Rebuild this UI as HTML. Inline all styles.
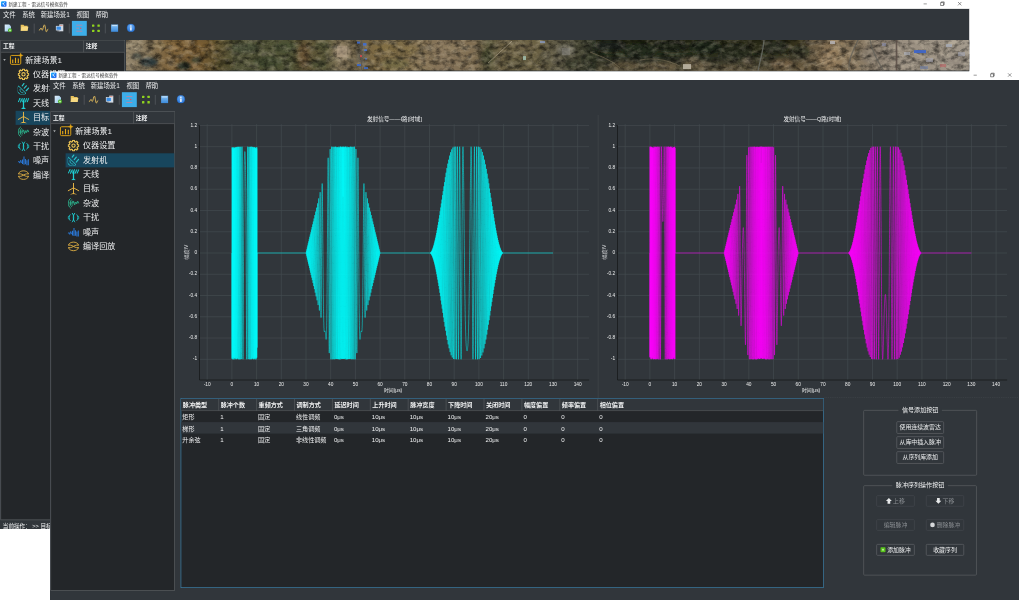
<!DOCTYPE html><html lang="zh-CN"><head><meta charset="utf-8"><title>新建工程 - 雷达信号模拟软件</title><style>
html,body{margin:0;padding:0;background:#fff;}body{width:1019px;height:600px;position:relative;overflow:hidden;font-family:"Liberation Sans","Noto Sans CJK SC",sans-serif;}.r{position:absolute;display:block}.t{position:absolute;white-space:nowrap;overflow:visible;}.win{position:absolute;overflow:hidden}
</style></head><body><div id="root" style="position:absolute;left:0;top:0;width:1019px;height:600px;will-change:transform;opacity:.999">
<div class="win" style="left:0;top:0;width:970px;height:529px">
<svg class="r" style="left:0;top:0" width="970" height="529" viewBox="0 0 970 529" fill="none"><rect x="0.00" y="8.60" width="969.20" height="521.00" fill="#31363b"/>
<rect x="0.00" y="0.00" width="969.20" height="8.70" fill="#ffffff"/>
<svg x="1.00" y="1.00" width="5.7" height="6.0" viewBox="0 0 12 12"><defs><linearGradient id="agu1" x1="0" y1="0" x2="1" y2="1"><stop offset="0" stop-color="#1ab4ff"/><stop offset="1" stop-color="#2453ee"/></linearGradient></defs><rect x="0" y="0" width="12" height="12" rx="2.400" fill="url(#agu1)"/><path d="M4.600 5.200 8 9.600" stroke="#fff" stroke-width="1.300" stroke-linecap="round" fill="none"/><circle cx="4.700" cy="5.300" r="1.300" fill="#fff"/><circle cx="7.400" cy="2.700" r=".9" fill="#e8f4ff"/><path d="M5.400 4.600 7.200 3" stroke="#dcecff" stroke-width=".7"/></svg>
<g transform="translate(918 0)"><path d="M5.600 3.900h3.200" stroke="#555" stroke-width=".6" fill="none"/><path d="M22.600 2.600h2.900v2.900h-2.900zM23.300 2.600v-.7h2.900v2.900h-.7" stroke="#333" stroke-width=".55" fill="none"/><path d="M40 2l3.400 3.400M43.400 2l-3.400 3.400" stroke="#444" stroke-width=".55" fill="none"/></g>
<defs><linearGradient id="ndu2" x1="0" y1="0" x2="1" y2="1"><stop offset="0" stop-color="#e3f1fb"/><stop offset="1" stop-color="#8fc4ec"/></linearGradient></defs><path d="M4.700 24.400h4.300l2 2v5.200h-6.300z" fill="url(#ndu2)"/><path d="M9 24.400v2h2z" fill="#b5d6f0"/><circle cx="10" cy="30.300" r="2" fill="#4db528"/><path d="M9 30.300h2M10 29.300v2" stroke="#e8ffe0" stroke-width=".6"/>
<path d="M20.700 24.800h2.800l.8 1h3.300v4.900h-6.900z" fill="#e8c25c"/><path d="M20.700 30.700l.9-4h6.800l-.9 4z" fill="#f7da82"/>
<rect x="33.70" y="23.60" width="1.00" height="9.80" fill="#4d5156"/>
<path d="M39.300 30.300c.8 0 1.100-2.300 1.700-2.300s.7 2.200 1.300 2.200 1.300-5.400 2.100-5.400 1.300 7 2 7 .7-2.600 1.400-2.600" stroke="#dcb75c" stroke-width="1" fill="none" stroke-linecap="round" stroke-linejoin="round"/>
<rect x="59.300" y="24.300" width="4" height="7" fill="#d3dae2"/><rect x="60" y="25" width="2.600" height=".6" fill="#e0705a"/><rect x="56.200" y="26.200" width="5" height="3.900" fill="#3a8ee6" stroke="#e4ebf2" stroke-width=".6"/><rect x="57.400" y="30.500" width="2.800" height=".8" fill="#b4bcc6"/>
<rect x="68.80" y="23.60" width="1.00" height="9.80" fill="#4d5156"/>
<rect x="71.90" y="20.90" width="14.90" height="14.90" fill="#3daee9"/>
<path d="M76.300 25.200h6M76.300 31.200h6M76.300 28.200h2.800" stroke="#d97d92" stroke-width=".7" fill="none"/><circle cx="80.700" cy="28.200" r=".7" fill="#e8505e"/>
<rect x="92" y="24.400" width="2.400" height="2.400" rx=".5" fill="#8fd31f"/><rect x="97.400" y="24.400" width="2.400" height="2.400" rx=".5" fill="#8fd31f"/><rect x="92" y="29.700" width="2.400" height="2.400" rx=".5" fill="#8fd31f"/><rect x="97.400" y="29.700" width="2.400" height="2.400" rx=".5" fill="#8fd31f"/>
<rect x="104.80" y="23.60" width="1.00" height="9.80" fill="#4d5156"/>
<defs><linearGradient id="bsu3" x1="0" y1="0" x2="0" y2="1"><stop offset="0" stop-color="#86c0f3"/><stop offset="1" stop-color="#3b8adb"/></linearGradient></defs><rect x="111.100" y="24.500" width="7" height="7.300" fill="url(#bsu3)"/><rect x="112.100" y="25.200" width="5" height=".9" fill="#d8ebfb"/>
<defs><radialGradient id="igu4" cx=".5" cy=".3" r=".8"><stop offset="0" stop-color="#6fb0f5"/><stop offset="1" stop-color="#1f6fd6"/></radialGradient></defs><circle cx="130.900" cy="27.900" r="3.900" fill="url(#igu4)" stroke="#1d64c4" stroke-width=".3"/><circle cx="130.900" cy="25.900" r=".75" fill="#fff"/><rect x="130.200" y="27.200" width="1.400" height="3.400" rx=".3" fill="#fff"/>
<rect x="0.75" y="40.35" width="123.90" height="479.50" fill="#232629" stroke="#5a5e62" stroke-width="0.7"/>
<rect x="1.10" y="40.70" width="123.20" height="11.40" fill="#31363b"/>
<path d="M1.10 52.30L124.30 52.30" stroke="#5a5e62" stroke-width="0.7"/>
<path d="M83.60 40.70L83.60 52.30" stroke="#5a5e62" stroke-width="0.7"/>
<path d="M3.200 59.00h2.600l-1.300 2z" fill="#a4a7aa"/>
<g transform="translate(0 60.30)"><rect x="10.450" y="-4.850" width="10.300" height="8.900" rx="1.100" fill="none" stroke="#e8a917" stroke-width=".9"/><path d="M12.700 2.700v-3.400M15.500 2.700v-5.200M18.300 2.700v-4.600" stroke="#e8a917" stroke-width="1.100"/><circle cx="20.700" cy="-4.900" r="1.900" fill="#232629"/><path d="M20.700 -7.400l.7 1.800 1.800.7-1.800.7-.7 1.800-.7-1.800-1.800-.7 1.800-.7z" fill="#e8a917" stroke="#e8a917" stroke-width=".3" stroke-linejoin="round"/></g>
<svg x="17.70" y="68.50" width="11.6" height="11.6" viewBox="0 0 24 24"><path d="M10.200 1.200h3.600l.5 2.700 1.900.8 2.300-1.600 2.500 2.500-1.600 2.300.8 1.900 2.700.5v3.600l-2.700.5-.8 1.900 1.600 2.300-2.500 2.500-2.300-1.600-1.900.8-.5 2.700h-3.600l-.5-2.700-1.900-.8-2.300 1.600-2.500-2.500 1.600-2.300-.8-1.900-2.700-.5v-3.600l2.700-.5.8-1.900-1.600-2.300 2.500-2.500 2.300 1.600 1.900-.8z" fill="none" stroke="#e7c053" stroke-width="2.500" stroke-linejoin="round"/><circle cx="12" cy="12" r="3.400" fill="none" stroke="#e7c053" stroke-width="2.300"/></svg>
<svg x="17.70" y="82.90" width="11.6" height="11.6" viewBox="0 0 24 24"><path d="M1.700 6.400a10.900 10.900 0 0 0 15.500 15.300z" fill="none" stroke="#2cc3c9" stroke-width="2" stroke-linejoin="round"/><path d="M4.800 12.500a7.500 7.500 0 0 0 7 8.200" stroke="#2cc3c9" stroke-width="1.600" fill="none"/><path d="M9.400 6 12.800 1.400M13.600 11 17.800 6M17.600 16.200l4.900-5.500" stroke="#2cc3c9" stroke-width="2.500" fill="none" stroke-linecap="round"/></svg>
<svg x="17.70" y="97.30" width="11.6" height="11.6" viewBox="0 0 24 24"><path d="M12 6.500v15" stroke="#1fd0d6" stroke-width="2.600" fill="none"/><path d="M6.800 24h10.400l-5.200-4.200z" fill="#1fd0d6"/><path d="M1.200 10 4.800 1.500M5.800 10.500 9.400 2M10.400 10 14 1.500M15 10.500 18.600 2M19.600 10l3.600-8.500" stroke="#1fd0d6" stroke-width="2" fill="none"/><path d="M4.800 1.500 5.800 10.500M9.400 2l1 8M14 1.500l1 9M18.600 2l1 8" stroke="#1fd0d6" stroke-width="1" fill="none"/></svg>
<rect x="15.60" y="110.80" width="108.70" height="14.10" fill="#18465d"/>
<svg x="17.70" y="111.70" width="11.6" height="11.6" viewBox="0 0 24 24"><path d="M12 .5v22M12 10 .8 16.200M12 10l11.200 6.200M12 21.500 6.200 24M12 21.500l5.800 2.500" stroke="#e6b445" stroke-width="2" fill="none" stroke-linecap="round"/></svg>
<svg x="17.70" y="126.10" width="11.6" height="11.6" viewBox="0 0 24 24"><path d="M6.500 1.500c-7 5-7 16 0 21M8.500 4.500c-4.500 4-4.500 11 0 15M10.300 7c-2.500 3-2.500 7 0 10" stroke="#2fc49a" stroke-width="1.700" fill="none"/><path d="M4 12h3" stroke="#2fc49a" stroke-width="6" opacity=".55"/><path d="M10 12.500c.8 0 1.200-4.500 2-4.500s1.300 7.500 2.200 7.500 1.400-6 2.300-6 1.200 3.800 2 3.800 1.200-5.500 2-5.500 1.200 4.700 2.700 4.700" stroke="#2fc49a" stroke-width="1.900" fill="none" stroke-linecap="round"/></svg>
<svg x="17.70" y="140.50" width="11.6" height="11.6" viewBox="0 0 24 24"><path d="M9 2.500c4.500 5 4.500 14 0 19M15 2.500c-4.500 5-4.500 14 0 19" stroke="#1fd0d6" stroke-width="2" fill="none"/><path d="M5.500 5.500c-3.500 3.500-3.500 9.500 0 13M18.500 5.500c3.500 3.500 3.500 9.500 0 13M2 8.500c-1.800 2-1.800 5 0 7M22 8.500c1.800 2 1.800 5 0 7" stroke="#1fd0d6" stroke-width="1.800" fill="none"/></svg>
<svg x="17.70" y="154.90" width="11.6" height="11.6" viewBox="0 0 24 24"><path d="M.8 15.500l1.700-2.500 1.800 4 2-6 1.700 5.500" stroke="#2a78d8" stroke-width="1.800" fill="none" stroke-linejoin="round"/><path d="M10 9.500v9.500M13 3.500v17M16 8.500v11M19 11v10.500M22 9v12.500" stroke="#2a78d8" stroke-width="2.100" fill="none"/></svg>
<svg x="17.70" y="169.30" width="11.6" height="11.6" viewBox="0 0 24 24"><path d="M1.500 9.500c2.500-8.500 18.500-8.500 21 0M22.500 14.500c-2.500 8.500-18.500 8.500-21 0" stroke="#e6b445" stroke-width="1.800" fill="none"/><path d="M1 9.500h5c3 0 9 5 12 5h5M1 14.500h5c3 0 9-5 12-5h5" stroke="#e6b445" stroke-width="1.800" fill="none"/></svg></svg>
<svg class="r" style="left:126.0px;top:39.9px" width="843.5" height="30.7" viewBox="0 0 843.5 30.7" preserveAspectRatio="none"><defs><linearGradient id="mg" x1="0" y1="0" x2="1" y2="0"><stop offset="0.0" stop-color="#8f8168"/><stop offset="0.0225" stop-color="#86775c"/><stop offset="0.0462" stop-color="#7d6540"/><stop offset="0.0818" stop-color="#785c34"/><stop offset="0.1055" stop-color="#62532f"/><stop offset="0.1292" stop-color="#525338"/><stop offset="0.1944" stop-color="#4f5235"/><stop offset="0.2122" stop-color="#5e5234"/><stop offset="0.2359" stop-color="#585638"/><stop offset="0.2537" stop-color="#84765a"/><stop offset="0.2727" stop-color="#6e6248"/><stop offset="0.2916" stop-color="#7a6844"/><stop offset="0.3248" stop-color="#7d6c48"/><stop offset="0.3723" stop-color="#86745a"/><stop offset="0.4138" stop-color="#7f6e52"/><stop offset="0.4292" stop-color="#58553a"/><stop offset="0.4434" stop-color="#6b6044"/><stop offset="0.4908" stop-color="#696043"/><stop offset="0.5098" stop-color="#5f5a46"/><stop offset="0.5382" stop-color="#454533"/><stop offset="0.556" stop-color="#2b3024"/><stop offset="0.6094" stop-color="#282d22"/><stop offset="0.6805" stop-color="#2b2f23"/><stop offset="0.7516" stop-color="#333426"/><stop offset="0.7872" stop-color="#403c2b"/><stop offset="0.8168" stop-color="#6c5d45"/><stop offset="0.8405" stop-color="#937c5c"/><stop offset="0.8666" stop-color="#8a7a62"/><stop offset="0.8939" stop-color="#8d8172"/><stop offset="0.9176" stop-color="#9a8f80"/><stop offset="0.9994" stop-color="#a0978a"/></linearGradient><filter id="mb" x="-20%" y="-50%" width="140%" height="200%"><feGaussianBlur stdDeviation="1.8"/></filter><filter id="mb2" x="-20%" y="-50%" width="140%" height="200%"><feGaussianBlur stdDeviation=".5"/></filter><filter id="mn" x="0" y="0" width="100%" height="100%"><feTurbulence type="fractalNoise" baseFrequency="0.14 0.2" numOctaves="4" seed="4"/><feColorMatrix type="matrix" values="0 0 0 0 0  0 0 0 0 0  0 0 0 0 0  2.4 0 0 0 -0.95"/></filter><filter id="mn2" x="0" y="0" width="100%" height="100%"><feTurbulence type="fractalNoise" baseFrequency="0.12 0.18" numOctaves="4" seed="23"/><feColorMatrix type="matrix" values="0 0 0 0 .95  0 0 0 0 .85  0 0 0 0 .65  0 2.6 0 0 -1.15"/></filter><linearGradient id="mv" x1="0" y1="0" x2="0" y2="1"><stop offset="0" stop-color="#0c120a" stop-opacity=".55"/><stop offset=".5" stop-color="#1a1e12" stop-opacity=".15"/><stop offset=".75" stop-color="#8a7452" stop-opacity=".3"/><stop offset="1" stop-color="#927a56" stop-opacity=".55"/></linearGradient><clipPath id="mc"><rect x="0" y="0" width="843.5" height="30.7"/></clipPath></defs><g clip-path="url(#mc)"><rect width="843.5" height="30.7" fill="url(#mg)"/><g filter="url(#mb)"><rect x="470" y="-4" width="210" height="40" fill="url(#mv)"/><ellipse cx="23.0" cy="22.1" rx="9" ry="4.5" fill="#27363a" opacity="0.95"/><ellipse cx="11.0" cy="16.1" rx="5" ry="3" fill="#3a4644" opacity="0.7"/><ellipse cx="7.0" cy="6.1" rx="8" ry="4" fill="#a39479" opacity="0.7"/><ellipse cx="32.0" cy="5.1" rx="8" ry="3" fill="#93805c" opacity="0.6"/><ellipse cx="58.0" cy="26.1" rx="7" ry="4" fill="#222b22" opacity="0.95"/><ellipse cx="70.0" cy="20.1" rx="5" ry="3" fill="#2d3327" opacity="0.8"/><ellipse cx="50.0" cy="7.1" rx="10" ry="4" fill="#8a6a3a" opacity="0.6"/><ellipse cx="79.0" cy="6.1" rx="10" ry="4" fill="#7e6034" opacity="0.6"/><ellipse cx="99.0" cy="24.1" rx="10" ry="5" fill="#48432a" opacity="0.6"/><ellipse cx="119.0" cy="8.1" rx="14" ry="5" fill="#49523a" opacity="0.6"/><ellipse cx="142.0" cy="22.1" rx="14" ry="5" fill="#3f482f" opacity="0.7"/><ellipse cx="159.0" cy="7.1" rx="12" ry="4" fill="#454e33" opacity="0.6"/><ellipse cx="177.0" cy="15.1" rx="6" ry="12" fill="#6e5636" opacity="0.6"/><ellipse cx="192.0" cy="24.1" rx="8" ry="4" fill="#434b31" opacity="0.6"/><ellipse cx="196.0" cy="6.1" rx="8" ry="4" fill="#50553a" opacity="0.5"/><ellipse cx="216.0" cy="12.1" rx="9" ry="7" fill="#a08e74" opacity="0.85"/><ellipse cx="236.0" cy="15.1" rx="5" ry="14" fill="#6a6458" opacity="0.7"/><ellipse cx="259.0" cy="8.1" rx="12" ry="5" fill="#86703f" opacity="0.5"/><ellipse cx="269.0" cy="24.1" rx="14" ry="5" fill="#6b6a40" opacity="0.5"/><ellipse cx="284.0" cy="10.1" rx="8" ry="4" fill="#8a7648" opacity="0.5"/><ellipse cx="299.0" cy="20.1" rx="14" ry="6" fill="#8f7c5e" opacity="0.5"/><ellipse cx="329.0" cy="8.1" rx="16" ry="5" fill="#92805f" opacity="0.5"/><ellipse cx="344.0" cy="24.1" rx="10" ry="4" fill="#7a6a4e" opacity="0.6"/><ellipse cx="361.0" cy="17.1" rx="6" ry="8" fill="#3f4229" opacity="0.85"/><ellipse cx="389.0" cy="24.1" rx="14" ry="4" fill="#5c563a" opacity="0.6"/><ellipse cx="399.0" cy="6.1" rx="12" ry="4" fill="#766a4e" opacity="0.5"/><ellipse cx="419.0" cy="18.1" rx="8" ry="6" fill="#5a563f" opacity="0.5"/><ellipse cx="440.0" cy="10.1" rx="9" ry="6" fill="#77746a" opacity="0.6"/><ellipse cx="446.0" cy="24.1" rx="8" ry="4" fill="#3a3c2b" opacity="0.8"/><ellipse cx="464.0" cy="18.1" rx="8" ry="7" fill="#383b2b" opacity="0.7"/><ellipse cx="484.0" cy="6.1" rx="16" ry="5" fill="#1f251a" opacity="0.95"/><ellipse cx="514.0" cy="10.1" rx="16" ry="6" fill="#262c1e" opacity="0.9"/><ellipse cx="544.0" cy="6.1" rx="16" ry="5" fill="#20261b" opacity="0.9"/><ellipse cx="499.0" cy="25.1" rx="16" ry="4" fill="#665a42" opacity="0.7"/><ellipse cx="534.0" cy="26.1" rx="18" ry="4" fill="#74654b" opacity="0.75"/><ellipse cx="564.0" cy="22.1" rx="10" ry="5" fill="#7a6a50" opacity="0.6"/><ellipse cx="579.0" cy="7.1" rx="16" ry="6" fill="#252a1d" opacity="0.95"/><ellipse cx="609.0" cy="12.1" rx="16" ry="8" fill="#2a2e20" opacity="0.9"/><ellipse cx="574.0" cy="25.1" rx="12" ry="4" fill="#70624a" opacity="0.7"/><ellipse cx="604.0" cy="27.1" rx="12" ry="3" fill="#6e5f45" opacity="0.6"/><ellipse cx="622.0" cy="22.1" rx="6" ry="4" fill="#80705a" opacity="0.5"/><ellipse cx="649.0" cy="7.1" rx="12" ry="6" fill="#2e3124" opacity="0.9"/><ellipse cx="674.0" cy="12.1" rx="10" ry="6" fill="#343526" opacity="0.85"/><ellipse cx="656.0" cy="24.1" rx="12" ry="5" fill="#7b6649" opacity="0.75"/><ellipse cx="679.0" cy="26.1" rx="10" ry="4" fill="#6a5a40" opacity="0.6"/><ellipse cx="702.0" cy="18.1" rx="10" ry="8" fill="#9a8262" opacity="0.7"/><ellipse cx="722.0" cy="8.1" rx="8" ry="5" fill="#7f7058" opacity="0.6"/><ellipse cx="724.0" cy="24.1" rx="8" ry="4" fill="#8a7a64" opacity="0.6"/><ellipse cx="744.0" cy="15.1" rx="10" ry="8" fill="#7d7468" opacity="0.5"/><ellipse cx="762.0" cy="10.1" rx="6" ry="8" fill="#8f8678" opacity="0.6"/><ellipse cx="784.0" cy="20.1" rx="12" ry="6" fill="#9b9184" opacity="0.6"/><ellipse cx="809.0" cy="10.1" rx="12" ry="6" fill="#9a8f80" opacity="0.6"/><ellipse cx="829.0" cy="22.1" rx="10" ry="5" fill="#8e8478" opacity="0.6"/></g><rect width="843.5" height="30.7" filter="url(#mn)" fill="#0a0f08" opacity=".55"/><rect width="843.5" height="30.7" filter="url(#mn2)" opacity=".22"/><g filter="url(#mb2)" transform="translate(-126 -39.9)" fill="none"><path d="M361.500 40v31" stroke="#5a564e" stroke-width="1.600" opacity=".8"/><path d="M512 41 488 63" stroke="#c4b8a0" stroke-width=".7" opacity=".7"/><path d="M420 58 470 50" stroke="#a89a80" stroke-width=".5" opacity=".5"/><path d="M764 40c-1 12-4 20-6 31" stroke="#6c6e68" stroke-width="1.300" opacity=".8"/><path d="M858 40c-4 10-10 18-9 31M870 40c2 12 8 22 14 31" stroke="#5e5c56" stroke-width="1.300" opacity=".7"/><path d="M896.500 40v31" stroke="#5b4e46" stroke-width="1.700" opacity=".85"/><path d="M815 66c12-6 24-8 36-14" stroke="#b8a888" stroke-width=".6" opacity=".6"/><path d="M590 52c10 4 22 8 30 16M640 60c14-3 28 0 40 6" stroke="#8a7c60" stroke-width=".8" opacity=".6"/><rect x="357" y="41.5" width="3" height="2" fill="#3a6ad0" opacity="0.9"/><rect x="363" y="43" width="3.5" height="2.5" fill="#3f6fd6" opacity="0.9"/><rect x="364" y="49" width="3" height="2" fill="#4a78d8" opacity="0.8"/><rect x="357" y="64" width="4" height="2" fill="#3a6ad0" opacity="0.9"/><rect x="364" y="67" width="4" height="2" fill="#3f6fd6" opacity="0.8"/><rect x="360" y="55" width="2" height="2" fill="#d04a4a" opacity="0.9"/><rect x="365" y="58" width="2" height="1.5" fill="#5a86dc" opacity="0.7"/><rect x="914" y="50" width="12" height="3" fill="#3f66c8" opacity="0.95"/><rect x="904" y="52" width="6" height="3" fill="#b8bcc8" opacity="0.6"/><rect x="926" y="58" width="7" height="4" fill="#a8a8b4" opacity="0.6"/><rect x="830" y="41" width="5" height="3" fill="#c8c8d0" opacity="0.7"/><rect x="337" y="46" width="10" height="11" fill="#b4a088" opacity="0.5"/><rect x="523" y="56" width="3" height="4" fill="#a8c8b8" opacity="0.8"/><rect x="940" y="64" width="6" height="3" fill="#b86a6a" opacity="0.7"/><rect x="946" y="44" width="6" height="3" fill="#aab0c0" opacity="0.7"/><rect x="958" y="52" width="7" height="4" fill="#a0a4b0" opacity="0.6"/><rect x="683" y="64" width="8" height="5" fill="#c8c0b0" opacity="0.8"/><rect x="540" y="41" width="5" height="2" fill="#8aa0d0" opacity="0.7"/><rect x="920" y="66" width="8" height="3" fill="#7080a8" opacity="0.6"/><rect x="882" y="43" width="4" height="3" fill="#8890b0" opacity="0.6"/><rect x="562" y="48" width="8" height="7" fill="#8c8a84" opacity="0.5"/></g></g></svg>
<div class="t" style="left:8.40px;top:1.07px;height:7.28px;line-height:7.28px;font-size:4.55px;color:#3a3a3a;font-weight:400;word-spacing:.5px;">新建工程 - 雷达信号模拟软件</div>
<div class="t" style="left:2.90px;top:9.56px;height:10.24px;line-height:10.24px;font-size:6.4px;color:#eff0f1;font-weight:400;">文件</div>
<div class="t" style="left:22.20px;top:9.56px;height:10.24px;line-height:10.24px;font-size:6.4px;color:#eff0f1;font-weight:400;">系统</div>
<div class="t" style="left:40.70px;top:9.56px;height:10.24px;line-height:10.24px;font-size:6.4px;color:#eff0f1;font-weight:400;">新建场景1</div>
<div class="t" style="left:76.40px;top:9.56px;height:10.24px;line-height:10.24px;font-size:6.4px;color:#eff0f1;font-weight:400;">视图</div>
<div class="t" style="left:95.40px;top:9.56px;height:10.24px;line-height:10.24px;font-size:6.4px;color:#eff0f1;font-weight:400;">帮助</div>
<div class="t" style="left:2.90px;top:42.38px;height:9.28px;line-height:9.28px;font-size:5.8px;color:#eff0f1;font-weight:700;">工程</div>
<div class="t" style="left:85.80px;top:42.38px;height:9.28px;line-height:9.28px;font-size:5.8px;color:#eff0f1;font-weight:700;">注释</div>
<div class="t" style="left:25.20px;top:54.55px;height:12.96px;line-height:12.96px;font-size:8.1px;color:#eff0f1;font-weight:400;">新建场景1</div>
<div class="t" style="left:33.00px;top:68.95px;height:12.96px;line-height:12.96px;font-size:8.1px;color:#eff0f1;font-weight:400;">仪器设置</div>
<div class="t" style="left:33.00px;top:83.35px;height:12.96px;line-height:12.96px;font-size:8.1px;color:#eff0f1;font-weight:400;">发射机</div>
<div class="t" style="left:33.00px;top:97.75px;height:12.96px;line-height:12.96px;font-size:8.1px;color:#eff0f1;font-weight:400;">天线</div>
<div class="t" style="left:33.00px;top:112.15px;height:12.96px;line-height:12.96px;font-size:8.1px;color:#eff0f1;font-weight:400;">目标</div>
<div class="t" style="left:33.00px;top:126.55px;height:12.96px;line-height:12.96px;font-size:8.1px;color:#eff0f1;font-weight:400;">杂波</div>
<div class="t" style="left:33.00px;top:140.95px;height:12.96px;line-height:12.96px;font-size:8.1px;color:#eff0f1;font-weight:400;">干扰</div>
<div class="t" style="left:33.00px;top:155.35px;height:12.96px;line-height:12.96px;font-size:8.1px;color:#eff0f1;font-weight:400;">噪声</div>
<div class="t" style="left:33.00px;top:169.75px;height:12.96px;line-height:12.96px;font-size:8.1px;color:#eff0f1;font-weight:400;">编译回放</div>
<div class="t" style="left:2.80px;top:521.52px;height:8.96px;line-height:8.96px;font-size:5.6px;color:#eff0f1;font-weight:400;">当前操作： &gt;&gt; 目标</div>
</div>
<div class="win" style="left:50px;top:71px;width:969px;height:529px"><div style="position:absolute;left:0;top:0;width:969px;height:529px">
<svg class="r" style="left:0;top:0" width="970" height="529" viewBox="0 0 970 529" fill="none"><g transform="translate(0 0.3)">
<rect x="0.00" y="8.60" width="969.20" height="521.00" fill="#31363b"/>
<rect x="0.00" y="0.00" width="969.20" height="8.70" fill="#ffffff"/>
<svg x="1.00" y="1.00" width="5.7" height="6.0" viewBox="0 0 12 12"><defs><linearGradient id="agu5" x1="0" y1="0" x2="1" y2="1"><stop offset="0" stop-color="#1ab4ff"/><stop offset="1" stop-color="#2453ee"/></linearGradient></defs><rect x="0" y="0" width="12" height="12" rx="2.400" fill="url(#agu5)"/><path d="M4.600 5.200 8 9.600" stroke="#fff" stroke-width="1.300" stroke-linecap="round" fill="none"/><circle cx="4.700" cy="5.300" r="1.300" fill="#fff"/><circle cx="7.400" cy="2.700" r=".9" fill="#e8f4ff"/><path d="M5.400 4.600 7.200 3" stroke="#dcecff" stroke-width=".7"/></svg>
<g transform="translate(918 0)"><path d="M5.600 3.900h3.200" stroke="#555" stroke-width=".6" fill="none"/><path d="M22.600 2.600h2.900v2.900h-2.900zM23.300 2.600v-.7h2.900v2.900h-.7" stroke="#333" stroke-width=".55" fill="none"/><path d="M40 2l3.400 3.400M43.400 2l-3.400 3.400" stroke="#444" stroke-width=".55" fill="none"/></g>
<defs><linearGradient id="ndu6" x1="0" y1="0" x2="1" y2="1"><stop offset="0" stop-color="#e3f1fb"/><stop offset="1" stop-color="#8fc4ec"/></linearGradient></defs><path d="M4.700 24.400h4.300l2 2v5.200h-6.300z" fill="url(#ndu6)"/><path d="M9 24.400v2h2z" fill="#b5d6f0"/><circle cx="10" cy="30.300" r="2" fill="#4db528"/><path d="M9 30.300h2M10 29.300v2" stroke="#e8ffe0" stroke-width=".6"/>
<path d="M20.700 24.800h2.800l.8 1h3.300v4.900h-6.900z" fill="#e8c25c"/><path d="M20.700 30.700l.9-4h6.800l-.9 4z" fill="#f7da82"/>
<rect x="33.70" y="23.60" width="1.00" height="9.80" fill="#4d5156"/>
<path d="M39.300 30.300c.8 0 1.100-2.300 1.700-2.300s.7 2.200 1.300 2.200 1.300-5.400 2.100-5.400 1.300 7 2 7 .7-2.600 1.400-2.600" stroke="#dcb75c" stroke-width="1" fill="none" stroke-linecap="round" stroke-linejoin="round"/>
<rect x="59.300" y="24.300" width="4" height="7" fill="#d3dae2"/><rect x="60" y="25" width="2.600" height=".6" fill="#e0705a"/><rect x="56.200" y="26.200" width="5" height="3.900" fill="#3a8ee6" stroke="#e4ebf2" stroke-width=".6"/><rect x="57.400" y="30.500" width="2.800" height=".8" fill="#b4bcc6"/>
<rect x="68.80" y="23.60" width="1.00" height="9.80" fill="#4d5156"/>
<rect x="71.90" y="20.90" width="14.90" height="14.90" fill="#3daee9"/>
<path d="M76.300 25.200h6M76.300 31.200h6M76.300 28.200h2.800" stroke="#d97d92" stroke-width=".7" fill="none"/><circle cx="80.700" cy="28.200" r=".7" fill="#e8505e"/>
<rect x="92" y="24.400" width="2.400" height="2.400" rx=".5" fill="#8fd31f"/><rect x="97.400" y="24.400" width="2.400" height="2.400" rx=".5" fill="#8fd31f"/><rect x="92" y="29.700" width="2.400" height="2.400" rx=".5" fill="#8fd31f"/><rect x="97.400" y="29.700" width="2.400" height="2.400" rx=".5" fill="#8fd31f"/>
<rect x="104.80" y="23.60" width="1.00" height="9.80" fill="#4d5156"/>
<defs><linearGradient id="bsu7" x1="0" y1="0" x2="0" y2="1"><stop offset="0" stop-color="#86c0f3"/><stop offset="1" stop-color="#3b8adb"/></linearGradient></defs><rect x="111.100" y="24.500" width="7" height="7.300" fill="url(#bsu7)"/><rect x="112.100" y="25.200" width="5" height=".9" fill="#d8ebfb"/>
<defs><radialGradient id="igu8" cx=".5" cy=".3" r=".8"><stop offset="0" stop-color="#6fb0f5"/><stop offset="1" stop-color="#1f6fd6"/></radialGradient></defs><circle cx="130.900" cy="27.900" r="3.900" fill="url(#igu8)" stroke="#1d64c4" stroke-width=".3"/><circle cx="130.900" cy="25.900" r=".75" fill="#fff"/><rect x="130.200" y="27.200" width="1.400" height="3.400" rx=".3" fill="#fff"/>
<rect x="0.75" y="40.35" width="123.90" height="478.90" fill="#232629" stroke="#5a5e62" stroke-width="0.7"/>
<rect x="1.10" y="40.70" width="123.20" height="11.40" fill="#31363b"/>
<path d="M1.10 52.30L124.30 52.30" stroke="#5a5e62" stroke-width="0.7"/>
<path d="M83.60 40.70L83.60 52.30" stroke="#5a5e62" stroke-width="0.7"/>
<path d="M3.200 59.00h2.600l-1.300 2z" fill="#a4a7aa"/>
<g transform="translate(0 60.30)"><rect x="10.450" y="-4.850" width="10.300" height="8.900" rx="1.100" fill="none" stroke="#e8a917" stroke-width=".9"/><path d="M12.700 2.700v-3.400M15.500 2.700v-5.200M18.300 2.700v-4.600" stroke="#e8a917" stroke-width="1.100"/><circle cx="20.700" cy="-4.900" r="1.900" fill="#232629"/><path d="M20.700 -7.400l.7 1.800 1.800.7-1.800.7-.7 1.800-.7-1.800-1.800-.7 1.800-.7z" fill="#e8a917" stroke="#e8a917" stroke-width=".3" stroke-linejoin="round"/></g>
<svg x="17.70" y="68.50" width="11.6" height="11.6" viewBox="0 0 24 24"><path d="M10.200 1.200h3.600l.5 2.700 1.900.8 2.300-1.600 2.500 2.500-1.600 2.300.8 1.900 2.700.5v3.600l-2.700.5-.8 1.900 1.600 2.300-2.500 2.500-2.300-1.600-1.900.8-.5 2.700h-3.600l-.5-2.700-1.900-.8-2.300 1.600-2.500-2.500 1.600-2.300-.8-1.900-2.700-.5v-3.600l2.700-.5.8-1.900-1.600-2.300 2.500-2.500 2.300 1.600 1.900-.8z" fill="none" stroke="#e7c053" stroke-width="2.500" stroke-linejoin="round"/><circle cx="12" cy="12" r="3.400" fill="none" stroke="#e7c053" stroke-width="2.300"/></svg>
<rect x="15.60" y="82.00" width="108.70" height="14.10" fill="#18465d"/>
<svg x="17.70" y="82.90" width="11.6" height="11.6" viewBox="0 0 24 24"><path d="M1.700 6.400a10.900 10.900 0 0 0 15.500 15.300z" fill="none" stroke="#2cc3c9" stroke-width="2" stroke-linejoin="round"/><path d="M4.800 12.500a7.500 7.500 0 0 0 7 8.200" stroke="#2cc3c9" stroke-width="1.600" fill="none"/><path d="M9.400 6 12.800 1.400M13.600 11 17.800 6M17.600 16.200l4.900-5.500" stroke="#2cc3c9" stroke-width="2.500" fill="none" stroke-linecap="round"/></svg>
<svg x="17.70" y="97.30" width="11.6" height="11.6" viewBox="0 0 24 24"><path d="M12 6.500v15" stroke="#1fd0d6" stroke-width="2.600" fill="none"/><path d="M6.800 24h10.400l-5.200-4.200z" fill="#1fd0d6"/><path d="M1.200 10 4.800 1.500M5.800 10.500 9.400 2M10.400 10 14 1.500M15 10.500 18.600 2M19.600 10l3.600-8.500" stroke="#1fd0d6" stroke-width="2" fill="none"/><path d="M4.800 1.500 5.800 10.500M9.400 2l1 8M14 1.500l1 9M18.600 2l1 8" stroke="#1fd0d6" stroke-width="1" fill="none"/></svg>
<svg x="17.70" y="111.70" width="11.6" height="11.6" viewBox="0 0 24 24"><path d="M12 .5v22M12 10 .8 16.200M12 10l11.200 6.200M12 21.500 6.200 24M12 21.500l5.800 2.500" stroke="#e6b445" stroke-width="2" fill="none" stroke-linecap="round"/></svg>
<svg x="17.70" y="126.10" width="11.6" height="11.6" viewBox="0 0 24 24"><path d="M6.500 1.500c-7 5-7 16 0 21M8.500 4.500c-4.500 4-4.500 11 0 15M10.300 7c-2.500 3-2.500 7 0 10" stroke="#2fc49a" stroke-width="1.700" fill="none"/><path d="M4 12h3" stroke="#2fc49a" stroke-width="6" opacity=".55"/><path d="M10 12.500c.8 0 1.200-4.500 2-4.500s1.300 7.500 2.200 7.500 1.400-6 2.300-6 1.200 3.800 2 3.800 1.200-5.500 2-5.500 1.200 4.700 2.700 4.700" stroke="#2fc49a" stroke-width="1.900" fill="none" stroke-linecap="round"/></svg>
<svg x="17.70" y="140.50" width="11.6" height="11.6" viewBox="0 0 24 24"><path d="M9 2.500c4.500 5 4.500 14 0 19M15 2.500c-4.500 5-4.500 14 0 19" stroke="#1fd0d6" stroke-width="2" fill="none"/><path d="M5.500 5.500c-3.500 3.500-3.500 9.500 0 13M18.500 5.500c3.500 3.500 3.500 9.500 0 13M2 8.500c-1.800 2-1.800 5 0 7M22 8.500c1.800 2 1.800 5 0 7" stroke="#1fd0d6" stroke-width="1.800" fill="none"/></svg>
<svg x="17.70" y="154.90" width="11.6" height="11.6" viewBox="0 0 24 24"><path d="M.8 15.500l1.700-2.500 1.800 4 2-6 1.700 5.500" stroke="#2a78d8" stroke-width="1.800" fill="none" stroke-linejoin="round"/><path d="M10 9.500v9.500M13 3.500v17M16 8.500v11M19 11v10.500M22 9v12.500" stroke="#2a78d8" stroke-width="2.100" fill="none"/></svg>
<svg x="17.70" y="169.30" width="11.6" height="11.6" viewBox="0 0 24 24"><path d="M1.500 9.500c2.500-8.500 18.500-8.500 21 0M22.500 14.500c-2.500 8.500-18.500 8.500-21 0" stroke="#e6b445" stroke-width="1.800" fill="none"/><path d="M1 9.500h5c3 0 9 5 12 5h5M1 14.500h5c3 0 9-5 12-5h5" stroke="#e6b445" stroke-width="1.800" fill="none"/></svg>
</g></svg>
<div class="t" style="left:8.40px;top:1.37px;height:7.28px;line-height:7.28px;font-size:4.55px;color:#3a3a3a;font-weight:400;word-spacing:.5px;">新建工程 - 雷达信号模拟软件</div>
<div class="t" style="left:2.90px;top:9.86px;height:10.24px;line-height:10.24px;font-size:6.4px;color:#eff0f1;font-weight:400;">文件</div>
<div class="t" style="left:22.20px;top:9.86px;height:10.24px;line-height:10.24px;font-size:6.4px;color:#eff0f1;font-weight:400;">系统</div>
<div class="t" style="left:40.70px;top:9.86px;height:10.24px;line-height:10.24px;font-size:6.4px;color:#eff0f1;font-weight:400;">新建场景1</div>
<div class="t" style="left:76.40px;top:9.86px;height:10.24px;line-height:10.24px;font-size:6.4px;color:#eff0f1;font-weight:400;">视图</div>
<div class="t" style="left:95.40px;top:9.86px;height:10.24px;line-height:10.24px;font-size:6.4px;color:#eff0f1;font-weight:400;">帮助</div>
<div class="t" style="left:2.90px;top:42.68px;height:9.28px;line-height:9.28px;font-size:5.8px;color:#eff0f1;font-weight:700;">工程</div>
<div class="t" style="left:85.80px;top:42.68px;height:9.28px;line-height:9.28px;font-size:5.8px;color:#eff0f1;font-weight:700;">注释</div>
<div class="t" style="left:25.20px;top:54.85px;height:12.96px;line-height:12.96px;font-size:8.1px;color:#eff0f1;font-weight:400;">新建场景1</div>
<div class="t" style="left:33.00px;top:69.25px;height:12.96px;line-height:12.96px;font-size:8.1px;color:#eff0f1;font-weight:400;">仪器设置</div>
<div class="t" style="left:33.00px;top:83.65px;height:12.96px;line-height:12.96px;font-size:8.1px;color:#eff0f1;font-weight:400;">发射机</div>
<div class="t" style="left:33.00px;top:98.05px;height:12.96px;line-height:12.96px;font-size:8.1px;color:#eff0f1;font-weight:400;">天线</div>
<div class="t" style="left:33.00px;top:112.45px;height:12.96px;line-height:12.96px;font-size:8.1px;color:#eff0f1;font-weight:400;">目标</div>
<div class="t" style="left:33.00px;top:126.85px;height:12.96px;line-height:12.96px;font-size:8.1px;color:#eff0f1;font-weight:400;">杂波</div>
<div class="t" style="left:33.00px;top:141.25px;height:12.96px;line-height:12.96px;font-size:8.1px;color:#eff0f1;font-weight:400;">干扰</div>
<div class="t" style="left:33.00px;top:155.65px;height:12.96px;line-height:12.96px;font-size:8.1px;color:#eff0f1;font-weight:400;">噪声</div>
<div class="t" style="left:33.00px;top:170.05px;height:12.96px;line-height:12.96px;font-size:8.1px;color:#eff0f1;font-weight:400;">编译回放</div>
</div></div>
<svg class="r" style="left:0;top:0" width="1019" height="600" viewBox="0 0 1019 600" fill="none"><path d="M207.20 124.2V380.0M231.90 124.2V380.0M256.60 124.2V380.0M281.30 124.2V380.0M306.00 124.2V380.0M330.70 124.2V380.0M355.40 124.2V380.0M380.10 124.2V380.0M404.80 124.2V380.0M429.50 124.2V380.0M454.20 124.2V380.0M478.90 124.2V380.0M503.60 124.2V380.0M528.30 124.2V380.0M553.00 124.2V380.0M577.70 124.2V380.0M199.50 359.30H589.10M199.50 338.04H589.10M199.50 316.78H589.10M199.50 295.52H589.10M199.50 274.26H589.10M199.50 253.00H589.10M199.50 231.74H589.10M199.50 210.48H589.10M199.50 189.22H589.10M199.50 167.96H589.10M199.50 146.70H589.10M199.50 125.44H589.10" stroke="#444a4f" stroke-width=".7" fill="none"/>
<path d="M257.1 253.0H306.0M380.1 253.0H429.5M503.6 253.0H553.0" stroke="#00ffff" stroke-width="1.3" opacity=".36" fill="none"/>
<path d="M231.9 253.0L231.9 273.2L231.9 320.3L231.9 351.3L232.0 358.8L232.0 341.1L232.0 302.7L232.0 252.6L232.1 202.7L232.1 164.6L232.1 147.3L232.1 154.4L232.2 184.4L232.2 230.1L232.2 281.0L232.2 325.4L232.3 353.2L232.3 358.3L232.3 339.5L232.3 301.3L232.4 252.4L232.4 203.6L232.4 166.0L232.4 147.7L232.5 152.7L232.5 179.7L232.5 222.8L232.5 272.3L232.6 317.6L232.6 348.8L232.6 359.3L232.6 346.9L232.7 314.5L232.7 269.0L232.7 220.3L232.7 178.5L232.8 152.5L232.8 147.6L232.8 164.7L232.8 200.2L232.9 246.6L232.9 294.1L232.9 333.2L232.9 355.7L233.0 357.3L233.0 337.7L233.0 301.0L233.0 254.7L233.1 208.2L233.1 170.7L233.1 149.6L233.1 149.1L233.2 169.1L233.2 205.5L233.2 251.1L233.2 297.0L233.3 334.3L233.3 355.8L233.3 357.5L233.3 339.2L233.4 304.4L233.4 260.0L233.4 214.4L233.4 176.1L233.5 152.3L233.5 147.3L233.5 162.1L233.5 193.6L233.6 236.0L233.6 281.5L233.6 321.6L233.6 349.2L233.7 359.3L233.7 350.2L233.7 323.6L233.7 284.5L233.8 239.9L233.8 197.6L233.8 165.3L233.8 148.4L233.9 149.8L233.9 169.3L233.9 203.2L233.9 245.6L234.0 289.2L234.0 326.6L234.0 351.3L234.0 359.3L234.1 349.3L234.1 323.2L234.1 285.4L234.1 242.2L234.1 201.0L234.2 168.4L234.2 149.8L234.2 148.1L234.2 163.5L234.3 193.4L234.3 232.8L234.3 275.4L234.3 314.3L234.4 343.3L234.4 358.0L234.4 356.1L234.4 338.1L234.5 306.8L234.5 267.2L234.5 225.5L234.5 188.1L234.6 160.8L234.6 147.6L234.6 150.4L234.6 168.7L234.7 199.7L234.7 238.6L234.7 279.5L234.7 316.4L234.8 343.9L234.8 357.9L234.8 356.6L234.8 340.3L234.9 311.3L234.9 274.1L234.9 233.9L234.9 196.5L235.0 167.2L235.0 150.1L235.0 147.5L235.0 159.7L235.1 184.8L235.1 219.2L235.1 258.3L235.1 296.5L235.2 328.7L235.2 350.6L235.2 359.2L235.2 353.6L235.3 334.5L235.3 304.6L235.3 268.0L235.3 229.5L235.4 194.2L235.4 166.6L235.4 150.3L235.4 147.2L235.5 157.8L235.5 180.4L235.5 212.2L235.5 249.1L235.6 286.4L235.6 319.4L235.6 344.0L235.6 357.4L235.7 357.9L235.7 345.6L235.7 322.0L235.7 290.1L235.8 253.9L235.8 217.6L235.8 185.7L235.8 161.8L235.9 148.7L235.9 147.9L235.9 159.3L235.9 181.5L236.0 211.9L236.0 247.0L236.0 282.6L236.0 314.8L236.1 339.9L236.1 355.2L236.1 359.1L236.1 351.2L236.2 332.5L236.2 305.1L236.2 272.2L236.2 237.2L236.3 204.0L236.3 176.2L236.3 156.6L236.3 147.3L236.4 149.2L236.4 161.9L236.4 184.1L236.4 213.3L236.4 246.6L236.5 280.4L236.5 311.3L236.5 336.3L236.5 352.8L236.6 359.2L236.6 355.1L236.6 340.9L236.6 318.2L236.7 289.1L236.7 256.6L236.7 223.8L236.7 194.0L236.8 169.8L236.8 153.7L236.8 146.9L236.8 150.0L236.9 162.8L236.9 183.8L236.9 211.1L236.9 242.2L237.0 274.2L237.0 304.1L237.0 329.4L237.0 347.8L237.1 357.7L237.1 358.5L237.1 349.9L237.1 333.0L237.2 309.3L237.2 280.7L237.2 250.0L237.2 219.5L237.3 192.0L237.3 169.7L237.3 154.3L237.3 147.2L237.4 148.7L237.4 158.7L237.4 176.4L237.4 200.1L237.5 228.0L237.5 257.8L237.5 287.1L237.5 313.6L237.6 335.3L237.6 350.7L237.6 358.4L237.6 358.1L237.7 349.9L237.7 334.4L237.7 312.9L237.7 287.0L237.8 258.7L237.8 230.1L237.8 203.2L237.8 180.0L237.9 162.1L237.9 150.8L237.9 146.7L237.9 150.1L238.0 160.6L238.0 177.5L238.0 199.5L238.0 225.1L238.1 252.4L238.1 279.8L238.1 305.2L238.1 327.1L238.2 344.0L238.2 354.9L238.2 359.2L238.2 356.7L238.3 347.5L238.3 332.4L238.3 312.4L238.3 288.7L238.4 262.9L238.4 236.6L238.4 211.3L238.4 188.7L238.5 170.1L238.5 156.4L238.5 148.6L238.5 146.9L238.6 151.3L238.6 161.7L238.6 177.2L238.6 197.0L238.6 219.9L238.7 244.5L238.7 269.5L238.7 293.5L238.7 315.2L238.8 333.5L238.8 347.3L238.8 356.0L238.8 359.3L238.9 356.9L238.9 349.2L238.9 336.5L238.9 319.6L239.0 299.3L239.0 276.8L239.0 253.3L239.0 229.8L239.1 207.5L239.1 187.5L239.1 170.8L239.1 158.1L239.2 150.0L239.2 146.8L239.2 148.5L239.2 155.0L239.3 166.0L239.3 181.0L239.3 199.1L239.3 219.5L239.4 241.3L239.4 263.6L239.4 285.3L239.4 305.4L239.5 323.3L239.5 338.1L239.5 349.3L239.5 356.4L239.6 359.3L239.6 357.7L239.6 352.0L239.6 342.3L239.7 329.1L239.7 313.0L239.7 294.7L239.7 274.8L239.8 254.2L239.8 233.6L239.8 213.9L239.8 195.7L239.9 179.7L239.9 166.4L239.9 156.3L239.9 149.7L240.0 146.8L240.0 147.7L240.0 152.1L240.0 160.0L240.1 171.0L240.1 184.7L240.1 200.6L240.1 218.2L240.2 236.7L240.2 255.7L240.2 274.6L240.2 292.6L240.3 309.3L240.3 324.2L240.3 336.8L240.3 346.9L240.4 354.1L240.4 358.2L240.4 359.3L240.4 357.2L240.5 352.3L240.5 344.5L240.5 334.2L240.5 321.7L240.6 307.5L240.6 291.8L240.6 275.2L240.6 258.1L240.7 241.0L240.7 224.2L240.7 208.3L240.7 193.7L240.8 180.5L240.8 169.3L240.8 160.1L240.8 153.3L240.9 148.8L240.9 146.8L240.9 147.3L240.9 150.2L240.9 155.4L241.0 162.7L241.0 172.0L241.0 183.0L241.0 195.4L241.1 208.9L241.1 223.3L241.1 238.2L241.1 253.3L241.2 268.3L241.2 282.9L241.2 296.8L241.2 309.8L241.3 321.6L241.3 332.1L241.3 341.0L241.3 348.2L241.4 353.7L241.4 357.3L241.4 359.1L241.4 359.0L241.5 357.2L241.5 353.6L241.5 348.4L241.5 341.6L241.6 333.5L241.6 324.2L241.6 313.8L241.6 302.6L241.7 290.7L241.7 278.3L241.7 265.7L241.7 253.0L241.8 240.4L241.8 228.0L241.8 216.1L241.8 204.8L241.9 194.3L241.9 184.5L241.9 175.8L241.9 168.1L242.0 161.5L242.0 156.1L242.0 151.9L242.0 148.9L242.1 147.2L242.1 146.7L242.1 147.4L242.1 149.2L242.2 152.2L242.2 156.2L242.2 161.2L242.2 167.1L242.3 173.7L242.3 181.1L242.3 189.2L242.3 197.7L242.4 206.7L242.4 216.0L242.4 225.6L242.4 235.3L242.5 245.1L242.5 254.8L242.5 264.4L242.5 273.8L242.6 283.0L242.6 291.8L242.6 300.2L242.6 308.2L242.7 315.8L242.7 322.7L242.7 329.2L242.7 335.0L242.8 340.2L242.8 344.8L242.8 348.8L242.8 352.1L242.9 354.8L242.9 356.8L242.9 358.2L242.9 359.1L243.0 359.3L243.0 359.0L243.0 358.1L243.0 356.7L243.1 354.8L243.1 352.5L243.1 349.7L243.1 346.5L243.1 343.0L243.2 339.1L243.2 334.9L243.2 330.5L243.2 325.8L243.3 320.9L243.3 315.8L243.3 310.6L243.3 305.3L243.4 299.9L243.4 294.4L243.4 288.9L243.4 283.3L243.5 277.8L243.5 272.3L243.5 266.9L243.5 261.5L243.6 256.2L243.6 251.0L243.6 245.8L243.6 240.8L243.7 236.0L243.7 231.2L243.7 226.6L243.7 222.2L243.8 217.9L243.8 213.8L243.8 209.8L243.8 206.0L243.9 202.3L243.9 198.8L243.9 195.5L243.9 192.3L244.0 189.3L244.0 186.5L244.0 183.8L244.0 181.2L244.1 178.8L244.1 176.5L244.1 174.4L244.1 172.4L244.2 170.6L244.2 168.8L244.2 167.2L244.2 165.7L244.3 164.3L244.3 163.0L244.3 161.8L244.3 160.6L244.4 159.6L244.4 158.7L244.4 157.8L244.4 157.0L244.5 156.3L244.5 155.6L244.5 155.1L244.5 154.5L244.6 154.0L244.6 153.6L244.6 153.2L244.6 152.9L244.7 152.6L244.7 152.3L244.7 152.1L244.7 151.9L244.8 151.8L244.8 151.6L244.8 151.5L244.8 151.5L244.9 151.5L244.9 151.5L244.9 151.5L244.9 151.5L245.0 151.6L245.0 151.8L245.0 151.9L245.0 152.1L245.1 152.3L245.1 152.6L245.1 152.9L245.1 153.2L245.2 153.6L245.2 154.0L245.2 154.5L245.2 155.1L245.3 155.7L245.3 156.3L245.3 157.0L245.3 157.8L245.3 158.7L245.4 159.6L245.4 160.7L245.4 161.8L245.4 163.0L245.5 164.3L245.5 165.7L245.5 167.2L245.5 168.9L245.6 170.6L245.6 172.5L245.6 174.5L245.6 176.6L245.7 178.9L245.7 181.3L245.7 183.8L245.7 186.6L245.8 189.4L245.8 192.4L245.8 195.6L245.8 198.9L245.9 202.4L245.9 206.1L245.9 209.9L245.9 213.9L246.0 218.0L246.0 222.3L246.0 226.8L246.0 231.4L246.1 236.1L246.1 241.0L246.1 246.0L246.1 251.1L246.2 256.3L246.2 261.6L246.2 267.0L246.2 272.5L246.3 278.0L246.3 283.5L246.3 289.0L246.3 294.6L246.4 300.0L246.4 305.4L246.4 310.8L246.4 316.0L246.5 321.0L246.5 325.9L246.5 330.6L246.5 335.0L246.6 339.2L246.6 343.1L246.6 346.6L246.6 349.8L246.7 352.5L246.7 354.9L246.7 356.7L246.7 358.1L246.8 359.0L246.8 359.3L246.8 359.0L246.8 358.2L246.9 356.8L246.9 354.7L246.9 352.0L246.9 348.6L247.0 344.7L247.0 340.1L247.0 334.8L247.0 329.0L247.1 322.5L247.1 315.5L247.1 308.0L247.1 300.0L247.2 291.6L247.2 282.7L247.2 273.5L247.2 264.1L247.3 254.5L247.3 244.8L247.3 235.0L247.3 225.3L247.4 215.8L247.4 206.4L247.4 197.5L247.4 188.9L247.5 180.9L247.5 173.5L247.5 166.9L247.5 161.0L247.6 156.1L247.6 152.1L247.6 149.2L247.6 147.4L247.6 146.7L247.7 147.2L247.7 149.0L247.7 152.0L247.7 156.2L247.8 161.7L247.8 168.3L247.8 176.0L247.8 184.8L247.9 194.6L247.9 205.2L247.9 216.5L247.9 228.4L248.0 240.7L248.0 253.4L248.0 266.1L248.0 278.7L248.1 291.1L248.1 302.9L248.1 314.1L248.1 324.5L248.2 333.8L248.2 341.8L248.2 348.5L248.2 353.7L248.3 357.3L248.3 359.1L248.3 359.1L248.3 357.2L248.4 353.5L248.4 348.0L248.4 340.7L248.4 331.8L248.5 321.3L248.5 309.4L248.5 296.4L248.5 282.5L248.6 267.9L248.6 252.9L248.6 237.8L248.6 222.9L248.7 208.5L248.7 195.0L248.7 182.6L248.7 171.7L248.8 162.5L248.8 155.2L248.8 150.1L248.8 147.2L248.9 146.8L248.9 148.9L248.9 153.4L248.9 160.4L249.0 169.6L249.0 180.9L249.0 194.1L249.0 208.8L249.1 224.7L249.1 241.5L249.1 258.6L249.1 275.7L249.2 292.3L249.2 307.9L249.2 322.1L249.2 334.5L249.3 344.8L249.3 352.4L249.3 357.3L249.3 359.3L249.4 358.1L249.4 353.9L249.4 346.6L249.4 336.5L249.5 323.8L249.5 308.9L249.5 292.1L249.5 274.0L249.6 255.2L249.6 236.2L249.6 217.6L249.6 200.1L249.7 184.3L249.7 170.7L249.7 159.7L249.7 151.9L249.8 147.6L249.8 146.9L249.8 149.9L249.8 156.6L249.8 166.7L249.9 180.1L249.9 196.2L249.9 214.4L249.9 234.2L250.0 254.8L250.0 275.4L250.0 295.2L250.0 313.5L250.1 329.6L250.1 342.7L250.1 352.2L250.1 357.8L250.2 359.2L250.2 356.3L250.2 349.0L250.2 337.7L250.3 322.8L250.3 304.9L250.3 284.6L250.3 262.9L250.4 240.7L250.4 218.9L250.4 198.5L250.4 180.5L250.5 165.7L250.5 154.8L250.5 148.4L250.5 146.8L250.6 150.2L250.6 158.5L250.6 171.3L250.6 188.1L250.7 208.1L250.7 230.4L250.7 254.0L250.7 277.5L250.8 300.0L250.8 320.1L250.8 336.9L250.8 349.5L250.9 357.1L250.9 359.3L250.9 355.9L250.9 347.0L251.0 333.0L251.0 314.6L251.0 292.9L251.0 268.8L251.1 243.8L251.1 219.2L251.1 196.4L251.1 176.7L251.2 161.3L251.2 151.1L251.2 146.8L251.2 148.7L251.3 156.8L251.3 170.6L251.3 189.4L251.3 212.1L251.4 237.3L251.4 263.7L251.4 289.4L251.4 313.0L251.5 332.9L251.5 347.9L251.5 356.9L251.5 359.2L251.6 354.7L251.6 343.6L251.6 326.5L251.6 304.5L251.7 279.0L251.7 251.6L251.7 224.3L251.7 198.8L251.8 176.9L251.8 160.2L251.8 149.9L251.8 146.7L251.9 151.0L251.9 162.6L251.9 180.6L251.9 203.9L252.0 230.9L252.0 259.5L252.0 287.8L252.0 313.6L252.1 334.9L252.1 350.2L252.1 358.3L252.1 358.3L252.1 350.3L252.2 334.8L252.2 312.9L252.2 286.2L252.2 256.9L252.3 227.1L252.3 199.3L252.3 175.8L252.3 158.3L252.4 148.5L252.4 147.2L252.4 154.6L252.4 170.2L252.5 192.7L252.5 220.4L252.5 250.9L252.5 281.6L252.6 310.0L252.6 333.6L252.6 350.3L252.6 358.6L252.7 357.6L252.7 347.4L252.7 328.7L252.7 303.3L252.8 273.2L252.8 241.3L252.8 210.3L252.8 183.1L252.9 162.3L252.9 149.8L252.9 146.9L252.9 154.0L253.0 170.5L253.0 194.8L253.0 224.8L253.0 257.6L253.1 290.0L253.1 318.9L253.1 341.5L253.1 355.4L253.2 359.2L253.2 352.4L253.2 335.7L253.2 310.5L253.3 279.4L253.3 245.6L253.3 212.4L253.3 183.3L253.4 161.4L253.4 149.0L253.4 147.4L253.4 157.1L253.5 176.9L253.5 204.9L253.5 238.2L253.5 273.2L253.6 306.0L253.6 333.2L253.6 351.6L253.6 359.2L253.7 355.0L253.7 339.3L253.7 313.9L253.7 281.6L253.8 245.9L253.8 211.0L253.8 180.7L253.8 158.8L253.9 147.7L253.9 148.9L253.9 162.4L253.9 186.5L254.0 218.7L254.0 255.0L254.0 291.2L254.0 322.8L254.1 346.1L254.1 358.1L254.1 357.2L254.1 343.5L254.2 318.5L254.2 285.3L254.2 248.0L254.2 211.2L254.3 179.6L254.3 157.3L254.3 147.1L254.3 150.6L254.3 167.3L254.4 195.1L254.4 230.6L254.4 269.1L254.4 305.6L254.5 335.2L254.5 353.9L254.5 359.2L254.5 350.1L254.6 327.9L254.6 295.5L254.6 257.1L254.6 218.1L254.7 183.9L254.7 159.1L254.7 147.4L254.7 150.4L254.8 167.9L254.8 197.5L254.8 235.0L254.8 275.2L254.9 312.3L254.9 341.0L254.9 356.9L254.9 357.7L255.0 343.2L255.0 315.4L255.0 278.3L255.0 237.4L255.1 198.6L255.1 168.0L255.1 150.1L255.1 147.7L255.2 161.4L255.2 189.1L255.2 226.7L255.2 268.4L255.3 307.8L255.3 338.8L255.3 356.4L255.3 357.8L255.4 342.7L255.4 313.2L255.4 274.1L255.4 231.6L255.5 192.3L255.5 162.8L255.5 147.9L255.5 150.1L255.6 169.2L255.6 202.1L255.6 243.5L255.6 286.6L255.7 324.1L255.7 349.8L255.7 359.3L255.7 350.8L255.8 325.6L255.8 288.0L255.8 244.3L255.8 202.0L255.9 168.5L255.9 149.5L255.9 148.6L255.9 166.0L256.0 198.8L256.0 241.2L256.0 285.8L256.0 324.6L256.1 350.7L256.1 359.3L256.1 348.6L256.1 320.6L256.2 280.2L256.2 234.7L256.2 192.5L256.2 161.4L256.3 147.2L256.3 152.7L256.3 177.0L256.3 215.6L256.4 261.4L256.4 305.6L256.4 340.0L256.4 357.7L256.5 355.4L256.5 333.4L256.5 295.7L256.5 249.7L256.6 204.2L256.6 168.2L256.6 148.8L256.6 150.0L256.6 171.6L256.7 209.5L256.7 256.1L256.7 302.3L256.7 338.5L256.8 357.6L256.8 355.3L256.8 332.2L256.8 292.8L256.9 245.1L256.9 199.0L256.9 164.0L256.9 147.4L257.0 153.0L257.0 179.5L257.0 221.6L257.0 270.5L257.1 315.7L257.1 347.6L257.1 253.0M306.0 253.0L306.0 253.0L306.0 252.9L306.0 252.9L306.1 252.9L306.1 253.0L306.1 253.2L306.1 253.4L306.2 253.7L306.2 253.8L306.2 253.9L306.2 253.8L306.3 253.6L306.3 253.2L306.3 252.8L306.3 252.3L306.4 251.8L306.4 251.4L306.4 251.2L306.4 251.2L306.5 251.5L306.5 252.0L306.5 252.7L306.5 253.5L306.6 254.4L306.6 255.1L306.6 255.6L306.6 255.8L306.7 255.6L306.7 255.1L306.7 254.3L306.7 253.3L306.8 252.1L306.8 251.0L306.8 250.1L306.8 249.5L306.9 249.3L306.9 249.5L306.9 250.2L306.9 251.3L307.0 252.6L307.0 254.1L307.0 255.5L307.0 256.6L307.1 257.4L307.1 257.7L307.1 257.4L307.1 256.5L307.2 255.3L307.2 253.6L307.2 251.9L307.2 250.2L307.3 248.7L307.3 247.8L307.3 247.4L307.3 247.6L307.4 248.5L307.4 249.9L307.4 251.8L307.4 253.8L307.5 255.9L307.5 257.6L307.5 258.9L307.5 259.6L307.6 259.5L307.6 258.7L307.6 257.2L307.6 255.2L307.7 252.9L307.7 250.5L307.7 248.4L307.7 246.7L307.8 245.6L307.8 245.4L307.8 246.0L307.8 247.3L307.9 249.4L307.9 251.9L307.9 254.5L307.9 257.1L308.0 259.3L308.0 260.8L308.0 261.6L308.0 261.4L308.1 260.4L308.1 258.5L308.1 256.0L308.1 253.1L308.1 250.2L308.2 247.4L308.2 245.3L308.2 243.8L308.2 243.3L308.3 243.8L308.3 245.3L308.3 247.6L308.3 250.5L308.4 253.7L308.4 256.9L308.4 259.8L308.4 262.0L308.5 263.4L308.5 263.7L308.5 262.9L308.5 261.2L308.6 258.6L308.6 255.3L308.6 251.8L308.6 248.4L308.7 245.3L308.7 243.0L308.7 241.6L308.7 241.3L308.8 242.1L308.8 244.0L308.8 246.9L308.8 250.3L308.9 254.1L308.9 257.9L308.9 261.2L308.9 263.8L309.0 265.4L309.0 265.8L309.0 265.1L309.0 263.1L309.1 260.2L309.1 256.6L309.1 252.6L309.1 248.5L309.2 244.9L309.2 241.9L309.2 239.9L309.2 239.1L309.3 239.5L309.3 241.2L309.3 244.1L309.3 247.7L309.4 251.9L309.4 256.3L309.4 260.4L309.4 263.9L309.5 266.4L309.5 267.8L309.5 267.9L309.5 266.7L309.6 264.2L309.6 260.7L309.6 256.5L309.6 252.0L309.7 247.4L309.7 243.3L309.7 240.0L309.7 237.8L309.8 236.8L309.8 237.3L309.8 239.1L309.8 242.1L309.9 246.1L309.9 250.7L309.9 255.5L309.9 260.2L310.0 264.4L310.0 267.6L310.0 269.6L310.0 270.3L310.1 269.6L310.1 267.4L310.1 264.1L310.1 259.8L310.1 254.9L310.2 249.8L310.2 244.9L310.2 240.6L310.2 237.3L310.3 235.2L310.3 234.5L310.3 235.3L310.3 237.5L310.4 241.0L310.4 245.4L310.4 250.5L310.4 255.9L310.5 261.0L310.5 265.6L310.5 269.3L310.5 271.7L310.6 272.7L310.6 272.1L310.6 270.1L310.6 266.8L310.7 262.4L310.7 257.2L310.7 251.7L310.7 246.2L310.8 241.2L310.8 237.0L310.8 234.0L310.8 232.4L310.9 232.3L310.9 233.7L310.9 236.6L310.9 240.7L311.0 245.7L311.0 251.3L311.0 257.1L311.0 262.7L311.1 267.5L311.1 271.4L311.1 274.0L311.1 275.1L311.2 274.6L311.2 272.6L311.2 269.2L311.2 264.6L311.3 259.2L311.3 253.3L311.3 247.3L311.3 241.7L311.4 236.8L311.4 233.0L311.4 230.5L311.4 229.6L311.5 230.3L311.5 232.5L311.5 236.1L311.5 240.9L311.6 246.5L311.6 252.6L311.6 258.8L311.6 264.6L311.7 269.7L311.7 273.8L311.7 276.5L311.7 277.6L311.8 277.2L311.8 275.2L311.8 271.7L311.8 267.0L311.9 261.4L311.9 255.2L311.9 248.8L311.9 242.6L312.0 237.1L312.0 232.5L312.0 229.2L312.0 227.3L312.1 227.1L312.1 228.5L312.1 231.3L312.1 235.6L312.2 240.9L312.2 247.1L312.2 253.6L312.2 260.1L312.2 266.2L312.3 271.6L312.3 275.9L312.3 278.8L312.3 280.2L312.4 280.0L312.4 278.2L312.4 274.9L312.4 270.3L312.5 264.7L312.5 258.3L312.5 251.6L312.5 244.9L312.6 238.7L312.6 233.2L312.6 228.9L312.6 225.9L312.7 224.4L312.7 224.5L312.7 226.3L312.7 229.5L312.8 234.1L312.8 239.7L312.8 246.1L312.8 253.0L312.9 259.8L312.9 266.4L312.9 272.2L312.9 277.0L313.0 280.6L313.0 282.6L313.0 283.1L313.0 282.0L313.1 279.4L313.1 275.3L313.1 270.0L313.1 263.8L313.2 257.0L313.2 250.0L313.2 243.1L313.2 236.7L313.3 231.0L313.3 226.5L313.3 223.3L313.3 221.6L313.4 221.5L313.4 223.0L313.4 226.0L313.4 230.3L313.5 235.8L313.5 242.2L313.5 249.1L313.5 256.3L313.6 263.3L313.6 269.9L313.6 275.7L313.6 280.4L313.7 283.8L313.7 285.7L313.7 286.1L313.7 284.9L313.8 282.2L313.8 278.1L313.8 272.8L313.8 266.6L313.9 259.7L313.9 252.5L313.9 245.3L313.9 238.3L314.0 232.1L314.0 226.7L314.0 222.6L314.0 219.7L314.1 218.4L314.1 218.6L314.1 220.4L314.1 223.5L314.2 228.0L314.2 233.7L314.2 240.1L314.2 247.2L314.2 254.6L314.3 261.9L314.3 268.8L314.3 275.1L314.3 280.5L314.4 284.7L314.4 287.6L314.4 289.1L314.4 289.1L314.5 287.6L314.5 284.6L314.5 280.3L314.5 274.9L314.6 268.6L314.6 261.6L314.6 254.2L314.6 246.8L314.7 239.6L314.7 232.9L314.7 227.0L314.7 222.1L314.8 218.4L314.8 216.0L314.8 215.1L314.8 215.6L314.9 217.6L314.9 220.9L314.9 225.5L314.9 231.1L315.0 237.6L315.0 244.7L315.0 252.1L315.0 259.6L315.1 266.8L315.1 273.6L315.1 279.6L315.1 284.7L315.2 288.6L315.2 291.3L315.2 292.6L315.2 292.4L315.3 290.9L315.3 288.0L315.3 283.9L315.3 278.7L315.4 272.5L315.4 265.7L315.4 258.4L315.4 250.9L315.5 243.5L315.5 236.3L315.5 229.7L315.5 223.9L315.6 219.0L315.6 215.3L315.6 212.8L315.6 211.6L315.7 211.8L315.7 213.3L315.7 216.1L315.7 220.1L315.8 225.2L315.8 231.2L315.8 237.9L315.8 245.1L315.9 252.6L315.9 260.1L315.9 267.4L315.9 274.2L316.0 280.4L316.0 285.8L316.0 290.2L316.0 293.5L316.1 295.6L316.1 296.4L316.1 295.9L316.1 294.1L316.2 291.1L316.2 287.0L316.2 281.9L316.2 275.9L316.3 269.2L316.3 262.1L316.3 254.7L316.3 247.2L316.3 239.9L316.4 233.0L316.4 226.5L316.4 220.9L316.4 216.0L316.5 212.2L316.5 209.5L316.5 208.0L316.5 207.7L316.6 208.6L316.6 210.7L316.6 213.9L316.6 218.1L316.7 223.3L316.7 229.3L316.7 235.9L316.7 242.9L316.8 250.2L316.8 257.6L316.8 264.9L316.8 271.9L316.9 278.4L316.9 284.4L316.9 289.5L316.9 293.8L317.0 297.0L317.0 299.2L317.0 300.3L317.0 300.3L317.1 299.1L317.1 296.8L317.1 293.5L317.1 289.3L317.2 284.2L317.2 278.3L317.2 271.9L317.2 265.0L317.3 257.9L317.3 250.6L317.3 243.4L317.3 236.4L317.4 229.7L317.4 223.5L317.4 218.0L317.4 213.3L317.5 209.3L317.5 206.4L317.5 204.4L317.5 203.4L317.6 203.5L317.6 204.6L317.6 206.7L317.6 209.8L317.7 213.8L317.7 218.5L317.7 224.0L317.7 230.1L317.8 236.6L317.8 243.5L317.8 250.5L317.8 257.6L317.9 264.6L317.9 271.4L317.9 277.9L317.9 283.9L318.0 289.3L318.0 294.0L318.0 297.9L318.0 301.1L318.1 303.3L318.1 304.7L318.1 305.1L318.1 304.5L318.2 303.1L318.2 300.7L318.2 297.5L318.2 293.5L318.3 288.9L318.3 283.6L318.3 277.7L318.3 271.5L318.4 264.9L318.4 258.1L318.4 251.3L318.4 244.4L318.4 237.7L318.5 231.3L318.5 225.2L318.5 219.5L318.5 214.4L318.6 209.9L318.6 206.1L318.6 203.0L318.6 200.6L318.7 199.1L318.7 198.4L318.7 198.5L318.7 199.4L318.8 201.2L318.8 203.7L318.8 206.9L318.8 210.8L318.9 215.3L318.9 220.3L318.9 225.8L318.9 231.7L319.0 237.9L319.0 244.2L319.0 250.7L319.0 257.3L319.1 263.8L319.1 270.1L319.1 276.2L319.1 282.0L319.2 287.4L319.2 292.4L319.2 296.8L319.2 300.7L319.3 304.0L319.3 306.6L319.3 308.6L319.3 309.9L319.4 310.5L319.4 310.4L319.4 309.6L319.4 308.1L319.5 306.0L319.5 303.2L319.5 299.9L319.5 296.0L319.6 291.7L319.6 286.9L319.6 281.7L319.6 276.2L319.7 270.5L319.7 264.6L319.7 258.6L319.7 252.5L319.8 246.4L319.8 240.4L319.8 234.5L319.8 228.8L319.9 223.4L319.9 218.3L319.9 213.5L319.9 209.2L320.0 205.3L320.0 201.8L320.0 198.9L320.0 196.4L320.1 194.5L320.1 193.2L320.1 192.4L320.1 192.2L320.2 192.6L320.2 193.5L320.2 194.9L320.2 196.8L320.3 199.2L320.3 202.1L320.3 205.4L320.3 209.1L320.4 213.2L320.4 217.6L320.4 222.3L320.4 227.3L320.4 232.4L320.5 237.7L320.5 243.1L320.5 248.6L320.5 254.0L320.6 259.5L320.6 264.9L320.6 270.2L320.6 275.4L320.7 280.4L320.7 285.2L320.7 289.7L320.7 294.0L320.8 298.0L320.8 301.7L320.8 305.0L320.8 307.9L320.9 310.5L320.9 312.7L320.9 314.5L320.9 315.9L321.0 316.9L321.0 317.4L321.0 317.6L321.0 317.4L321.1 316.8L321.1 315.8L321.1 314.4L321.1 312.7L321.2 310.6L321.2 308.2L321.2 305.5L321.2 302.5L321.3 299.3L321.3 295.8L321.3 292.1L321.3 288.1L321.4 284.1L321.4 279.8L321.4 275.5L321.4 271.0L321.5 266.5L321.5 261.9L321.5 257.3L321.5 252.7L321.6 248.1L321.6 243.6L321.6 239.1L321.6 234.7L321.7 230.4L321.7 226.2L321.7 222.1L321.7 218.2L321.8 214.5L321.8 210.9L321.8 207.5L321.8 204.3L321.9 201.3L321.9 198.6L321.9 196.0L321.9 193.7L322.0 191.6L322.0 189.8L322.0 188.2L322.0 186.8L322.1 185.7L322.1 184.8L322.1 184.1L322.1 183.7L322.2 183.5L322.2 183.5L322.2 183.8L322.2 184.2L322.3 184.9L322.3 185.8L322.3 186.9L322.3 188.1L322.4 189.5L322.4 191.2L322.4 192.9L322.4 194.8L322.5 196.9L322.5 199.1L322.5 201.4L322.5 203.9L322.5 206.4L322.6 209.1L322.6 211.8L322.6 214.6L322.6 217.5L322.7 220.4L322.7 223.4L322.7 226.4L322.7 229.5L322.8 232.6L322.8 235.7L322.8 238.8L322.8 242.0L322.9 245.1L322.9 248.2L322.9 251.3L322.9 254.4L323.0 257.4L323.0 260.4L323.0 263.4L323.0 266.3L323.1 269.2L323.1 272.0L323.1 274.8L323.1 277.5L323.2 280.2L323.2 282.8L323.2 285.3L323.2 287.8L323.3 290.2L323.3 292.5L323.3 294.7L323.3 296.9L323.4 299.0L323.4 301.0L323.4 303.0L323.4 304.9L323.5 306.7L323.5 308.4L323.5 310.0L323.5 311.6L323.6 313.1L323.6 314.6L323.6 315.9L323.6 317.2L323.7 318.4L323.7 319.6L323.7 320.7L323.7 321.7L323.8 322.6L323.8 323.5L323.8 324.4L323.8 325.2L323.9 325.9L323.9 326.6L323.9 327.2L323.9 327.7L324.0 328.3L324.0 328.7L324.0 329.2L324.0 329.6L324.1 329.9L324.1 330.2L324.1 330.5L324.1 330.8L324.2 331.0L324.2 331.2L324.2 331.3L324.2 331.4L324.3 331.6L324.3 331.6L324.3 331.7L324.3 331.7L324.4 331.8L324.4 331.8L324.4 331.8L324.4 331.8L324.5 331.7L324.5 331.7L324.5 331.7L324.5 331.6L324.5 331.6L324.6 331.5L324.6 331.4L324.6 331.4L324.6 331.3L324.7 331.3L324.7 331.2L324.7 331.1L324.7 331.1L324.8 331.0L324.8 331.0L324.8 331.0L324.8 330.9L324.9 330.9L324.9 330.9L324.9 330.9L324.9 330.9L325.0 330.9L325.0 331.0L325.0 331.0L325.0 331.0L325.1 331.1L325.1 331.2L325.1 331.3L325.1 331.4L325.2 331.5L325.2 331.6L325.2 331.7L325.2 331.9L325.3 332.0L325.3 332.2L325.3 332.3L325.3 332.5L325.4 332.7L325.4 332.9L325.4 333.2L325.4 333.4L325.5 333.6L325.5 333.9L325.5 334.1L325.5 334.4L325.6 334.7L325.6 334.9L325.6 335.2L325.6 335.5L325.7 335.8L325.7 336.0L325.7 336.3L325.7 336.6L325.8 336.9L325.8 337.1L325.8 337.4L325.8 337.6L325.9 337.9L325.9 338.1L325.9 338.3L325.9 338.6L326.0 338.7L326.0 338.9L326.0 339.1L326.0 339.2L326.1 339.3L326.1 339.4L326.1 339.4L326.1 339.5L326.2 339.4L326.2 339.4L326.2 339.3L326.2 339.2L326.3 339.0L326.3 338.8L326.3 338.5L326.3 338.2L326.4 337.8L326.4 337.4L326.4 336.9L326.4 336.4L326.5 335.7L326.5 335.1L326.5 334.3L326.5 333.5L326.6 332.6L326.6 331.6L326.6 330.5L326.6 329.4L326.6 328.2L326.7 326.9L326.7 325.4L326.7 323.9L326.7 322.4L326.8 320.7L326.8 318.9L326.8 317.0L326.8 315.0L326.9 312.9L326.9 310.7L326.9 308.5L326.9 306.1L327.0 303.6L327.0 301.0L327.0 298.3L327.0 295.5L327.1 292.6L327.1 289.6L327.1 286.5L327.1 283.3L327.2 280.0L327.2 276.6L327.2 273.1L327.2 269.6L327.3 266.0L327.3 262.3L327.3 258.5L327.3 254.7L327.4 250.8L327.4 246.9L327.4 242.9L327.4 238.9L327.5 234.9L327.5 230.9L327.5 226.8L327.5 222.8L327.6 218.8L327.6 214.7L327.6 210.8L327.6 206.8L327.7 203.0L327.7 199.2L327.7 195.5L327.7 191.8L327.8 188.3L327.8 184.9L327.8 181.7L327.8 178.6L327.9 175.6L327.9 172.8L327.9 170.3L327.9 167.9L328.0 165.7L328.0 163.8L328.0 162.1L328.0 160.7L328.1 159.5L328.1 158.6L328.1 158.0L328.1 157.8L328.2 157.8L328.2 158.1L328.2 158.8L328.2 159.8L328.3 161.1L328.3 162.8L328.3 164.8L328.3 167.1L328.4 169.8L328.4 172.9L328.4 176.2L328.4 179.9L328.5 184.0L328.5 188.3L328.5 193.0L328.5 197.9L328.6 203.2L328.6 208.6L328.6 214.4L328.6 220.3L328.6 226.5L328.7 232.8L328.7 239.3L328.7 245.9L328.7 252.6L328.8 259.4L328.8 266.2L328.8 272.9L328.8 279.7L328.9 286.4L328.9 292.9L328.9 299.3L328.9 305.6L329.0 311.6L329.0 317.3L329.0 322.8L329.0 327.9L329.1 332.6L329.1 336.9L329.1 340.8L329.1 344.2L329.2 347.1L329.2 349.5L329.2 351.3L329.2 352.5L329.3 353.1L329.3 353.1L329.3 352.5L329.3 351.2L329.4 349.3L329.4 346.7L329.4 343.5L329.4 339.7L329.5 335.3L329.5 330.2L329.5 324.6L329.5 318.5L329.6 311.8L329.6 304.7L329.6 297.1L329.6 289.2L329.7 280.9L329.7 272.4L329.7 263.6L329.7 254.7L329.8 245.7L329.8 236.7L329.8 227.8L329.8 219.0L329.9 210.4L329.9 202.1L329.9 194.2L329.9 186.7L330.0 179.7L330.0 173.2L330.0 167.4L330.0 162.3L330.1 158.0L330.1 154.4L330.1 151.7L330.1 150.0L330.2 149.1L330.2 149.2L330.2 150.2L330.2 152.2L330.3 155.2L330.3 159.1L330.3 164.0L330.3 169.8L330.4 176.4L330.4 183.8L330.4 192.0L330.4 200.8L330.5 210.3L330.5 220.2L330.5 230.5L330.5 241.2L330.6 252.0L330.6 263.0L330.6 273.8L330.6 284.6L330.7 295.0L330.7 305.1L330.7 314.6L330.7 323.5L330.7 331.5L330.8 338.8L330.8 345.0L330.8 350.2L330.8 354.3L330.9 357.2L330.9 358.9L330.9 359.3L330.9 358.4L331.0 356.2L331.0 352.7L331.0 348.0L331.0 342.0L331.1 334.9L331.1 326.7L331.1 317.5L331.1 307.5L331.2 296.7L331.2 285.3L331.2 273.3L331.2 261.1L331.3 248.7L331.3 236.3L331.3 224.1L331.3 212.3L331.4 201.0L331.4 190.3L331.4 180.5L331.4 171.8L331.5 164.1L331.5 157.7L331.5 152.7L331.5 149.2L331.6 147.2L331.6 146.7L331.6 147.9L331.6 150.7L331.7 155.1L331.7 161.0L331.7 168.3L331.7 177.1L331.8 187.0L331.8 198.1L331.8 210.0L331.8 222.7L331.9 236.0L331.9 249.6L331.9 263.2L331.9 276.8L332.0 290.0L332.0 302.6L332.0 314.5L332.0 325.3L332.1 334.9L332.1 343.1L332.1 349.8L332.1 354.8L332.2 357.9L332.2 359.3L332.2 358.7L332.2 356.2L332.3 351.7L332.3 345.5L332.3 337.5L332.3 327.9L332.4 316.9L332.4 304.6L332.4 291.3L332.4 277.2L332.5 262.6L332.5 247.8L332.5 233.0L332.5 218.5L332.6 204.7L332.6 191.9L332.6 180.2L332.6 169.9L332.7 161.3L332.7 154.6L332.7 149.8L332.7 147.2L332.8 146.8L332.8 148.7L332.8 152.7L332.8 158.9L332.8 167.2L332.9 177.3L332.9 189.1L332.9 202.3L332.9 216.7L333.0 232.0L333.0 247.8L333.0 263.7L333.0 279.4L333.1 294.6L333.1 308.9L333.1 322.0L333.1 333.4L333.2 343.1L333.2 350.6L333.2 355.9L333.2 358.8L333.3 359.1L333.3 356.9L333.3 352.2L333.3 345.0L333.4 335.6L333.4 324.1L333.4 310.8L333.4 296.1L333.5 280.2L333.5 263.6L333.5 246.6L333.5 229.8L333.6 213.5L333.6 198.2L333.6 184.3L333.6 172.1L333.7 162.0L333.7 154.3L333.7 149.2L333.7 146.9L333.8 147.3L333.8 150.7L333.8 156.8L333.8 165.6L333.9 176.8L333.9 190.2L333.9 205.3L333.9 221.8L334.0 239.2L334.0 257.1L334.0 274.9L334.0 292.1L334.1 308.3L334.1 322.9L334.1 335.5L334.1 345.7L334.2 353.2L334.2 357.8L334.2 359.3L334.2 357.6L334.3 352.8L334.3 344.9L334.3 334.2L334.3 321.1L334.4 305.8L334.4 288.8L334.4 270.7L334.4 251.9L334.5 233.2L334.5 215.0L334.5 198.0L334.5 182.7L334.6 169.6L334.6 159.2L334.6 151.7L334.6 147.6L334.7 146.8L334.7 149.6L334.7 155.8L334.7 165.2L334.8 177.6L334.8 192.6L334.8 209.6L334.8 228.1L334.8 247.6L334.9 267.2L334.9 286.4L334.9 304.6L334.9 320.9L335.0 335.0L335.0 346.2L335.0 354.1L335.0 358.5L335.1 359.1L335.1 355.9L335.1 349.0L335.1 338.6L335.2 325.1L335.2 308.9L335.2 290.6L335.2 270.9L335.3 250.5L335.3 230.1L335.3 210.5L335.3 192.5L335.4 176.7L335.4 163.8L335.4 154.3L335.4 148.5L335.5 146.7L335.5 149.1L335.5 155.4L335.5 165.7L335.6 179.3L335.6 196.0L335.6 214.9L335.6 235.3L335.7 256.6L335.7 277.7L335.7 297.9L335.7 316.3L335.8 332.2L335.8 344.8L335.8 353.8L335.8 358.5L335.9 358.9L335.9 354.9L335.9 346.6L335.9 334.3L336.0 318.6L336.0 300.0L336.0 279.4L336.0 257.6L336.1 235.6L336.1 214.3L336.1 194.6L336.1 177.4L336.2 163.5L336.2 153.5L336.2 147.9L336.2 146.9L336.3 150.7L336.3 159.1L336.3 171.7L336.3 188.0L336.4 207.3L336.4 228.8L336.4 251.4L336.4 274.1L336.5 295.9L336.5 315.8L336.5 332.7L336.5 346.0L336.6 354.9L336.6 359.0L336.6 358.1L336.6 352.2L336.7 341.5L336.7 326.6L336.7 308.0L336.7 286.8L336.8 263.8L336.8 240.3L336.8 217.4L336.8 196.1L336.9 177.7L336.9 162.9L336.9 152.6L336.9 147.4L336.9 147.4L337.0 152.8L337.0 163.2L337.0 178.3L337.0 197.3L337.1 219.1L337.1 242.7L337.1 266.9L337.1 290.5L337.2 312.1L337.2 330.7L337.2 345.2L337.2 354.8L337.3 359.1L337.3 357.7L337.3 350.7L337.3 338.5L337.4 321.6L337.4 300.9L337.4 277.6L337.4 252.9L337.5 228.2L337.5 204.7L337.5 183.9L337.5 166.9L337.6 154.7L337.6 147.9L337.6 147.1L337.6 152.2L337.7 163.0L337.7 179.0L337.7 199.2L337.7 222.5L337.8 247.7L337.8 273.2L337.8 297.6L337.8 319.4L337.9 337.4L337.9 350.5L337.9 357.8L337.9 359.0L338.0 353.9L338.0 342.8L338.0 326.2L338.0 305.3L338.1 281.2L338.1 255.3L338.1 229.2L338.1 204.5L338.2 182.8L338.2 165.3L338.2 153.2L338.2 147.3L338.3 147.9L338.3 155.0L338.3 168.3L338.3 187.0L338.4 209.8L338.4 235.4L338.4 262.2L338.4 288.5L338.5 312.5L338.5 332.7L338.5 347.9L338.5 356.9L338.6 359.2L338.6 354.6L338.6 343.3L338.6 326.1L338.7 304.0L338.7 278.5L338.7 251.3L338.7 224.1L338.8 198.9L338.8 177.2L338.8 160.6L338.8 150.1L338.9 146.7L338.9 150.5L338.9 161.3L338.9 178.4L338.9 200.6L339.0 226.6L339.0 254.4L339.0 282.1L339.0 307.9L339.1 329.8L339.1 346.5L339.1 356.5L339.1 359.2L339.2 354.4L339.2 342.4L339.2 323.9L339.2 300.3L339.3 273.3L339.3 244.8L339.3 216.8L339.3 191.4L339.4 170.4L339.4 155.5L339.4 147.7L339.4 147.7L339.5 155.4L339.5 170.5L339.5 191.7L339.5 217.5L339.6 246.1L339.6 275.2L339.6 302.7L339.6 326.4L339.7 344.6L339.7 355.9L339.7 359.3L339.7 354.5L339.8 341.9L339.8 322.4L339.8 297.4L339.8 269.0L339.9 239.3L339.9 210.6L339.9 185.2L339.9 165.1L340.0 151.9L340.0 146.8L340.0 150.1L340.0 161.6L340.1 180.5L340.1 205.3L340.1 234.0L340.1 264.2L340.2 293.6L340.2 319.7L340.2 340.4L340.2 354.0L340.3 359.3L340.3 355.7L340.3 343.7L340.3 324.1L340.4 298.5L340.4 269.1L340.4 238.3L340.4 208.6L340.5 182.7L340.5 162.7L340.5 150.4L340.5 146.7L340.6 152.2L340.6 166.4L340.6 188.0L340.6 215.3L340.7 245.9L340.7 277.2L340.7 306.4L340.7 331.0L340.8 348.7L340.8 358.1L340.8 358.2L340.8 348.9L340.9 331.1L340.9 306.3L340.9 276.7L340.9 245.0L341.0 213.9L341.0 186.3L341.0 164.7L341.0 151.0L341.0 146.7L341.1 152.1L341.1 166.7L341.1 189.4L341.1 217.9L341.2 249.7L341.2 281.9L341.2 311.4L341.2 335.5L341.3 351.9L341.3 359.1L341.3 356.2L341.3 343.6L341.4 322.4L341.4 294.5L341.4 262.6L341.4 229.8L341.5 199.2L341.5 173.6L341.5 155.8L341.5 147.3L341.6 149.0L341.6 160.9L341.6 181.9L341.6 209.8L341.7 242.0L341.7 275.4L341.7 306.6L341.7 332.5L341.8 350.5L341.8 358.8L341.8 356.6L341.8 343.9L341.9 322.1L341.9 293.3L341.9 260.3L341.9 226.6L342.0 195.5L342.0 170.2L342.0 153.4L342.0 146.8L342.1 151.1L342.1 166.0L342.1 189.9L342.1 220.4L342.2 254.4L342.2 288.2L342.2 318.4L342.2 341.8L342.3 355.8L342.3 359.0L342.3 351.0L342.3 332.5L342.4 305.5L342.4 272.8L342.4 238.0L342.4 204.7L342.5 176.6L342.5 156.8L342.5 147.3L342.5 149.3L342.6 162.7L342.6 185.9L342.6 216.6L342.6 251.3L342.7 286.2L342.7 317.5L342.7 341.7L342.7 356.0L342.8 358.9L342.8 349.9L342.8 330.1L342.8 301.5L342.9 267.4L342.9 231.7L342.9 198.3L342.9 171.1L343.0 153.2L343.0 146.7L343.0 152.4L343.0 169.7L343.1 196.6L343.1 169.7L343.1 152.4L343.1 146.7L343.1 153.2L343.2 171.1L343.2 198.3L343.2 231.7L343.2 267.4L343.3 301.5L343.3 330.1L343.3 349.9L343.3 358.9L343.4 356.0L343.4 341.7L343.4 317.5L343.4 286.2L343.5 251.3L343.5 216.6L343.5 185.9L343.5 162.7L343.6 149.3L343.6 147.3L343.6 156.8L343.6 176.6L343.7 204.7L343.7 238.0L343.7 272.8L343.7 305.5L343.8 332.5L343.8 351.0L343.8 359.0L343.8 355.8L343.9 341.8L343.9 318.4L343.9 288.2L343.9 254.4L344.0 220.4L344.0 189.9L344.0 166.0L344.0 151.1L344.1 146.8L344.1 153.4L344.1 170.2L344.1 195.5L344.2 226.6L344.2 260.3L344.2 293.3L344.2 322.1L344.3 343.9L344.3 356.6L344.3 358.8L344.3 350.5L344.4 332.5L344.4 306.6L344.4 275.4L344.4 242.0L344.5 209.8L344.5 181.9L344.5 160.9L344.5 149.0L344.6 147.3L344.6 155.8L344.6 173.6L344.6 199.2L344.7 229.8L344.7 262.6L344.7 294.5L344.7 322.4L344.8 343.6L344.8 356.2L344.8 359.1L344.8 351.9L344.9 335.5L344.9 311.4L344.9 281.9L344.9 249.7L345.0 217.9L345.0 189.4L345.0 166.7L345.0 152.1L345.1 146.7L345.1 151.0L345.1 164.7L345.1 186.3L345.1 213.9L345.2 245.0L345.2 276.7L345.2 306.3L345.2 331.1L345.3 348.9L345.3 358.2L345.3 358.1L345.3 348.7L345.4 331.0L345.4 306.4L345.4 277.2L345.4 245.9L345.5 215.3L345.5 188.0L345.5 166.4L345.5 152.2L345.6 146.7L345.6 150.4L345.6 162.7L345.6 182.7L345.7 208.6L345.7 238.3L345.7 269.1L345.7 298.5L345.8 324.1L345.8 343.7L345.8 355.7L345.8 359.3L345.9 354.0L345.9 340.4L345.9 319.7L345.9 293.6L346.0 264.2L346.0 234.0L346.0 205.3L346.0 180.5L346.1 161.6L346.1 150.1L346.1 146.8L346.1 151.9L346.2 165.1L346.2 185.2L346.2 210.6L346.2 239.3L346.3 269.0L346.3 297.4L346.3 322.4L346.3 341.9L346.4 354.5L346.4 359.3L346.4 355.9L346.4 344.6L346.5 326.4L346.5 302.7L346.5 275.2L346.5 246.1L346.6 217.5L346.6 191.7L346.6 170.5L346.6 155.4L346.7 147.7L346.7 147.7L346.7 155.5L346.7 170.4L346.8 191.4L346.8 216.8L346.8 244.8L346.8 273.3L346.9 300.3L346.9 323.9L346.9 342.4L346.9 354.4L347.0 359.2L347.0 356.5L347.0 346.5L347.0 329.8L347.1 307.9L347.1 282.1L347.1 254.4L347.1 226.6L347.2 200.6L347.2 178.4L347.2 161.3L347.2 150.5L347.2 146.7L347.3 150.1L347.3 160.6L347.3 177.2L347.3 198.9L347.4 224.1L347.4 251.3L347.4 278.5L347.4 304.0L347.5 326.1L347.5 343.3L347.5 354.6L347.5 359.2L347.6 356.9L347.6 347.9L347.6 332.7L347.6 312.5L347.7 288.5L347.7 262.2L347.7 235.4L347.7 209.8L347.8 187.0L347.8 168.3L347.8 155.0L347.8 147.9L347.9 147.3L347.9 153.2L347.9 165.3L347.9 182.8L348.0 204.5L348.0 229.2L348.0 255.3L348.0 281.2L348.1 305.3L348.1 326.2L348.1 342.8L348.1 353.9L348.2 359.0L348.2 357.8L348.2 350.5L348.2 337.4L348.3 319.4L348.3 297.6L348.3 273.2L348.3 247.7L348.4 222.5L348.4 199.2L348.4 179.0L348.4 163.0L348.5 152.2L348.5 147.1L348.5 147.9L348.5 154.7L348.6 166.9L348.6 183.9L348.6 204.7L348.6 228.2L348.7 252.9L348.7 277.6L348.7 300.9L348.7 321.6L348.8 338.5L348.8 350.7L348.8 357.7L348.8 359.1L348.9 354.8L348.9 345.2L348.9 330.7L348.9 312.1L349.0 290.5L349.0 266.9L349.0 242.7L349.0 219.1L349.1 197.3L349.1 178.3L349.1 163.2L349.1 152.8L349.2 147.4L349.2 147.4L349.2 152.6L349.2 162.9L349.2 177.7L349.3 196.1L349.3 217.4L349.3 240.3L349.3 263.8L349.4 286.8L349.4 308.0L349.4 326.6L349.4 341.5L349.5 352.2L349.5 358.1L349.5 359.0L349.5 354.9L349.6 346.0L349.6 332.7L349.6 315.8L349.6 295.9L349.7 274.1L349.7 251.4L349.7 228.8L349.7 207.3L349.8 188.0L349.8 171.7L349.8 159.1L349.8 150.7L349.9 146.9L349.9 147.9L349.9 153.5L349.9 163.5L350.0 177.4L350.0 194.6L350.0 214.3L350.0 235.6L350.1 257.6L350.1 279.4L350.1 300.0L350.1 318.6L350.2 334.3L350.2 346.6L350.2 354.9L350.2 358.9L350.3 358.5L350.3 353.8L350.3 344.8L350.3 332.2L350.4 316.3L350.4 297.9L350.4 277.7L350.4 256.6L350.5 235.3L350.5 214.9L350.5 196.0L350.5 179.3L350.6 165.7L350.6 155.4L350.6 149.1L350.6 146.7L350.7 148.5L350.7 154.3L350.7 163.8L350.7 176.7L350.8 192.5L350.8 210.5L350.8 230.1L350.8 250.5L350.9 270.9L350.9 290.6L350.9 308.9L350.9 325.1L351.0 338.6L351.0 349.0L351.0 355.9L351.0 359.1L351.1 358.5L351.1 354.1L351.1 346.2L351.1 335.0L351.2 320.9L351.2 304.6L351.2 286.4L351.2 267.2L351.3 247.6L351.3 228.1L351.3 209.6L351.3 192.6L351.3 177.6L351.4 165.2L351.4 155.8L351.4 149.6L351.4 146.8L351.5 147.6L351.5 151.7L351.5 159.2L351.5 169.6L351.6 182.7L351.6 198.0L351.6 215.0L351.6 233.2L351.7 251.9L351.7 270.7L351.7 288.8L351.7 305.8L351.8 321.1L351.8 334.2L351.8 344.9L351.8 352.8L351.9 357.6L351.9 359.3L351.9 357.8L351.9 353.2L352.0 345.7L352.0 335.5L352.0 322.9L352.0 308.3L352.1 292.1L352.1 274.9L352.1 257.1L352.1 239.2L352.2 221.8L352.2 205.3L352.2 190.2L352.2 176.8L352.3 165.6L352.3 156.8L352.3 150.7L352.3 147.3L352.4 146.9L352.4 149.2L352.4 154.3L352.4 162.0L352.5 172.1L352.5 184.3L352.5 198.2L352.5 213.5L352.6 229.8L352.6 246.6L352.6 263.6L352.6 280.2L352.7 296.1L352.7 310.8L352.7 324.1L352.7 335.6L352.8 345.0L352.8 352.2L352.8 356.9L352.8 359.1L352.9 358.8L352.9 355.9L352.9 350.6L352.9 343.1L353.0 333.4L353.0 322.0L353.0 308.9L353.0 294.6L353.1 279.4L353.1 263.7L353.1 247.8L353.1 232.0L353.2 216.7L353.2 202.3L353.2 189.1L353.2 177.3L353.3 167.2L353.3 158.9L353.3 152.7L353.3 148.7L353.3 146.8L353.4 147.2L353.4 149.8L353.4 154.6L353.4 161.3L353.5 169.9L353.5 180.2L353.5 191.9L353.5 204.7L353.6 218.5L353.6 233.0L353.6 247.8L353.6 262.6L353.7 277.2L353.7 291.3L353.7 304.6L353.7 316.9L353.8 327.9L353.8 337.5L353.8 345.5L353.8 351.7L353.9 356.2L353.9 358.7L353.9 359.3L353.9 357.9L354.0 354.8L354.0 349.8L354.0 343.1L354.0 334.9L354.1 325.3L354.1 314.5L354.1 302.6L354.1 290.0L354.2 276.8L354.2 263.2L354.2 249.6L354.2 236.0L354.3 222.7L354.3 210.0L354.3 198.1L354.3 187.0L354.4 177.1L354.4 168.3L354.4 161.0L354.4 155.1L354.5 150.7L354.5 147.9L354.5 146.7L354.5 147.2L354.6 149.2L354.6 152.7L354.6 157.7L354.6 164.1L354.7 171.8L354.7 180.5L354.7 190.3L354.7 201.0L354.8 212.3L354.8 224.1L354.8 236.3L354.8 248.7L354.9 261.1L354.9 273.3L354.9 285.3L354.9 296.7L355.0 307.5L355.0 317.5L355.0 326.7L355.0 334.9L355.1 342.0L355.1 348.0L355.1 352.7L355.1 356.2L355.2 358.4L355.2 359.3L355.2 358.9L355.2 357.2L355.3 354.3L355.3 350.2L355.3 345.0L355.3 338.8L355.4 331.5L355.4 323.5L355.4 314.6L355.4 305.1L355.4 295.0L355.5 284.6L355.5 273.8L355.5 263.0L355.5 252.0L355.6 241.2L355.6 230.5L355.6 220.2L355.6 210.3L355.7 200.8L355.7 192.0L355.7 183.8L355.7 176.4L355.8 169.8L355.8 164.0L355.8 159.1L355.8 155.2L355.9 152.2L355.9 150.2L355.9 149.2L355.9 149.1L356.0 150.0L356.0 151.7L356.0 154.4L356.0 158.0L356.1 162.3L356.1 167.4L356.1 173.2L356.1 179.7L356.2 186.7L356.2 194.2L356.2 202.1L356.2 210.4L356.3 219.0L356.3 227.8L356.3 236.7L356.3 245.7L356.4 254.7L356.4 263.6L356.4 272.4L356.4 280.9L356.5 289.2L356.5 297.1L356.5 304.7L356.5 311.8L356.6 318.5L356.6 324.6L356.6 330.2L356.6 335.3L356.7 339.7L356.7 343.5L356.7 346.7L356.7 349.3L356.8 351.2L356.8 352.5L356.8 353.1L356.8 353.1L356.9 352.5L356.9 351.3L356.9 349.5L356.9 347.1L357.0 344.2L357.0 340.8L357.0 336.9L357.0 332.6L357.1 327.9L357.1 322.8L357.1 317.3L357.1 311.6L357.2 305.6L357.2 299.3L357.2 292.9L357.2 286.4L357.3 279.7L357.3 272.9L357.3 266.2L357.3 259.4L357.4 252.6L357.4 245.9L357.4 239.3L357.4 232.8L357.5 226.5L357.5 220.3L357.5 214.4L357.5 208.6L357.5 203.2L357.6 197.9L357.6 193.0L357.6 188.3L357.6 184.0L357.7 179.9L357.7 176.2L357.7 172.9L357.7 169.8L357.8 167.1L357.8 164.8L357.8 162.8L357.8 161.1L357.9 159.8L357.9 158.8L357.9 158.1L357.9 157.8L358.0 157.8L358.0 158.0L358.0 158.6L358.0 159.5L358.1 160.7L358.1 162.1L358.1 163.8L358.1 165.7L358.2 167.9L358.2 170.3L358.2 172.8L358.2 175.6L358.3 178.6L358.3 181.7L358.3 184.9L358.3 188.3L358.4 191.8L358.4 195.5L358.4 199.2L358.4 203.0L358.5 206.8L358.5 210.8L358.5 214.7L358.5 218.8L358.6 222.8L358.6 226.8L358.6 230.9L358.6 234.9L358.7 238.9L358.7 242.9L358.7 246.9L358.7 250.8L358.8 254.7L358.8 258.5L358.8 262.3L358.8 266.0L358.9 269.6L358.9 273.1L358.9 276.6L358.9 280.0L359.0 283.3L359.0 286.5L359.0 289.6L359.0 292.6L359.1 295.5L359.1 298.3L359.1 301.0L359.1 303.6L359.2 306.1L359.2 308.5L359.2 310.7L359.2 312.9L359.3 315.0L359.3 317.0L359.3 318.9L359.3 320.7L359.4 322.4L359.4 323.9L359.4 325.4L359.4 326.9L359.5 328.2L359.5 329.4L359.5 330.5L359.5 331.6L359.5 332.6L359.6 333.5L359.6 334.3L359.6 335.1L359.6 335.7L359.7 336.4L359.7 336.9L359.7 337.4L359.7 337.8L359.8 338.2L359.8 338.5L359.8 338.8L359.8 339.0L359.9 339.2L359.9 339.3L359.9 339.4L359.9 339.4L360.0 339.5L360.0 339.4L360.0 339.4L360.0 339.3L360.1 339.2L360.1 339.1L360.1 338.9L360.1 338.7L360.2 338.6L360.2 338.3L360.2 338.1L360.2 337.9L360.3 337.6L360.3 337.4L360.3 337.1L360.3 336.9L360.4 336.6L360.4 336.3L360.4 336.0L360.4 335.8L360.5 335.5L360.5 335.2L360.5 334.9L360.5 334.7L360.6 334.4L360.6 334.1L360.6 333.9L360.6 333.6L360.7 333.4L360.7 333.2L360.7 332.9L360.7 332.7L360.8 332.5L360.8 332.3L360.8 332.2L360.8 332.0L360.9 331.9L360.9 331.7L360.9 331.6L360.9 331.5L361.0 331.4L361.0 331.3L361.0 331.2L361.0 331.1L361.1 331.0L361.1 331.0L361.1 331.0L361.1 330.9L361.2 330.9L361.2 330.9L361.2 330.9L361.2 330.9L361.3 330.9L361.3 331.0L361.3 331.0L361.3 331.0L361.4 331.1L361.4 331.1L361.4 331.2L361.4 331.3L361.5 331.3L361.5 331.4L361.5 331.4L361.5 331.5L361.6 331.6L361.6 331.6L361.6 331.7L361.6 331.7L361.6 331.7L361.7 331.8L361.7 331.8L361.7 331.8L361.7 331.8L361.8 331.7L361.8 331.7L361.8 331.6L361.8 331.6L361.9 331.4L361.9 331.3L361.9 331.2L361.9 331.0L362.0 330.8L362.0 330.5L362.0 330.2L362.0 329.9L362.1 329.6L362.1 329.2L362.1 328.7L362.1 328.3L362.2 327.7L362.2 327.2L362.2 326.6L362.2 325.9L362.3 325.2L362.3 324.4L362.3 323.5L362.3 322.6L362.4 321.7L362.4 320.7L362.4 319.6L362.4 318.4L362.5 317.2L362.5 315.9L362.5 314.6L362.5 313.1L362.6 311.6L362.6 310.0L362.6 308.4L362.6 306.7L362.7 304.9L362.7 303.0L362.7 301.0L362.7 299.0L362.8 296.9L362.8 294.7L362.8 292.5L362.8 290.2L362.9 287.8L362.9 285.3L362.9 282.8L362.9 280.2L363.0 277.5L363.0 274.8L363.0 272.0L363.0 269.2L363.1 266.3L363.1 263.4L363.1 260.4L363.1 257.4L363.2 254.4L363.2 251.3L363.2 248.2L363.2 245.1L363.3 242.0L363.3 238.8L363.3 235.7L363.3 232.6L363.4 229.5L363.4 226.4L363.4 223.4L363.4 220.4L363.5 217.5L363.5 214.6L363.5 211.8L363.5 209.1L363.6 206.4L363.6 203.9L363.6 201.4L363.6 199.1L363.6 196.9L363.7 194.8L363.7 192.9L363.7 191.2L363.7 189.5L363.8 188.1L363.8 186.9L363.8 185.8L363.8 184.9L363.9 184.2L363.9 183.8L363.9 183.5L363.9 183.5L364.0 183.7L364.0 184.1L364.0 184.8L364.0 185.7L364.1 186.8L364.1 188.2L364.1 189.8L364.1 191.6L364.2 193.7L364.2 196.0L364.2 198.6L364.2 201.3L364.3 204.3L364.3 207.5L364.3 210.9L364.3 214.5L364.4 218.2L364.4 222.1L364.4 226.2L364.4 230.4L364.5 234.7L364.5 239.1L364.5 243.6L364.5 248.1L364.6 252.7L364.6 257.3L364.6 261.9L364.6 266.5L364.7 271.0L364.7 275.5L364.7 279.8L364.7 284.1L364.8 288.1L364.8 292.1L364.8 295.8L364.8 299.3L364.9 302.5L364.9 305.5L364.9 308.2L364.9 310.6L365.0 312.7L365.0 314.4L365.0 315.8L365.0 316.8L365.1 317.4L365.1 317.6L365.1 317.4L365.1 316.9L365.2 315.9L365.2 314.5L365.2 312.7L365.2 310.5L365.3 307.9L365.3 305.0L365.3 301.7L365.3 298.0L365.4 294.0L365.4 289.7L365.4 285.2L365.4 280.4L365.5 275.4L365.5 270.2L365.5 264.9L365.5 259.5L365.6 254.0L365.6 248.6L365.6 243.1L365.6 237.7L365.7 232.4L365.7 227.3L365.7 222.3L365.7 217.6L365.7 213.2L365.8 209.1L365.8 205.4L365.8 202.1L365.8 199.2L365.9 196.8L365.9 194.9L365.9 193.5L365.9 192.6L366.0 192.2L366.0 192.4L366.0 193.2L366.0 194.5L366.1 196.4L366.1 198.9L366.1 201.8L366.1 205.3L366.2 209.2L366.2 213.5L366.2 218.3L366.2 223.4L366.3 228.8L366.3 234.5L366.3 240.4L366.3 246.4L366.4 252.5L366.4 258.6L366.4 264.6L366.4 270.5L366.5 276.2L366.5 281.7L366.5 286.9L366.5 291.7L366.6 296.0L366.6 299.9L366.6 303.2L366.6 306.0L366.7 308.1L366.7 309.6L366.7 310.4L366.7 310.5L366.8 309.9L366.8 308.6L366.8 306.6L366.8 304.0L366.9 300.7L366.9 296.8L366.9 292.4L366.9 287.4L367.0 282.0L367.0 276.2L367.0 270.1L367.0 263.8L367.1 257.3L367.1 250.7L367.1 244.2L367.1 237.9L367.2 231.7L367.2 225.8L367.2 220.3L367.2 215.3L367.3 210.8L367.3 206.9L367.3 203.7L367.3 201.2L367.4 199.4L367.4 198.5L367.4 198.4L367.4 199.1L367.5 200.6L367.5 203.0L367.5 206.1L367.5 209.9L367.6 214.4L367.6 219.5L367.6 225.2L367.6 231.3L367.7 237.7L367.7 244.4L367.7 251.3L367.7 258.1L367.8 264.9L367.8 271.5L367.8 277.7L367.8 283.6L367.8 288.9L367.9 293.5L367.9 297.5L367.9 300.7L367.9 303.1L368.0 304.5L368.0 305.1L368.0 304.7L368.0 303.3L368.1 301.1L368.1 297.9L368.1 294.0L368.1 289.3L368.2 283.9L368.2 277.9L368.2 271.4L368.2 264.6L368.3 257.6L368.3 250.5L368.3 243.5L368.3 236.6L368.4 230.1L368.4 224.0L368.4 218.5L368.4 213.8L368.5 209.8L368.5 206.7L368.5 204.6L368.5 203.5L368.6 203.4L368.6 204.4L368.6 206.4L368.6 209.3L368.7 213.3L368.7 218.0L368.7 223.5L368.7 229.7L368.8 236.4L368.8 243.4L368.8 250.6L368.8 257.9L368.9 265.0L368.9 271.9L368.9 278.3L368.9 284.2L369.0 289.3L369.0 293.5L369.0 296.8L369.0 299.1L369.1 300.3L369.1 300.3L369.1 299.2L369.1 297.0L369.2 293.8L369.2 289.5L369.2 284.4L369.2 278.4L369.3 271.9L369.3 264.9L369.3 257.6L369.3 250.2L369.4 242.9L369.4 235.9L369.4 229.3L369.4 223.3L369.5 218.1L369.5 213.9L369.5 210.7L369.5 208.6L369.6 207.7L369.6 208.0L369.6 209.5L369.6 212.2L369.7 216.0L369.7 220.9L369.7 226.5L369.7 233.0L369.8 239.9L369.8 247.2L369.8 254.7L369.8 262.1L369.8 269.2L369.9 275.9L369.9 281.9L369.9 287.0L369.9 291.1L370.0 294.1L370.0 295.9L370.0 296.4L370.0 295.6L370.1 293.5L370.1 290.2L370.1 285.8L370.1 280.4L370.2 274.2L370.2 267.4L370.2 260.1L370.2 252.6L370.3 245.1L370.3 237.9L370.3 231.2L370.3 225.2L370.4 220.1L370.4 216.1L370.4 213.3L370.4 211.8L370.5 211.6L370.5 212.8L370.5 215.3L370.5 219.0L370.6 223.9L370.6 229.7L370.6 236.3L370.6 243.5L370.7 250.9L370.7 258.4L370.7 265.7L370.7 272.5L370.8 278.7L370.8 283.9L370.8 288.0L370.8 290.9L370.9 292.4L370.9 292.6L370.9 291.3L370.9 288.6L371.0 284.7L371.0 279.6L371.0 273.6L371.0 266.8L371.1 259.6L371.1 252.1L371.1 244.7L371.1 237.6L371.2 231.1L371.2 225.5L371.2 220.9L371.2 217.6L371.3 215.6L371.3 215.1L371.3 216.0L371.3 218.4L371.4 222.1L371.4 227.0L371.4 232.9L371.4 239.6L371.5 246.8L371.5 254.2L371.5 261.6L371.5 268.6L371.6 274.9L371.6 280.3L371.6 284.6L371.6 287.6L371.7 289.1L371.7 289.1L371.7 287.6L371.7 284.7L371.8 280.5L371.8 275.1L371.8 268.8L371.8 261.9L371.9 254.6L371.9 247.2L371.9 240.1L371.9 233.7L371.9 228.0L372.0 223.5L372.0 220.4L372.0 218.6L372.0 218.4L372.1 219.7L372.1 222.6L372.1 226.7L372.1 232.1L372.2 238.3L372.2 245.3L372.2 252.5L372.2 259.7L372.3 266.6L372.3 272.8L372.3 278.1L372.3 282.2L372.4 284.9L372.4 286.1L372.4 285.7L372.4 283.8L372.5 280.4L372.5 275.7L372.5 269.9L372.5 263.3L372.6 256.3L372.6 249.1L372.6 242.2L372.6 235.8L372.7 230.3L372.7 226.0L372.7 223.0L372.7 221.5L372.8 221.6L372.8 223.3L372.8 226.5L372.8 231.0L372.9 236.7L372.9 243.1L372.9 250.0L372.9 257.0L373.0 263.8L373.0 270.0L373.0 275.3L373.0 279.4L373.1 282.0L373.1 283.1L373.1 282.6L373.1 280.6L373.2 277.0L373.2 272.2L373.2 266.4L373.2 259.8L373.3 253.0L373.3 246.1L373.3 239.7L373.3 234.1L373.4 229.5L373.4 226.3L373.4 224.5L373.4 224.4L373.5 225.9L373.5 228.9L373.5 233.2L373.5 238.7L373.6 244.9L373.6 251.6L373.6 258.3L373.6 264.7L373.7 270.3L373.7 274.9L373.7 278.2L373.7 280.0L373.8 280.2L373.8 278.8L373.8 275.9L373.8 271.6L373.9 266.2L373.9 260.1L373.9 253.6L373.9 247.1L373.9 240.9L374.0 235.6L374.0 231.3L374.0 228.5L374.0 227.1L374.1 227.3L374.1 229.2L374.1 232.5L374.1 237.1L374.2 242.6L374.2 248.8L374.2 255.2L374.2 261.4L374.3 267.0L374.3 271.7L374.3 275.2L374.3 277.2L374.4 277.6L374.4 276.5L374.4 273.8L374.4 269.7L374.5 264.6L374.5 258.8L374.5 252.6L374.5 246.5L374.6 240.9L374.6 236.1L374.6 232.5L374.6 230.3L374.7 229.6L374.7 230.5L374.7 233.0L374.7 236.8L374.8 241.7L374.8 247.3L374.8 253.3L374.8 259.2L374.9 264.6L374.9 269.2L374.9 272.6L374.9 274.6L375.0 275.1L375.0 274.0L375.0 271.4L375.0 267.5L375.1 262.7L375.1 257.1L375.1 251.3L375.1 245.7L375.2 240.7L375.2 236.6L375.2 233.7L375.2 232.3L375.3 232.4L375.3 234.0L375.3 237.0L375.3 241.2L375.4 246.2L375.4 251.7L375.4 257.2L375.4 262.4L375.5 266.8L375.5 270.1L375.5 272.1L375.5 272.7L375.6 271.7L375.6 269.3L375.6 265.6L375.6 261.0L375.7 255.9L375.7 250.5L375.7 245.4L375.7 241.0L375.8 237.5L375.8 235.3L375.8 234.5L375.8 235.2L375.9 237.3L375.9 240.6L375.9 244.9L375.9 249.8L376.0 254.9L376.0 259.8L376.0 264.1L376.0 267.4L376.0 269.6L376.1 270.3L376.1 269.6L376.1 267.6L376.1 264.4L376.2 260.2L376.2 255.5L376.2 250.7L376.2 246.1L376.3 242.1L376.3 239.1L376.3 237.3L376.3 236.8L376.4 237.8L376.4 240.0L376.4 243.3L376.4 247.4L376.5 252.0L376.5 256.5L376.5 260.7L376.5 264.2L376.6 266.7L376.6 267.9L376.6 267.8L376.6 266.4L376.7 263.9L376.7 260.4L376.7 256.3L376.7 251.9L376.8 247.7L376.8 244.1L376.8 241.2L376.8 239.5L376.9 239.1L376.9 239.9L376.9 241.9L376.9 244.9L377.0 248.5L377.0 252.6L377.0 256.6L377.0 260.2L377.1 263.1L377.1 265.1L377.1 265.8L377.1 265.4L377.2 263.8L377.2 261.2L377.2 257.9L377.2 254.1L377.3 250.3L377.3 246.9L377.3 244.0L377.3 242.1L377.4 241.3L377.4 241.6L377.4 243.0L377.4 245.3L377.5 248.4L377.5 251.8L377.5 255.3L377.5 258.6L377.6 261.2L377.6 262.9L377.6 263.7L377.6 263.4L377.7 262.0L377.7 259.8L377.7 256.9L377.7 253.7L377.8 250.5L377.8 247.6L377.8 245.3L377.8 243.8L377.9 243.3L377.9 243.8L377.9 245.3L377.9 247.4L378.0 250.2L378.0 253.1L378.0 256.0L378.0 258.5L378.0 260.4L378.1 261.4L378.1 261.6L378.1 260.8L378.1 259.3L378.2 257.1L378.2 254.5L378.2 251.9L378.2 249.4L378.3 247.3L378.3 246.0L378.3 245.4L378.3 245.6L378.4 246.7L378.4 248.4L378.4 250.5L378.4 252.9L378.5 255.2L378.5 257.2L378.5 258.7L378.5 259.5L378.6 259.6L378.6 258.9L378.6 257.6L378.6 255.9L378.7 253.8L378.7 251.8L378.7 249.9L378.7 248.5L378.8 247.6L378.8 247.4L378.8 247.8L378.8 248.7L378.9 250.2L378.9 251.9L378.9 253.6L378.9 255.3L379.0 256.5L379.0 257.4L379.0 257.7L379.0 257.4L379.1 256.6L379.1 255.5L379.1 254.1L379.1 252.6L379.2 251.3L379.2 250.2L379.2 249.5L379.2 249.3L379.3 249.5L379.3 250.1L379.3 251.0L379.3 252.1L379.4 253.3L379.4 254.3L379.4 255.1L379.4 255.6L379.5 255.8L379.5 255.6L379.5 255.1L379.5 254.4L379.6 253.5L379.6 252.7L379.6 252.0L379.6 251.5L379.7 251.2L379.7 251.2L379.7 251.4L379.7 251.8L379.8 252.3L379.8 252.8L379.8 253.2L379.8 253.6L379.9 253.8L379.9 253.9L379.9 253.8L379.9 253.7L380.0 253.4L380.0 253.2L380.0 253.0L380.0 252.9L380.1 252.9L380.1 252.9L380.1 253.0L380.1 253.0M429.5 253.0L429.5 253.0L429.5 253.0L429.5 253.0L429.6 253.0L429.6 253.0L429.6 253.0L429.6 253.0L429.7 253.0L429.7 253.0L429.7 253.0L429.7 253.0L429.8 253.0L429.8 253.0L429.8 253.0L429.8 253.0L429.9 253.0L429.9 253.0L429.9 253.0L429.9 253.1L430.0 253.1L430.0 253.1L430.0 253.1L430.0 253.0L430.1 253.0L430.1 252.9L430.1 252.9L430.1 252.8L430.2 252.8L430.2 252.9L430.2 253.0L430.2 253.1L430.3 253.2L430.3 253.2L430.3 253.3L430.3 253.3L430.4 253.2L430.4 253.1L430.4 252.9L430.4 252.8L430.5 252.6L430.5 252.6L430.5 252.6L430.5 252.7L430.6 252.9L430.6 253.1L430.6 253.3L430.6 253.5L430.7 253.6L430.7 253.6L430.7 253.5L430.7 253.2L430.8 253.0L430.8 252.7L430.8 252.4L430.8 252.3L430.9 252.2L430.9 252.4L430.9 252.6L430.9 253.0L431.0 253.3L431.0 253.7L431.0 253.9L431.0 254.0L431.1 253.9L431.1 253.6L431.1 253.2L431.1 252.7L431.2 252.3L431.2 251.9L431.2 251.8L431.2 251.8L431.3 252.1L431.3 252.5L431.3 253.1L431.3 253.7L431.4 254.2L431.4 254.5L431.4 254.5L431.4 254.3L431.5 253.8L431.5 253.2L431.5 252.5L431.5 251.8L431.6 251.4L431.6 251.2L431.6 251.3L431.6 251.7L431.6 252.4L431.7 253.2L431.7 254.0L431.7 254.7L431.7 255.1L431.8 255.2L431.8 254.8L431.8 254.2L431.8 253.3L431.9 252.3L431.9 251.4L431.9 250.8L431.9 250.5L432.0 250.6L432.0 251.1L432.0 252.0L432.0 253.1L432.1 254.2L432.1 255.2L432.1 255.8L432.1 256.0L432.2 255.7L432.2 254.9L432.2 253.8L432.2 252.5L432.3 251.3L432.3 250.3L432.3 249.7L432.3 249.6L432.4 250.1L432.4 251.1L432.4 252.4L432.4 253.9L432.5 255.3L432.5 256.3L432.5 256.8L432.5 256.8L432.6 256.1L432.6 254.9L432.6 253.4L432.6 251.7L432.7 250.2L432.7 249.1L432.7 248.6L432.7 248.8L432.8 249.6L432.8 251.0L432.8 252.8L432.8 254.6L432.9 256.2L432.9 257.4L432.9 257.9L432.9 257.7L433.0 256.7L433.0 255.1L433.0 253.2L433.0 251.2L433.1 249.4L433.1 248.1L433.1 247.5L433.1 247.8L433.2 248.8L433.2 250.5L433.2 252.7L433.2 254.9L433.3 256.9L433.3 258.4L433.3 259.1L433.3 258.9L433.4 257.8L433.4 256.0L433.4 253.7L433.4 251.2L433.5 248.9L433.5 247.2L433.5 246.3L433.5 246.4L433.6 247.4L433.6 249.3L433.6 251.7L433.6 254.4L433.6 257.0L433.7 259.0L433.7 260.2L433.7 260.4L433.7 259.5L433.8 257.7L433.8 255.2L433.8 252.3L433.8 249.4L433.9 247.0L433.9 245.4L433.9 244.8L433.9 245.4L434.0 247.1L434.0 249.6L434.0 252.6L434.0 255.8L434.1 258.7L434.1 260.8L434.1 261.8L434.1 261.7L434.2 260.4L434.2 258.0L434.2 254.9L434.2 251.5L434.3 248.2L434.3 245.5L434.3 243.8L434.3 243.3L434.4 244.1L434.4 246.1L434.4 249.1L434.4 252.7L434.5 256.4L434.5 259.7L434.5 262.1L434.5 263.4L434.6 263.4L434.6 261.9L434.6 259.3L434.6 255.8L434.7 251.8L434.7 247.9L434.7 244.7L434.7 242.4L434.8 241.5L434.8 242.1L434.8 244.1L434.8 247.3L434.9 251.3L434.9 255.5L434.9 259.6L434.9 262.8L435.0 264.8L435.0 265.4L435.0 264.4L435.0 261.9L435.1 258.3L435.1 253.9L435.1 249.4L435.1 245.2L435.2 242.0L435.2 240.0L435.2 239.7L435.2 241.0L435.3 243.9L435.3 247.9L435.3 252.6L435.3 257.4L435.4 261.8L435.4 265.1L435.4 267.0L435.4 267.2L435.5 265.7L435.5 262.6L435.5 258.3L435.5 253.3L435.6 248.2L435.6 243.6L435.6 240.0L435.6 238.0L435.7 237.7L435.7 239.2L435.7 242.4L435.7 246.9L435.7 252.2L435.8 257.6L435.8 262.6L435.8 266.5L435.8 268.9L435.9 269.4L435.9 268.1L435.9 264.9L435.9 260.4L436.0 254.9L436.0 249.1L436.0 243.7L436.0 239.3L436.1 236.4L436.1 235.4L436.1 236.4L436.1 239.2L436.2 243.7L436.2 249.3L436.2 255.4L436.2 261.3L436.3 266.3L436.3 269.9L436.3 271.7L436.3 271.4L436.4 269.0L436.4 264.8L436.4 259.3L436.4 253.0L436.5 246.6L436.5 240.8L436.5 236.4L436.5 233.7L436.6 233.0L436.6 234.6L436.6 238.2L436.6 243.4L436.7 249.7L436.7 256.5L436.7 262.9L436.7 268.4L436.8 272.3L436.8 274.2L436.8 273.8L436.8 271.2L436.9 266.6L436.9 260.6L436.9 253.7L436.9 246.6L437.0 240.1L437.0 234.9L437.0 231.6L437.0 230.4L437.1 231.6L437.1 235.0L437.1 240.3L437.1 247.0L437.2 254.4L437.2 261.7L437.2 268.2L437.2 273.2L437.3 276.2L437.3 276.9L437.3 275.1L437.3 271.1L437.4 265.2L437.4 258.0L437.4 250.3L437.4 242.7L437.5 236.1L437.5 231.1L437.5 228.2L437.5 227.8L437.6 229.9L437.6 234.2L437.6 240.5L437.6 248.1L437.7 256.2L437.7 264.1L437.7 270.9L437.7 276.1L437.7 279.1L437.8 279.6L437.8 277.6L437.8 273.1L437.8 266.7L437.9 258.8L437.9 250.4L437.9 242.1L437.9 234.8L438.0 229.1L438.0 225.7L438.0 224.8L438.0 226.5L438.1 230.8L438.1 237.2L438.1 245.1L438.1 253.8L438.2 262.6L438.2 270.5L438.2 276.9L438.2 281.1L438.3 282.8L438.3 281.7L438.3 278.0L438.3 272.0L438.4 264.2L438.4 255.3L438.4 246.1L438.4 237.5L438.5 230.2L438.5 224.9L438.5 222.0L438.5 222.0L438.6 224.7L438.6 229.9L438.6 237.3L438.6 246.1L438.7 255.6L438.7 265.0L438.7 273.3L438.7 280.0L438.8 284.3L438.8 286.0L438.8 284.7L438.8 280.7L438.9 274.3L438.9 265.9L438.9 256.4L438.9 246.5L439.0 237.1L439.0 229.0L439.0 222.8L439.0 219.2L439.1 218.5L439.1 220.6L439.1 225.5L439.1 232.8L439.2 241.8L439.2 251.9L439.2 262.1L439.2 271.6L439.3 279.7L439.3 285.6L439.3 288.8L439.3 289.1L439.4 286.4L439.4 281.0L439.4 273.2L439.4 263.7L439.5 253.2L439.5 242.7L439.5 232.9L439.5 224.7L439.6 218.7L439.6 215.4L439.6 215.2L439.6 217.9L439.7 223.5L439.7 231.5L439.7 241.3L439.7 252.0L439.8 262.9L439.8 273.1L439.8 281.8L439.8 288.3L439.8 292.0L439.9 292.8L439.9 290.4L439.9 285.1L439.9 277.3L440.0 267.5L440.0 256.6L440.0 245.3L440.0 234.5L440.1 225.1L440.1 217.7L440.1 213.0L440.1 211.3L440.2 212.7L440.2 217.2L440.2 224.5L440.2 233.9L440.3 244.8L440.3 256.4L440.3 267.8L440.3 278.2L440.4 286.8L440.4 292.9L440.4 296.2L440.4 296.2L440.5 293.1L440.5 287.0L440.5 278.4L440.5 267.9L440.6 256.3L440.6 244.3L440.6 232.9L440.6 222.9L440.7 214.9L440.7 209.7L440.7 207.5L440.7 208.6L440.8 212.8L440.8 219.9L440.8 229.4L440.8 240.7L440.9 252.8L440.9 265.1L440.9 276.5L440.9 286.4L441.0 294.0L441.0 298.8L441.0 300.5L441.0 298.9L441.1 294.1L441.1 286.4L441.1 276.4L441.1 264.8L441.2 252.2L441.2 239.7L441.2 228.0L441.2 217.9L441.3 210.2L441.3 205.3L441.3 203.5L441.3 205.1L441.4 209.9L441.4 217.6L441.4 227.7L441.4 239.5L441.5 252.3L441.5 265.2L441.5 277.3L441.5 288.0L441.6 296.4L441.6 302.0L441.6 304.4L441.6 303.5L441.7 299.4L441.7 292.2L441.7 282.5L441.7 270.8L441.8 257.9L441.8 244.7L441.8 231.9L441.8 220.4L441.9 210.9L441.9 204.0L441.9 200.1L441.9 199.6L441.9 202.4L442.0 208.4L442.0 217.2L442.0 228.3L442.0 241.0L442.1 254.4L442.1 267.9L442.1 280.4L442.1 291.4L442.2 300.1L442.2 305.9L442.2 308.6L442.2 307.8L442.3 303.8L442.3 296.7L442.3 286.9L442.3 275.0L442.4 261.8L442.4 247.9L442.4 234.3L442.4 221.8L442.5 211.0L442.5 202.7L442.5 197.3L442.5 195.2L442.6 196.4L442.6 201.0L442.6 208.6L442.6 218.8L442.7 231.0L442.7 244.6L442.7 258.7L442.7 272.5L442.8 285.3L442.8 296.3L442.8 304.9L442.8 310.5L442.9 312.9L442.9 312.0L442.9 307.7L442.9 300.3L443.0 290.2L443.0 278.0L443.0 264.4L443.0 250.0L443.1 235.8L443.1 222.5L443.1 210.8L443.1 201.4L443.2 194.7L443.2 191.3L443.2 191.2L443.2 194.4L443.3 200.9L443.3 210.2L443.3 221.8L443.3 235.2L443.4 249.5L443.4 264.1L443.4 278.2L443.4 291.0L443.5 301.8L443.5 310.1L443.5 315.4L443.5 317.4L443.6 316.1L443.6 311.4L443.6 303.7L443.6 293.3L443.7 280.8L443.7 266.8L443.7 252.0L443.7 237.3L443.8 223.3L443.8 210.7L443.8 200.3L443.8 192.5L443.9 187.8L443.9 186.3L443.9 188.2L443.9 193.4L443.9 201.6L444.0 212.4L444.0 225.2L444.0 239.5L444.0 254.5L444.1 269.4L444.1 283.6L444.1 296.4L444.1 307.0L444.2 315.1L444.2 320.1L444.2 321.9L444.2 320.4L444.3 315.6L444.3 307.8L444.3 297.3L444.3 284.6L444.4 270.4L444.4 255.3L444.4 240.1L444.4 225.4L444.5 212.0L444.5 200.5L444.5 191.4L444.5 185.2L444.6 182.1L444.6 182.3L444.6 185.8L444.6 192.4L444.7 201.9L444.7 213.7L444.7 227.4L444.7 242.3L444.8 257.7L444.8 272.9L444.8 287.3L444.8 300.2L444.9 310.9L444.9 319.1L444.9 324.4L444.9 326.5L445.0 325.3L445.0 320.9L445.0 313.4L445.0 303.3L445.1 290.9L445.1 276.8L445.1 261.7L445.1 246.1L445.2 230.8L445.2 216.4L445.2 203.5L445.2 192.8L445.3 184.6L445.3 179.3L445.3 177.2L445.3 178.4L445.4 182.7L445.4 190.0L445.4 200.0L445.4 212.2L445.5 226.2L445.5 241.4L445.5 257.0L445.5 272.6L445.6 287.4L445.6 300.8L445.6 312.2L445.6 321.2L445.7 327.5L445.7 330.7L445.7 330.7L445.7 327.6L445.8 321.4L445.8 312.5L445.8 301.1L445.8 287.7L445.9 273.0L445.9 257.4L445.9 241.6L445.9 226.2L446.0 211.8L446.0 199.1L446.0 188.4L446.0 180.3L446.0 175.0L446.1 172.7L446.1 173.6L446.1 177.5L446.1 184.4L446.2 193.9L446.2 205.8L446.2 219.4L446.2 234.4L446.3 250.1L446.3 266.0L446.3 281.4L446.3 295.8L446.4 308.5L446.4 319.3L446.4 327.5L446.4 333.0L446.5 335.5L446.5 334.9L446.5 331.4L446.5 324.9L446.6 315.7L446.6 304.3L446.6 290.9L446.6 276.2L446.7 260.5L446.7 244.6L446.7 229.0L446.7 214.1L446.8 200.7L446.8 189.1L446.8 179.8L446.8 173.0L446.9 169.1L446.9 168.1L446.9 170.2L446.9 175.1L447.0 182.8L447.0 193.0L447.0 205.2L447.0 219.2L447.1 234.3L447.1 250.1L447.1 266.0L447.1 281.5L447.2 296.1L447.2 309.2L447.2 320.4L447.2 329.3L447.3 335.7L447.3 339.3L447.3 340.0L447.3 337.8L447.4 332.8L447.4 325.1L447.4 315.0L447.4 302.9L447.5 289.1L447.5 274.1L447.5 258.3L447.5 242.4L447.6 226.8L447.6 212.1L447.6 198.6L447.6 186.9L447.7 177.3L447.7 170.1L447.7 165.5L447.7 163.7L447.8 164.8L447.8 168.6L447.8 175.1L447.8 184.1L447.9 195.2L447.9 208.1L447.9 222.5L447.9 237.8L448.0 253.6L448.0 269.4L448.0 284.7L448.0 299.1L448.0 312.0L448.1 323.2L448.1 332.3L448.1 339.0L448.1 343.0L448.2 344.4L448.2 343.1L448.2 339.0L448.2 332.4L448.3 323.5L448.3 312.4L448.3 299.6L448.3 285.4L448.4 270.2L448.4 254.6L448.4 238.8L448.4 223.5L448.5 209.0L448.5 195.8L448.5 184.2L448.5 174.5L448.6 167.1L448.6 162.1L448.6 159.7L448.6 160.0L448.7 162.8L448.7 168.2L448.7 176.0L448.7 185.9L448.8 197.7L448.8 211.0L448.8 225.5L448.8 240.8L448.9 256.4L448.9 271.9L448.9 286.9L448.9 301.0L449.0 313.8L449.0 325.0L449.0 334.3L449.0 341.3L449.1 346.1L449.1 348.3L449.1 348.0L449.1 345.2L449.2 340.0L449.2 332.4L449.2 322.8L449.2 311.4L449.3 298.4L449.3 284.3L449.3 269.3L449.3 254.0L449.4 238.5L449.4 223.5L449.4 209.2L449.4 196.0L449.5 184.3L449.5 174.2L449.5 166.2L449.5 160.3L449.6 156.8L449.6 155.6L449.6 156.9L449.6 160.5L449.7 166.4L449.7 174.5L449.7 184.5L449.7 196.1L449.8 209.1L449.8 223.2L449.8 238.1L449.8 253.2L449.9 268.4L449.9 283.2L449.9 297.3L449.9 310.3L450.0 322.0L450.0 332.1L450.0 340.3L450.0 346.4L450.1 350.4L450.1 352.1L450.1 351.5L450.1 348.6L450.1 343.6L450.2 336.4L450.2 327.4L450.2 316.6L450.2 304.4L450.3 291.1L450.3 276.9L450.3 262.1L450.3 247.2L450.4 232.4L450.4 218.0L450.4 204.4L450.4 191.9L450.5 180.8L450.5 171.2L450.5 163.4L450.5 157.6L450.6 153.9L450.6 152.2L450.6 152.8L450.6 155.5L450.7 160.3L450.7 167.1L450.7 175.7L450.7 185.9L450.8 197.5L450.8 210.3L450.8 224.0L450.8 238.3L450.9 252.9L450.9 267.5L450.9 281.7L450.9 295.4L451.0 308.2L451.0 319.9L451.0 330.2L451.0 338.9L451.1 345.9L451.1 351.0L451.1 354.2L451.1 355.3L451.2 354.4L451.2 351.5L451.2 346.6L451.2 339.9L451.3 331.5L451.3 321.5L451.3 310.3L451.3 297.9L451.4 284.7L451.4 270.8L451.4 256.7L451.4 242.4L451.5 228.4L451.5 214.9L451.5 202.1L451.5 190.2L451.6 179.6L451.6 170.3L451.6 162.6L451.6 156.5L451.7 152.3L451.7 149.9L451.7 149.4L451.7 150.8L451.8 154.1L451.8 159.2L451.8 165.9L451.8 174.2L451.9 184.0L451.9 194.9L451.9 206.9L451.9 219.7L452.0 233.0L452.0 246.7L452.0 260.5L452.0 274.2L452.1 287.5L452.1 300.1L452.1 312.0L452.1 322.8L452.1 332.3L452.2 340.6L452.2 347.3L452.2 352.4L452.2 355.8L452.3 357.5L452.3 357.5L452.3 355.7L452.3 352.2L452.4 347.0L452.4 340.3L452.4 332.2L452.4 322.7L452.5 312.2L452.5 300.7L452.5 288.4L452.5 275.6L452.6 262.5L452.6 249.2L452.6 236.0L452.6 223.0L452.7 210.6L452.7 198.8L452.7 188.0L452.7 178.1L452.8 169.4L452.8 162.1L452.8 156.1L452.8 151.7L452.9 148.8L452.9 147.5L452.9 147.8L452.9 149.7L453.0 153.2L453.0 158.2L453.0 164.5L453.0 172.2L453.1 181.1L453.1 191.0L453.1 201.9L453.1 213.4L453.2 225.6L453.2 238.1L453.2 250.8L453.2 263.5L453.3 276.0L453.3 288.2L453.3 299.9L453.3 310.9L453.4 321.0L453.4 330.2L453.4 338.2L453.4 345.1L453.5 350.7L453.5 354.9L453.5 357.6L453.5 359.0L453.6 358.9L453.6 357.3L453.6 354.3L453.6 350.0L453.7 344.4L453.7 337.5L453.7 329.5L453.7 320.5L453.8 310.7L453.8 300.1L453.8 288.9L453.8 277.2L453.9 265.3L453.9 253.2L453.9 241.2L453.9 229.3L454.0 217.7L454.0 206.6L454.0 196.2L454.0 186.4L454.1 177.6L454.1 169.7L454.1 162.8L454.1 157.1L454.2 152.6L454.2 149.4L454.2 147.4L454.2 146.7L454.2 147.3L454.3 149.2L454.3 152.4L454.3 156.7L454.3 162.2L454.4 168.8L454.4 176.3L454.4 184.8L454.4 194.0L454.5 203.9L454.5 214.3L454.5 225.2L454.5 236.4L454.6 247.7L454.6 259.1L454.6 270.4L454.6 281.5L454.7 292.2L454.7 302.4L454.7 312.1L454.7 321.1L454.8 329.3L454.8 336.7L454.8 343.1L454.8 348.5L454.9 352.8L454.9 356.1L454.9 358.2L454.9 359.2L455.0 359.1L455.0 357.8L455.0 355.4L455.0 351.9L455.1 347.4L455.1 342.0L455.1 335.6L455.1 328.3L455.2 320.3L455.2 311.6L455.2 302.4L455.2 292.6L455.3 282.5L455.3 272.1L455.3 261.5L455.3 250.9L455.4 240.3L455.4 229.9L455.4 219.7L455.4 209.8L455.5 200.5L455.5 191.6L455.5 183.4L455.5 175.8L455.6 169.0L455.6 163.1L455.6 158.0L455.6 153.8L455.7 150.6L455.7 148.3L455.7 147.0L455.7 146.7L455.8 147.4L455.8 149.1L455.8 151.7L455.8 155.2L455.9 159.6L455.9 164.9L455.9 170.9L455.9 177.6L456.0 185.0L456.0 193.0L456.0 201.5L456.0 210.4L456.1 219.7L456.1 229.3L456.1 239.0L456.1 248.8L456.2 258.6L456.2 268.4L456.2 278.0L456.2 287.4L456.3 296.4L456.3 305.1L456.3 313.3L456.3 321.0L456.3 328.2L456.4 334.7L456.4 340.5L456.4 345.5L456.4 349.9L456.5 353.4L456.5 356.1L456.5 358.0L456.5 359.1L456.6 359.3L456.6 358.7L456.6 357.2L456.6 355.0L456.7 352.0L456.7 348.2L456.7 343.7L456.7 338.5L456.8 332.7L456.8 326.3L456.8 319.4L456.8 312.0L456.9 304.2L456.9 296.0L456.9 287.6L456.9 278.9L457.0 270.0L457.0 261.1L457.0 252.1L457.0 243.1L457.1 234.2L457.1 225.5L457.1 217.0L457.1 208.8L457.2 200.9L457.2 193.4L457.2 186.3L457.2 179.7L457.3 173.6L457.3 168.1L457.3 163.1L457.3 158.8L457.4 155.1L457.4 152.0L457.4 149.7L457.4 148.0L457.5 147.0L457.5 146.7L457.5 147.1L457.5 148.1L457.6 149.9L457.6 152.3L457.6 155.3L457.6 158.9L457.7 163.1L457.7 167.8L457.7 173.0L457.7 178.7L457.8 184.9L457.8 191.5L457.8 198.4L457.8 205.6L457.9 213.1L457.9 220.7L457.9 228.6L457.9 236.6L458.0 244.6L458.0 252.7L458.0 260.8L458.0 268.8L458.1 276.6L458.1 284.4L458.1 291.9L458.1 299.2L458.2 306.2L458.2 312.8L458.2 319.2L458.2 325.1L458.3 330.7L458.3 335.8L458.3 340.5L458.3 344.6L458.3 348.3L458.4 351.5L458.4 354.1L458.4 356.2L458.4 357.8L458.5 358.8L458.5 359.3L458.5 359.2L458.5 358.6L458.6 357.5L458.6 355.8L458.6 353.6L458.6 351.0L458.7 347.9L458.7 344.3L458.7 340.3L458.7 335.9L458.8 331.1L458.8 325.9L458.8 320.5L458.8 314.7L458.9 308.6L458.9 302.3L458.9 295.8L458.9 289.2L459.0 282.4L459.0 275.4L459.0 268.4L459.0 261.4L459.1 254.3L459.1 247.3L459.1 240.3L459.1 233.4L459.2 226.5L459.2 219.9L459.2 213.3L459.2 207.0L459.3 200.9L459.3 195.0L459.3 189.4L459.3 184.1L459.4 179.1L459.4 174.3L459.4 170.0L459.4 165.9L459.5 162.3L459.5 159.0L459.5 156.0L459.5 153.5L459.6 151.4L459.6 149.6L459.6 148.3L459.6 147.4L459.7 146.8L459.7 146.7L459.7 147.0L459.7 147.6L459.8 148.7L459.8 150.1L459.8 151.9L459.8 154.0L459.9 156.5L459.9 159.3L459.9 162.5L459.9 165.9L460.0 169.6L460.0 173.7L460.0 177.9L460.0 182.4L460.1 187.2L460.1 192.1L460.1 197.2L460.1 202.5L460.2 207.9L460.2 213.5L460.2 219.1L460.2 224.9L460.3 230.7L460.3 236.5L460.3 242.4L460.3 248.3L460.4 254.2L460.4 260.1L460.4 265.9L460.4 271.7L460.4 277.4L460.5 283.0L460.5 288.4L460.5 293.8L460.5 299.0L460.6 304.1L460.6 309.0L460.6 313.7L460.6 318.2L460.7 322.6L460.7 326.7L460.7 330.6L460.7 334.3L460.8 337.7L460.8 340.9L460.8 343.9L460.8 346.6L460.9 349.0L460.9 351.2L460.9 353.2L460.9 354.8L461.0 356.2L461.0 357.4L461.0 358.2L461.0 358.9L461.1 359.2L461.1 359.3L461.1 359.1L461.1 358.7L461.2 358.1L461.2 357.1L461.2 356.0L461.2 354.6L461.3 353.0L461.3 351.2L461.3 349.2L461.3 346.9L461.4 344.5L461.4 341.9L461.4 339.1L461.4 336.1L461.5 332.9L461.5 329.6L461.5 326.2L461.5 322.6L461.6 318.9L461.6 315.1L461.6 311.2L461.6 307.1L461.7 303.0L461.7 298.8L461.7 294.6L461.7 290.3L461.8 285.9L461.8 281.5L461.8 277.0L461.8 272.6L461.9 268.1L461.9 263.6L461.9 259.1L461.9 254.6L462.0 250.2L462.0 245.8L462.0 241.4L462.0 237.0L462.1 232.7L462.1 228.5L462.1 224.3L462.1 220.2L462.2 216.1L462.2 212.2L462.2 208.3L462.2 204.5L462.3 200.8L462.3 197.2L462.3 193.7L462.3 190.3L462.4 187.1L462.4 183.9L462.4 180.9L462.4 178.0L462.4 175.2L462.5 172.5L462.5 170.0L462.5 167.6L462.5 165.3L462.6 163.1L462.6 161.1L462.6 159.2L462.6 157.5L462.7 155.9L462.7 154.4L462.7 153.1L462.7 151.8L462.8 150.8L462.8 149.8L462.8 149.0L462.8 148.3L462.9 147.7L462.9 147.3L462.9 147.0L462.9 146.8L463.0 146.7L463.0 146.7L463.0 146.9L463.0 147.2L463.1 147.6L463.1 148.1L463.1 148.7L463.1 149.4L463.2 150.2L463.2 151.1L463.2 152.1L463.2 153.2L463.3 154.4L463.3 155.6L463.3 157.0L463.3 158.4L463.4 159.9L463.4 161.5L463.4 163.2L463.4 164.9L463.5 166.7L463.5 168.5L463.5 170.4L463.5 172.4L463.6 174.4L463.6 176.5L463.6 178.6L463.6 180.7L463.7 182.9L463.7 185.1L463.7 187.4L463.7 189.7L463.8 192.0L463.8 194.4L463.8 196.7L463.8 199.1L463.9 201.6L463.9 204.0L463.9 206.4L463.9 208.9L464.0 211.3L464.0 213.8L464.0 216.3L464.0 218.8L464.1 221.2L464.1 223.7L464.1 226.2L464.1 228.6L464.2 231.1L464.2 233.6L464.2 236.0L464.2 238.4L464.3 240.8L464.3 243.2L464.3 245.6L464.3 248.0L464.4 250.3L464.4 252.6L464.4 255.0L464.4 257.2L464.5 259.5L464.5 261.7L464.5 263.9L464.5 266.1L464.5 268.3L464.6 270.4L464.6 272.5L464.6 274.6L464.6 276.6L464.7 278.6L464.7 280.6L464.7 282.5L464.7 284.5L464.8 286.3L464.8 288.2L464.8 290.0L464.8 291.8L464.9 293.6L464.9 295.3L464.9 297.0L464.9 298.7L465.0 300.3L465.0 301.9L465.0 303.4L465.0 305.0L465.1 306.5L465.1 307.9L465.1 309.4L465.1 310.8L465.2 312.1L465.2 313.5L465.2 314.8L465.2 316.0L465.3 317.3L465.3 318.5L465.3 319.7L465.3 320.8L465.4 321.9L465.4 323.0L465.4 324.1L465.4 325.1L465.5 326.1L465.5 327.1L465.5 328.1L465.5 329.0L465.6 329.9L465.6 330.8L465.6 331.6L465.6 332.4L465.7 333.2L465.7 334.0L465.7 334.8L465.7 335.5L465.8 336.2L465.8 336.9L465.8 337.5L465.8 338.2L465.9 338.8L465.9 339.4L465.9 340.0L465.9 340.5L466.0 341.1L466.0 341.6L466.0 342.1L466.0 342.6L466.1 343.0L466.1 343.5L466.1 343.9L466.1 344.3L466.2 344.7L466.2 345.1L466.2 345.4L466.2 345.8L466.3 346.1L466.3 346.5L466.3 346.8L466.3 347.1L466.4 347.3L466.4 347.6L466.4 347.9L466.4 348.1L466.5 348.3L466.5 348.6L466.5 348.8L466.5 349.0L466.6 349.2L466.6 349.3L466.6 349.5L466.6 349.7L466.6 349.8L466.7 349.9L466.7 350.1L466.7 350.2L466.7 350.3L466.8 350.4L466.8 350.5L466.8 350.6L466.8 350.6L466.9 350.7L466.9 350.8L466.9 350.8L466.9 350.8L467.0 350.9L467.0 350.9L467.0 350.9L467.0 350.9L467.1 350.9L467.1 350.9L467.1 350.9L467.1 350.8L467.2 350.8L467.2 350.8L467.2 350.7L467.2 350.6L467.3 350.6L467.3 350.5L467.3 350.4L467.3 350.3L467.4 350.2L467.4 350.1L467.4 349.9L467.4 349.8L467.5 349.7L467.5 349.5L467.5 349.3L467.5 349.2L467.6 349.0L467.6 348.8L467.6 348.6L467.6 348.3L467.7 348.1L467.7 347.9L467.7 347.6L467.7 347.3L467.8 347.1L467.8 346.8L467.8 346.5L467.8 346.1L467.9 345.8L467.9 345.4L467.9 345.1L467.9 344.7L468.0 344.3L468.0 343.9L468.0 343.5L468.0 343.0L468.1 342.6L468.1 342.1L468.1 341.6L468.1 341.1L468.2 340.5L468.2 340.0L468.2 339.4L468.2 338.8L468.3 338.2L468.3 337.5L468.3 336.9L468.3 336.2L468.4 335.5L468.4 334.8L468.4 334.0L468.4 333.2L468.5 332.4L468.5 331.6L468.5 330.8L468.5 329.9L468.6 329.0L468.6 328.1L468.6 327.1L468.6 326.1L468.6 325.1L468.7 324.1L468.7 323.0L468.7 321.9L468.7 320.8L468.8 319.7L468.8 318.5L468.8 317.3L468.8 316.0L468.9 314.8L468.9 313.5L468.9 312.1L468.9 310.8L469.0 309.4L469.0 307.9L469.0 306.5L469.0 305.0L469.1 303.4L469.1 301.9L469.1 300.3L469.1 298.7L469.2 297.0L469.2 295.3L469.2 293.6L469.2 291.8L469.3 290.0L469.3 288.2L469.3 286.3L469.3 284.5L469.4 282.5L469.4 280.6L469.4 278.6L469.4 276.6L469.5 274.6L469.5 272.5L469.5 270.4L469.5 268.3L469.6 266.1L469.6 263.9L469.6 261.7L469.6 259.5L469.7 257.2L469.7 255.0L469.7 252.6L469.7 250.3L469.8 248.0L469.8 245.6L469.8 243.2L469.8 240.8L469.9 238.4L469.9 236.0L469.9 233.6L469.9 231.1L470.0 228.6L470.0 226.2L470.0 223.7L470.0 221.2L470.1 218.8L470.1 216.3L470.1 213.8L470.1 211.3L470.2 208.9L470.2 206.4L470.2 204.0L470.2 201.6L470.3 199.1L470.3 196.7L470.3 194.4L470.3 192.0L470.4 189.7L470.4 187.4L470.4 185.1L470.4 182.9L470.5 180.7L470.5 178.6L470.5 176.5L470.5 174.4L470.6 172.4L470.6 170.4L470.6 168.5L470.6 166.7L470.7 164.9L470.7 163.2L470.7 161.5L470.7 159.9L470.7 158.4L470.8 157.0L470.8 155.6L470.8 154.4L470.8 153.2L470.9 152.1L470.9 151.1L470.9 150.2L470.9 149.4L471.0 148.7L471.0 148.1L471.0 147.6L471.0 147.2L471.1 146.9L471.1 146.7L471.1 146.7L471.1 146.8L471.2 147.0L471.2 147.3L471.2 147.7L471.2 148.3L471.3 149.0L471.3 149.8L471.3 150.8L471.3 151.8L471.4 153.1L471.4 154.4L471.4 155.9L471.4 157.5L471.5 159.2L471.5 161.1L471.5 163.1L471.5 165.3L471.6 167.6L471.6 170.0L471.6 172.5L471.6 175.2L471.7 178.0L471.7 180.9L471.7 183.9L471.7 187.1L471.8 190.3L471.8 193.7L471.8 197.2L471.8 200.8L471.9 204.5L471.9 208.3L471.9 212.2L471.9 216.1L472.0 220.2L472.0 224.3L472.0 228.5L472.0 232.7L472.1 237.0L472.1 241.4L472.1 245.8L472.1 250.2L472.2 254.6L472.2 259.1L472.2 263.6L472.2 268.1L472.3 272.6L472.3 277.0L472.3 281.5L472.3 285.9L472.4 290.3L472.4 294.6L472.4 298.8L472.4 303.0L472.5 307.1L472.5 311.2L472.5 315.1L472.5 318.9L472.6 322.6L472.6 326.2L472.6 329.6L472.6 332.9L472.7 336.1L472.7 339.1L472.7 341.9L472.7 344.5L472.7 346.9L472.8 349.2L472.8 351.2L472.8 353.0L472.8 354.6L472.9 356.0L472.9 357.1L472.9 358.1L472.9 358.7L473.0 359.1L473.0 359.3L473.0 359.2L473.0 358.9L473.1 358.2L473.1 357.4L473.1 356.2L473.1 354.8L473.2 353.2L473.2 351.2L473.2 349.0L473.2 346.6L473.3 343.9L473.3 340.9L473.3 337.7L473.3 334.3L473.4 330.6L473.4 326.7L473.4 322.6L473.4 318.2L473.5 313.7L473.5 309.0L473.5 304.1L473.5 299.0L473.6 293.8L473.6 288.4L473.6 283.0L473.6 277.4L473.7 271.7L473.7 265.9L473.7 260.1L473.7 254.2L473.8 248.3L473.8 242.4L473.8 236.5L473.8 230.7L473.9 224.9L473.9 219.1L473.9 213.5L473.9 207.9L474.0 202.5L474.0 197.2L474.0 192.1L474.0 187.2L474.1 182.4L474.1 177.9L474.1 173.7L474.1 169.6L474.2 165.9L474.2 162.5L474.2 159.3L474.2 156.5L474.3 154.0L474.3 151.9L474.3 150.1L474.3 148.7L474.4 147.6L474.4 147.0L474.4 146.7L474.4 146.8L474.5 147.4L474.5 148.3L474.5 149.6L474.5 151.4L474.6 153.5L474.6 156.0L474.6 159.0L474.6 162.3L474.7 165.9L474.7 170.0L474.7 174.3L474.7 179.1L474.8 184.1L474.8 189.4L474.8 195.0L474.8 200.9L474.8 207.0L474.9 213.3L474.9 219.9L474.9 226.5L474.9 233.4L475.0 240.3L475.0 247.3L475.0 254.3L475.0 261.4L475.1 268.4L475.1 275.4L475.1 282.4L475.1 289.2L475.2 295.8L475.2 302.3L475.2 308.6L475.2 314.7L475.3 320.5L475.3 325.9L475.3 331.1L475.3 335.9L475.4 340.3L475.4 344.3L475.4 347.9L475.4 351.0L475.5 353.6L475.5 355.8L475.5 357.5L475.5 358.6L475.6 359.2L475.6 359.3L475.6 358.8L475.6 357.8L475.7 356.2L475.7 354.1L475.7 351.5L475.7 348.3L475.8 344.6L475.8 340.5L475.8 335.8L475.8 330.7L475.9 325.1L475.9 319.2L475.9 312.8L475.9 306.2L476.0 299.2L476.0 291.9L476.0 284.4L476.0 276.6L476.1 268.8L476.1 260.8L476.1 252.7L476.1 244.6L476.2 236.6L476.2 228.6L476.2 220.7L476.2 213.1L476.3 205.6L476.3 198.4L476.3 191.5L476.3 184.9L476.4 178.7L476.4 173.0L476.4 167.8L476.4 163.1L476.5 158.9L476.5 155.3L476.5 152.3L476.5 149.9L476.6 148.1L476.6 147.1L476.6 146.7L476.6 147.0L476.7 148.0L476.7 149.7L476.7 152.0L476.7 155.1L476.8 158.8L476.8 163.1L476.8 168.1L476.8 173.6L476.8 179.7L476.9 186.3L476.9 193.4L476.9 200.9L476.9 208.8L477.0 217.0L477.0 225.5L477.0 234.2L477.0 243.1L477.1 252.1L477.1 261.1L477.1 270.0L477.1 278.9L477.2 287.6L477.2 296.0L477.2 304.2L477.2 312.0L477.3 319.4L477.3 326.3L477.3 332.7L477.3 338.5L477.4 343.7L477.4 348.2L477.4 352.0L477.4 355.0L477.5 357.2L477.5 358.7L477.5 359.3L477.5 359.1L477.6 358.0L477.6 356.1L477.6 353.4L477.6 349.9L477.7 345.5L477.7 340.5L477.7 334.7L477.7 328.2L477.8 321.0L477.8 313.3L477.8 305.1L477.8 296.4L477.9 287.4L477.9 278.0L477.9 268.4L477.9 258.6L478.0 248.8L478.0 239.0L478.0 229.3L478.0 219.7L478.1 210.4L478.1 201.5L478.1 193.0L478.1 185.0L478.2 177.6L478.2 170.9L478.2 164.9L478.2 159.6L478.3 155.2L478.3 151.7L478.3 149.1L478.3 147.4L478.4 146.7L478.4 147.0L478.4 148.3L478.4 150.6L478.5 153.8L478.5 158.0L478.5 163.1L478.5 169.0L478.6 175.8L478.6 183.4L478.6 191.6L478.6 200.5L478.7 209.8L478.7 219.7L478.7 229.9L478.7 240.3L478.8 250.9L478.8 261.5L478.8 272.1L478.8 282.5L478.9 292.6L478.9 302.4L478.9 311.6L478.9 320.3L478.9 328.3L479.0 335.6L479.0 341.9L479.0 347.4L479.0 351.9L479.1 355.4L479.1 357.8L479.1 359.1L479.1 359.2L479.2 358.2L479.2 356.1L479.2 352.8L479.2 348.4L479.3 343.0L479.3 336.6L479.3 329.2L479.3 321.0L479.4 312.0L479.4 302.4L479.4 292.1L479.4 281.4L479.5 270.4L479.5 259.1L479.5 247.7L479.5 236.4L479.6 225.3L479.6 214.4L479.6 204.0L479.6 194.1L479.7 184.9L479.7 176.5L479.7 169.0L479.7 162.5L479.8 157.0L479.8 152.7L479.8 149.6L479.8 147.7L479.9 147.1L479.9 147.8L479.9 149.8L479.9 153.1L480.0 157.6L480.0 163.3L480.0 170.1L480.0 178.0L480.1 186.8L480.1 196.5L480.1 206.9L480.1 217.9L480.2 229.4L480.2 241.2L480.2 253.2L480.2 265.2L480.3 277.1L480.3 288.6L480.3 299.7L480.3 310.3L480.4 320.0L480.4 328.9L480.4 336.8L480.4 343.6L480.5 349.2L480.5 353.5L480.5 356.4L480.5 357.9L480.6 358.0L480.6 356.7L480.6 353.9L480.6 349.7L480.7 344.2L480.7 337.4L480.7 329.4L480.7 320.3L480.8 310.2L480.8 299.4L480.8 287.8L480.8 275.7L480.9 263.4L480.9 250.8L480.9 238.2L480.9 225.9L481.0 213.9L481.0 202.5L481.0 191.8L481.0 182.1L481.0 173.3L481.1 165.7L481.1 159.5L481.1 154.6L481.1 151.2L481.2 149.3L481.2 149.0L481.2 150.3L481.2 153.2L481.3 157.6L481.3 163.4L481.3 170.7L481.3 179.3L481.4 189.0L481.4 199.7L481.4 211.3L481.4 223.5L481.5 236.2L481.5 249.2L481.5 262.3L481.5 275.2L481.6 287.8L481.6 299.9L481.6 311.2L481.6 321.5L481.7 330.7L481.7 338.7L481.7 345.3L481.7 350.3L481.8 353.7L481.8 355.5L481.8 355.5L481.8 353.8L481.9 350.5L481.9 345.4L481.9 338.8L481.9 330.7L482.0 321.3L482.0 310.7L482.0 299.1L482.0 286.7L482.1 273.7L482.1 260.4L482.1 246.9L482.1 233.5L482.2 220.4L482.2 207.9L482.2 196.2L482.2 185.5L482.3 176.0L482.3 167.9L482.3 161.3L482.3 156.4L482.4 153.2L482.4 151.9L482.4 152.4L482.4 154.7L482.5 158.9L482.5 164.8L482.5 172.4L482.5 181.4L482.6 191.8L482.6 203.4L482.6 215.8L482.6 229.0L482.7 242.7L482.7 256.6L482.7 270.4L482.7 283.8L482.8 296.7L482.8 308.7L482.8 319.7L482.8 329.3L482.9 337.5L482.9 344.0L482.9 348.7L482.9 351.5L483.0 352.4L483.0 351.3L483.0 348.2L483.0 343.2L483.0 336.4L483.1 327.9L483.1 317.9L483.1 306.6L483.1 294.2L483.2 280.9L483.2 267.0L483.2 252.9L483.2 238.8L483.3 224.9L483.3 211.7L483.3 199.3L483.3 188.0L483.4 178.1L483.4 169.8L483.4 163.3L483.4 158.7L483.5 156.1L483.5 155.6L483.5 157.1L483.5 160.8L483.6 166.4L483.6 174.0L483.6 183.2L483.6 194.0L483.7 206.1L483.7 219.2L483.7 233.1L483.7 247.4L483.8 261.8L483.8 276.0L483.8 289.7L483.8 302.6L483.9 314.3L483.9 324.7L483.9 333.4L483.9 340.2L484.0 345.1L484.0 347.9L484.0 348.4L484.0 346.7L484.1 342.9L484.1 337.0L484.1 329.1L484.1 319.4L484.2 308.1L484.2 295.6L484.2 282.0L484.2 267.8L484.3 253.2L484.3 238.6L484.3 224.4L484.3 210.9L484.4 198.4L484.4 187.2L484.4 177.7L484.4 170.0L484.5 164.3L484.5 160.8L484.5 159.7L484.5 160.8L484.6 164.2L484.6 169.8L484.6 177.6L484.6 187.2L484.7 198.4L484.7 211.1L484.7 224.8L484.7 239.2L484.8 253.9L484.8 268.6L484.8 282.9L484.8 296.4L484.9 308.8L484.9 319.7L484.9 328.9L484.9 336.0L485.0 341.0L485.0 343.7L485.0 343.9L485.0 341.8L485.1 337.3L485.1 330.5L485.1 321.7L485.1 311.0L485.1 298.8L485.2 285.3L485.2 271.0L485.2 256.2L485.2 241.4L485.3 226.8L485.3 213.0L485.3 200.4L485.3 189.2L485.4 179.7L485.4 172.4L485.4 167.3L485.4 164.6L485.5 164.4L485.5 166.7L485.5 171.4L485.5 178.5L485.6 187.6L485.6 198.7L485.6 211.2L485.6 225.0L485.7 239.6L485.7 254.5L485.7 269.3L485.7 283.7L485.8 297.1L485.8 309.3L485.8 319.7L485.8 328.2L485.9 334.5L485.9 338.3L485.9 339.5L485.9 338.2L486.0 334.3L486.0 328.0L486.0 319.4L486.0 308.8L486.1 296.5L486.1 283.0L486.1 268.5L486.1 253.6L486.2 238.6L486.2 224.2L486.2 210.7L486.2 198.5L486.3 188.0L486.3 179.6L486.3 173.5L486.3 169.9L486.4 168.9L486.4 170.6L486.4 174.9L486.4 181.7L486.5 190.8L486.5 201.8L486.5 214.5L486.5 228.4L486.6 243.1L486.6 258.0L486.6 272.8L486.6 286.9L486.7 299.9L486.7 311.3L486.7 320.7L486.7 327.9L486.8 332.6L486.8 334.6L486.8 334.0L486.8 330.6L486.9 324.5L486.9 316.1L486.9 305.6L486.9 293.3L487.0 279.7L487.0 265.2L487.0 250.3L487.0 235.5L487.1 221.3L487.1 208.3L487.1 196.9L487.1 187.4L487.1 180.2L487.2 175.6L487.2 173.7L487.2 174.6L487.2 178.3L487.3 184.6L487.3 193.4L487.3 204.2L487.3 216.8L487.4 230.6L487.4 245.2L487.4 260.0L487.4 274.6L487.5 288.3L487.5 300.8L487.5 311.4L487.5 319.9L487.6 325.9L487.6 329.2L487.6 329.7L487.6 327.4L487.7 322.3L487.7 314.6L487.7 304.6L487.7 292.7L487.8 279.4L487.8 265.1L487.8 250.3L487.8 235.8L487.9 221.9L487.9 209.2L487.9 198.2L487.9 189.4L488.0 183.0L488.0 179.4L488.0 178.6L488.0 180.8L488.1 185.7L488.1 193.2L488.1 203.1L488.1 214.9L488.2 228.2L488.2 242.4L488.2 257.1L488.2 271.5L488.3 285.1L488.3 297.4L488.3 307.9L488.3 316.1L488.4 321.8L488.4 324.7L488.4 324.6L488.4 321.6L488.5 315.9L488.5 307.5L488.5 297.0L488.5 284.7L488.6 271.0L488.6 256.7L488.6 242.3L488.6 228.4L488.7 215.5L488.7 204.2L488.7 195.1L488.7 188.4L488.8 184.5L488.8 183.4L488.8 185.4L488.8 190.2L488.9 197.8L488.9 207.6L488.9 219.4L488.9 232.6L489.0 246.7L489.0 260.9L489.0 274.8L489.0 287.7L489.1 299.0L489.1 308.3L489.1 315.1L489.1 319.1L489.2 320.2L489.2 318.2L489.2 313.4L489.2 305.9L489.2 296.1L489.3 284.3L489.3 271.2L489.3 257.3L489.3 243.2L489.4 229.6L489.4 217.2L489.4 206.4L489.4 197.8L489.5 191.8L489.5 188.7L489.5 188.5L489.5 191.3L489.6 197.0L489.6 205.3L489.6 215.8L489.6 227.9L489.7 241.3L489.7 255.1L489.7 268.8L489.7 281.7L489.8 293.2L489.8 302.7L489.8 309.7L489.8 314.1L489.9 315.5L489.9 313.8L489.9 309.2L489.9 301.9L490.0 292.2L490.0 280.7L490.0 267.9L490.0 254.3L490.1 240.8L490.1 227.9L490.1 216.3L490.1 206.6L490.2 199.2L490.2 194.6L490.2 192.9L490.2 194.2L490.3 198.5L490.3 205.5L490.3 214.9L490.3 226.2L490.4 238.9L490.4 252.1L490.4 265.4L490.4 278.0L490.5 289.2L490.5 298.6L490.5 305.5L490.5 309.6L490.6 310.8L490.6 309.0L490.6 304.2L490.6 296.8L490.7 287.1L490.7 275.6L490.7 263.0L490.7 249.9L490.8 237.0L490.8 225.1L490.8 214.7L490.8 206.4L490.9 200.6L490.9 197.7L490.9 197.9L490.9 201.0L491.0 206.9L491.0 215.3L491.0 225.8L491.0 237.7L491.1 250.4L491.1 263.1L491.1 275.3L491.1 286.1L491.2 295.1L491.2 301.6L491.2 305.4L491.2 306.3L491.2 304.1L491.3 299.1L491.3 291.5L491.3 281.7L491.3 270.3L491.4 258.1L491.4 245.5L491.4 233.5L491.4 222.7L491.5 213.7L491.5 206.9L491.5 202.9L491.5 201.9L491.6 203.8L491.6 208.6L491.6 215.9L491.6 225.4L491.7 236.5L491.7 248.5L491.7 260.7L491.7 272.4L491.8 282.9L491.8 291.5L491.8 297.7L491.8 301.3L491.9 301.9L491.9 299.6L491.9 294.4L491.9 286.8L492.0 277.1L492.0 266.0L492.0 254.2L492.0 242.4L492.1 231.3L492.1 221.6L492.1 213.9L492.1 208.7L492.2 206.2L492.2 206.7L492.2 210.1L492.2 216.1L492.3 224.5L492.3 234.6L492.3 245.7L492.3 257.3L492.4 268.6L492.4 278.7L492.4 287.2L492.4 293.4L492.5 297.0L492.5 297.8L492.5 295.6L492.5 290.7L492.6 283.4L492.6 274.1L492.6 263.6L492.6 252.4L492.7 241.3L492.7 231.0L492.7 222.3L492.7 215.6L492.8 211.5L492.8 210.1L492.8 211.7L492.8 215.9L492.9 222.7L492.9 231.4L492.9 241.5L492.9 252.3L493.0 263.2L493.0 273.2L493.0 281.8L493.0 288.4L493.1 292.5L493.1 293.9L493.1 292.5L493.1 288.3L493.2 281.7L493.2 273.2L493.2 263.4L493.2 252.9L493.3 242.4L493.3 232.8L493.3 224.7L493.3 218.6L493.3 215.0L493.4 214.1L493.4 215.9L493.4 220.4L493.4 227.2L493.5 235.8L493.5 245.6L493.5 255.8L493.5 265.7L493.6 274.7L493.6 282.0L493.6 287.2L493.6 289.8L493.7 289.7L493.7 287.0L493.7 281.7L493.7 274.4L493.8 265.6L493.8 255.9L493.8 246.0L493.8 236.8L493.9 228.8L493.9 222.7L493.9 218.9L493.9 217.7L494.0 219.2L494.0 223.2L494.0 229.4L494.0 237.4L494.1 246.5L494.1 256.0L494.1 265.2L494.1 273.5L494.2 280.0L494.2 284.5L494.2 286.5L494.2 285.8L494.3 282.6L494.3 277.2L494.3 269.9L494.3 261.3L494.4 252.2L494.4 243.2L494.4 235.0L494.4 228.3L494.5 223.7L494.5 221.4L494.5 221.6L494.5 224.4L494.6 229.4L494.6 236.3L494.6 244.4L494.6 253.2L494.7 261.9L494.7 269.8L494.7 276.2L494.7 280.8L494.8 283.0L494.8 282.7L494.8 280.0L494.8 275.1L494.9 268.4L494.9 260.5L494.9 252.1L494.9 243.8L495.0 236.3L495.0 230.3L495.0 226.3L495.0 224.5L495.1 225.2L495.1 228.2L495.1 233.2L495.1 239.9L495.2 247.7L495.2 255.8L495.2 263.6L495.2 270.4L495.3 275.7L495.3 279.0L495.3 280.0L495.3 278.6L495.4 275.0L495.4 269.6L495.4 262.8L495.4 255.1L495.4 247.4L495.5 240.2L495.5 234.2L495.5 230.0L495.5 227.8L495.6 227.9L495.6 230.2L495.6 234.5L495.6 240.4L495.7 247.4L495.7 254.8L495.7 262.0L495.7 268.3L495.8 273.2L495.8 276.1L495.8 277.0L495.8 275.6L495.9 272.2L495.9 267.1L495.9 260.7L495.9 253.7L496.0 246.7L496.0 240.3L496.0 235.2L496.0 231.8L496.1 230.5L496.1 231.2L496.1 234.0L496.1 238.5L496.2 244.3L496.2 250.9L496.2 257.6L496.2 263.8L496.3 268.9L496.3 272.5L496.3 274.1L496.3 273.7L496.4 271.3L496.4 267.2L496.4 261.7L496.4 255.5L496.5 249.1L496.5 243.2L496.5 238.2L496.5 234.8L496.6 233.2L496.6 233.6L496.6 235.8L496.6 239.8L496.7 245.0L496.7 250.9L496.7 256.9L496.7 262.5L496.8 267.1L496.8 270.2L496.8 271.6L496.8 271.0L496.9 268.7L496.9 264.8L496.9 259.7L496.9 254.1L497.0 248.4L497.0 243.2L497.0 239.1L497.0 236.5L497.1 235.6L497.1 236.5L497.1 239.1L497.1 243.1L497.2 248.1L497.2 253.5L497.2 258.8L497.2 263.4L497.3 266.9L497.3 268.8L497.3 269.1L497.3 267.7L497.4 264.7L497.4 260.5L497.4 255.6L497.4 250.5L497.4 245.7L497.5 241.8L497.5 239.1L497.5 238.0L497.5 238.5L497.6 240.5L497.6 243.9L497.6 248.2L497.6 253.0L497.7 257.7L497.7 261.8L497.7 264.9L497.7 266.7L497.8 266.9L497.8 265.6L497.8 262.9L497.8 259.2L497.9 254.8L497.9 250.3L497.9 246.2L497.9 242.9L498.0 240.8L498.0 240.0L498.0 240.8L498.0 243.0L498.1 246.2L498.1 250.1L498.1 254.4L498.1 258.4L498.2 261.7L498.2 264.0L498.2 264.9L498.2 264.5L498.3 262.8L498.3 259.9L498.3 256.4L498.3 252.4L498.4 248.6L498.4 245.4L498.4 243.1L498.4 242.1L498.5 242.3L498.5 243.8L498.5 246.3L498.5 249.6L498.6 253.2L498.6 256.8L498.6 259.8L498.6 262.0L498.7 263.0L498.7 262.9L498.7 261.5L498.7 259.1L498.8 256.1L498.8 252.7L498.8 249.4L498.8 246.7L498.9 244.7L498.9 243.8L498.9 244.0L498.9 245.4L499.0 247.6L499.0 250.5L499.0 253.6L499.0 256.6L499.1 259.1L499.1 260.8L499.1 261.4L499.1 261.0L499.2 259.6L499.2 257.4L499.2 254.7L499.2 251.8L499.3 249.2L499.3 247.0L499.3 245.7L499.3 245.3L499.4 246.0L499.4 247.5L499.4 249.6L499.4 252.2L499.5 254.8L499.5 257.1L499.5 258.9L499.5 259.8L499.5 259.8L499.6 259.0L499.6 257.3L499.6 255.2L499.6 252.8L499.7 250.5L499.7 248.6L499.7 247.3L499.7 246.8L499.8 247.1L499.8 248.2L499.8 249.9L499.8 252.0L499.9 254.2L499.9 256.2L499.9 257.6L499.9 258.5L500.0 258.5L500.0 257.8L500.0 256.5L500.0 254.7L500.1 252.8L500.1 250.9L500.1 249.4L500.1 248.4L500.2 248.0L500.2 248.4L500.2 249.4L500.2 250.8L500.3 252.6L500.3 254.3L500.3 255.8L500.3 256.9L500.4 257.4L500.4 257.3L500.4 256.5L500.4 255.3L500.5 253.8L500.5 252.3L500.5 250.8L500.5 249.8L500.6 249.2L500.6 249.2L500.6 249.7L500.6 250.7L500.7 252.0L500.7 253.4L500.7 254.7L500.7 255.7L500.8 256.3L500.8 256.4L500.8 256.0L500.8 255.1L500.9 254.0L500.9 252.8L500.9 251.7L500.9 250.8L501.0 250.2L501.0 250.1L501.0 250.4L501.0 251.1L501.1 252.0L501.1 253.1L501.1 254.1L501.1 254.9L501.2 255.4L501.2 255.5L501.2 255.2L501.2 254.6L501.3 253.8L501.3 252.9L501.3 252.0L501.3 251.4L501.4 251.0L501.4 250.9L501.4 251.2L501.4 251.7L501.5 252.4L501.5 253.2L501.5 253.9L501.5 254.4L501.5 254.7L501.6 254.7L501.6 254.5L501.6 254.0L501.6 253.4L501.7 252.8L501.7 252.2L501.7 251.8L501.7 251.6L501.8 251.6L501.8 251.9L501.8 252.3L501.8 252.8L501.9 253.3L501.9 253.8L501.9 254.1L501.9 254.2L502.0 254.1L502.0 253.8L502.0 253.5L502.0 253.0L502.1 252.6L502.1 252.3L502.1 252.1L502.1 252.1L502.2 252.2L502.2 252.5L502.2 252.8L502.2 253.1L502.3 253.4L502.3 253.6L502.3 253.7L502.3 253.7L502.4 253.5L502.4 253.3L502.4 253.1L502.4 252.8L502.5 252.6L502.5 252.5L502.5 252.5L502.5 252.6L502.6 252.7L502.6 252.9L502.6 253.0L502.6 253.2L502.7 253.3L502.7 253.4L502.7 253.3L502.7 253.3L502.8 253.1L502.8 253.0L502.8 252.9L502.8 252.8L502.9 252.8L502.9 252.8L502.9 252.8L502.9 252.9L503.0 253.0L503.0 253.0L503.0 253.1L503.0 253.1L503.1 253.1L503.1 253.1L503.1 253.1L503.1 253.0L503.2 253.0L503.2 253.0L503.2 252.9L503.2 252.9L503.3 252.9L503.3 253.0L503.3 253.0L503.3 253.0L503.4 253.0L503.4 253.0L503.4 253.0L503.4 253.0L503.5 253.0L503.5 253.0L503.5 253.0L503.5 253.0L503.6 253.0L503.6 253.0L503.6 253.0L503.6 253.0" stroke="#00ffff" stroke-width=".5" fill="none" stroke-linejoin="round"/>
<path d="M199.50 125.4V380.0H589.10" stroke="#17191b" stroke-width=".8" fill="none"/>
<path d="M207.20 380.0v1.2M231.90 380.0v1.2M256.60 380.0v1.2M281.30 380.0v1.2M306.00 380.0v1.2M330.70 380.0v1.2M355.40 380.0v1.2M380.10 380.0v1.2M404.80 380.0v1.2M429.50 380.0v1.2M454.20 380.0v1.2M478.90 380.0v1.2M503.60 380.0v1.2M528.30 380.0v1.2M553.00 380.0v1.2M577.70 380.0v1.2M199.50 359.30h-1.2M199.50 338.04h-1.2M199.50 316.78h-1.2M199.50 295.52h-1.2M199.50 274.26h-1.2M199.50 253.00h-1.2M199.50 231.74h-1.2M199.50 210.48h-1.2M199.50 189.22h-1.2M199.50 167.96h-1.2M199.50 146.70h-1.2M199.50 125.44h-1.2" stroke="#17191b" stroke-width=".6" fill="none"/>
<path d="M625.17 124.2V380.0M649.90 124.2V380.0M674.63 124.2V380.0M699.36 124.2V380.0M724.09 124.2V380.0M748.82 124.2V380.0M773.55 124.2V380.0M798.28 124.2V380.0M823.01 124.2V380.0M847.74 124.2V380.0M872.47 124.2V380.0M897.20 124.2V380.0M921.93 124.2V380.0M946.66 124.2V380.0M971.39 124.2V380.0M996.12 124.2V380.0M617.50 359.30H1007.10M617.50 338.04H1007.10M617.50 316.78H1007.10M617.50 295.52H1007.10M617.50 274.26H1007.10M617.50 253.00H1007.10M617.50 231.74H1007.10M617.50 210.48H1007.10M617.50 189.22H1007.10M617.50 167.96H1007.10M617.50 146.70H1007.10M617.50 125.44H1007.10" stroke="#444a4f" stroke-width=".7" fill="none"/>
<path d="M675.1 253.0H724.1M798.3 253.0H847.7M921.9 253.0H971.4" stroke="#ff00ff" stroke-width="1.3" opacity=".36" fill="none"/>
<path d="M649.9 253.0L649.9 357.4L649.9 335.3L649.9 293.5L650.0 242.2L650.0 193.5L650.0 159.0L650.0 146.7L650.1 159.4L650.1 193.9L650.1 242.2L650.1 292.8L650.2 334.2L650.2 356.8L650.2 355.5L650.2 330.8L650.3 288.5L650.3 238.1L650.3 191.2L650.3 158.3L650.4 146.7L650.4 158.9L650.4 191.9L650.4 238.5L650.5 288.2L650.5 330.0L650.5 354.9L650.5 357.5L650.6 337.4L650.6 299.1L650.6 250.9L650.6 203.2L650.7 166.3L650.7 147.9L650.7 151.9L650.7 177.2L650.8 218.4L650.8 266.8L650.8 312.3L650.8 345.3L650.9 359.1L650.9 351.0L650.9 322.8L650.9 280.4L651.0 232.4L651.0 188.8L651.0 158.2L651.0 146.7L651.1 156.6L651.1 185.7L651.1 228.2L651.1 275.5L651.2 318.2L651.2 348.1L651.2 359.3L651.2 349.8L651.3 321.5L651.3 280.1L651.3 233.5L651.3 190.8L651.4 160.0L651.4 146.9L651.4 154.0L651.4 179.7L651.5 219.0L651.5 264.7L651.5 308.1L651.5 341.2L651.6 357.9L651.6 355.4L651.6 334.2L651.6 298.2L651.7 254.1L651.7 209.9L651.7 173.6L651.7 151.5L651.8 147.5L651.8 162.3L651.8 193.0L651.8 234.2L651.9 278.6L651.9 318.5L651.9 346.9L651.9 359.0L652.0 352.9L652.0 329.7L652.0 293.5L652.0 250.5L652.1 208.0L652.1 173.2L652.1 151.7L652.1 147.2L652.2 160.3L652.2 188.6L652.2 227.4L652.2 270.4L652.3 310.4L652.3 341.0L652.3 357.4L652.3 356.9L652.4 339.9L652.4 309.0L652.4 269.4L652.4 227.3L652.4 189.3L652.5 161.3L652.5 147.6L652.5 150.3L652.5 168.8L652.6 200.2L652.6 239.5L652.6 280.8L652.6 317.8L652.7 345.0L652.7 358.3L652.7 355.9L652.7 338.3L652.8 308.2L652.8 270.0L652.8 229.4L652.8 192.3L652.9 164.1L652.9 148.8L652.9 148.4L652.9 163.0L653.0 190.2L653.0 226.3L653.0 266.0L653.0 303.9L653.1 334.5L653.1 353.8L653.1 359.2L653.1 350.0L653.2 327.6L653.2 295.1L653.2 257.1L653.2 218.6L653.3 184.7L653.3 160.1L653.3 147.8L653.3 149.3L653.4 164.5L653.4 191.1L653.4 225.6L653.4 263.7L653.5 300.2L653.5 330.7L653.5 351.2L653.5 359.2L653.6 353.9L653.6 336.0L653.6 307.9L653.6 273.0L653.7 235.8L653.7 200.7L653.7 172.1L653.7 153.4L653.8 146.7L653.8 152.8L653.8 170.7L653.8 198.4L653.9 232.4L653.9 268.8L653.9 303.2L653.9 331.7L654.0 351.1L654.0 359.1L654.0 355.1L654.0 339.5L654.1 314.2L654.1 282.1L654.1 246.8L654.1 212.3L654.2 182.4L654.2 160.4L654.2 148.4L654.2 147.9L654.3 158.7L654.3 179.5L654.3 208.1L654.3 241.4L654.4 275.9L654.4 307.8L654.4 333.9L654.4 351.6L654.5 359.1L654.5 355.7L654.5 341.9L654.5 319.1L654.6 289.7L654.6 256.7L654.6 223.5L654.6 193.3L654.7 169.0L654.7 153.0L654.7 146.8L654.7 150.8L654.8 164.6L654.8 186.8L654.8 215.2L654.8 247.1L654.9 279.4L654.9 309.2L654.9 333.7L654.9 350.7L654.9 358.8L655.0 357.2L655.0 346.2L655.0 326.9L655.0 301.1L655.1 271.1L655.1 239.6L655.1 209.4L655.1 183.0L655.2 162.8L655.2 150.4L655.2 146.7L655.2 152.1L655.3 165.9L655.3 187.0L655.3 213.5L655.3 243.2L655.4 273.5L655.4 302.1L655.4 326.7L655.4 345.2L655.5 356.3L655.5 359.2L655.5 353.7L655.5 340.3L655.6 320.2L655.6 295.0L655.6 266.6L655.6 237.3L655.7 209.3L655.7 184.6L655.7 165.2L655.7 152.3L655.8 146.9L655.8 149.2L655.8 159.1L655.8 175.7L655.9 197.8L655.9 223.8L655.9 251.7L655.9 279.6L656.0 305.6L656.0 327.8L656.0 344.9L656.0 355.6L656.1 359.3L656.1 355.9L656.1 345.6L656.1 329.2L656.2 307.9L656.2 283.1L656.2 256.4L656.2 229.6L656.3 204.4L656.3 182.3L656.3 164.8L656.3 152.9L656.4 147.2L656.4 148.0L656.4 155.2L656.4 168.3L656.5 186.5L656.5 208.5L656.5 233.1L656.5 258.8L656.6 284.1L656.6 307.4L656.6 327.5L656.6 343.4L656.7 354.0L656.7 359.0L656.7 358.0L656.7 351.3L656.8 339.2L656.8 322.5L656.8 302.1L656.8 279.1L656.9 254.9L656.9 230.7L656.9 207.7L656.9 187.2L657.0 170.1L657.0 157.3L657.0 149.4L657.0 146.7L657.1 149.3L657.1 156.9L657.1 169.2L657.1 185.5L657.2 205.0L657.2 226.7L657.2 249.5L657.2 272.4L657.3 294.2L657.3 314.1L657.3 331.2L657.3 344.6L657.4 353.9L657.4 358.7L657.4 358.8L657.4 354.3L657.5 345.5L657.5 332.7L657.5 316.7L657.5 298.0L657.5 277.6L657.6 256.2L657.6 234.8L657.6 214.3L657.6 195.4L657.7 178.8L657.7 165.3L657.7 155.2L657.7 149.0L657.8 146.7L657.8 148.5L657.8 154.2L657.8 163.5L657.9 176.1L657.9 191.4L657.9 208.8L657.9 227.7L658.0 247.5L658.0 267.3L658.0 286.5L658.0 304.5L658.1 320.7L658.1 334.5L658.1 345.5L658.1 353.4L658.2 358.0L658.2 359.3L658.2 357.1L658.2 351.6L658.3 343.2L658.3 331.9L658.3 318.3L658.3 302.9L658.4 286.0L658.4 268.2L658.4 250.1L658.4 232.2L658.5 214.9L658.5 198.9L658.5 184.4L658.5 171.9L658.6 161.7L658.6 154.0L658.6 149.0L658.6 146.8L658.7 147.4L658.7 150.7L658.7 156.5L658.7 164.8L658.8 175.2L658.8 187.5L658.8 201.3L658.8 216.2L658.9 231.9L658.9 248.1L658.9 264.2L658.9 280.0L659.0 295.1L659.0 309.1L659.0 321.8L659.0 333.0L659.1 342.3L659.1 349.7L659.1 355.1L659.1 358.3L659.2 359.3L659.2 358.2L659.2 355.0L659.2 349.8L659.3 342.8L659.3 334.2L659.3 324.1L659.3 312.7L659.4 300.3L659.4 287.1L659.4 273.5L659.4 259.6L659.5 245.6L659.5 231.9L659.5 218.6L659.5 206.0L659.6 194.3L659.6 183.6L659.6 174.0L659.6 165.8L659.7 159.0L659.7 153.6L659.7 149.8L659.7 147.5L659.8 146.7L659.8 147.5L659.8 149.7L659.8 153.3L659.9 158.2L659.9 164.4L659.9 171.7L659.9 179.9L660.0 189.1L660.0 198.9L660.0 209.3L660.0 220.2L660.0 231.3L660.1 242.6L660.1 253.9L660.1 265.2L660.1 276.1L660.2 286.8L660.2 297.0L660.2 306.6L660.2 315.6L660.3 323.8L660.3 331.3L660.3 338.0L660.3 343.8L660.4 348.7L660.4 352.7L660.4 355.7L660.4 357.8L660.5 359.0L660.5 359.3L660.5 358.7L660.5 357.2L660.6 355.0L660.6 352.0L660.6 348.2L660.6 343.8L660.7 338.8L660.7 333.2L660.7 327.2L660.7 320.7L660.8 313.8L660.8 306.6L660.8 299.2L660.8 291.5L660.9 283.8L660.9 275.9L660.9 268.0L660.9 260.1L661.0 252.3L661.0 244.6L661.0 237.0L661.0 229.6L661.1 222.4L661.1 215.5L661.1 208.8L661.1 202.4L661.2 196.4L661.2 190.6L661.2 185.2L661.2 180.2L661.3 175.5L661.3 171.2L661.3 167.2L661.3 163.7L661.4 160.4L661.4 157.6L661.4 155.1L661.4 152.9L661.5 151.1L661.5 149.6L661.5 148.5L661.5 147.6L661.6 147.0L661.6 146.7L661.6 146.7L661.6 146.9L661.7 147.4L661.7 148.1L661.7 149.0L661.7 150.0L661.8 151.3L661.8 152.7L661.8 154.2L661.8 155.9L661.9 157.7L661.9 159.6L661.9 161.5L661.9 163.6L662.0 165.7L662.0 167.9L662.0 170.1L662.0 172.3L662.1 174.6L662.1 176.9L662.1 179.1L662.1 181.4L662.2 183.7L662.2 185.9L662.2 188.1L662.2 190.3L662.3 192.4L662.3 194.5L662.3 196.5L662.3 198.5L662.4 200.4L662.4 202.2L662.4 204.0L662.4 205.7L662.5 207.3L662.5 208.8L662.5 210.3L662.5 211.7L662.5 213.0L662.6 214.2L662.6 215.3L662.6 216.4L662.6 217.3L662.7 218.2L662.7 218.9L662.7 219.6L662.7 220.1L662.8 220.6L662.8 221.0L662.8 221.3L662.8 221.5L662.9 221.6L662.9 221.6L662.9 221.5L662.9 221.3L663.0 221.0L663.0 220.6L663.0 220.1L663.0 219.6L663.1 218.9L663.1 218.1L663.1 217.3L663.1 216.3L663.2 215.3L663.2 214.2L663.2 213.0L663.2 211.7L663.3 210.3L663.3 208.8L663.3 207.3L663.3 205.6L663.4 203.9L663.4 202.2L663.4 200.3L663.4 198.4L663.5 196.4L663.5 194.4L663.5 192.3L663.5 190.2L663.6 188.0L663.6 185.8L663.6 183.6L663.6 181.4L663.7 179.1L663.7 176.8L663.7 174.5L663.7 172.3L663.8 170.0L663.8 167.8L663.8 165.6L663.8 163.5L663.9 161.5L663.9 159.5L663.9 157.6L663.9 155.8L664.0 154.2L664.0 152.6L664.0 151.2L664.0 150.0L664.1 148.9L664.1 148.0L664.1 147.4L664.1 146.9L664.2 146.7L664.2 146.8L664.2 147.1L664.2 147.6L664.3 148.5L664.3 149.7L664.3 151.2L664.3 153.0L664.4 155.2L664.4 157.7L664.4 160.5L664.4 163.8L664.5 167.4L664.5 171.3L664.5 175.6L664.5 180.3L664.6 185.4L664.6 190.8L664.6 196.5L664.6 202.6L664.7 209.0L664.7 215.7L664.7 222.6L664.7 229.8L664.8 237.2L664.8 244.8L664.8 252.5L664.8 260.3L664.9 268.2L664.9 276.1L664.9 284.0L664.9 291.8L665.0 299.4L665.0 306.8L665.0 314.0L665.0 320.9L665.0 327.4L665.1 333.4L665.1 339.0L665.1 344.0L665.1 348.3L665.2 352.1L665.2 355.1L665.2 357.3L665.2 358.7L665.3 359.3L665.3 359.0L665.3 357.8L665.3 355.6L665.4 352.6L665.4 348.6L665.4 343.6L665.4 337.8L665.5 331.1L665.5 323.6L665.5 315.3L665.5 306.3L665.6 296.7L665.6 286.5L665.6 275.8L665.6 264.8L665.7 253.6L665.7 242.3L665.7 231.0L665.7 219.8L665.8 209.0L665.8 198.6L665.8 188.8L665.8 179.7L665.9 171.4L665.9 164.2L665.9 158.1L665.9 153.2L666.0 149.6L666.0 147.4L666.0 146.7L666.0 147.5L666.1 149.9L666.1 153.7L666.1 159.2L666.1 166.0L666.2 174.3L666.2 183.9L666.2 194.6L666.2 206.4L666.3 219.0L666.3 232.3L666.3 246.0L666.3 260.0L666.4 273.9L666.4 287.5L666.4 300.7L666.4 313.0L666.5 324.4L666.5 334.5L666.5 343.1L666.5 350.0L666.6 355.1L666.6 358.3L666.6 359.3L666.6 358.2L666.7 354.9L666.7 349.5L666.7 342.1L666.7 332.7L666.8 321.5L666.8 308.7L666.8 294.6L666.8 279.5L666.9 263.7L666.9 247.6L666.9 231.5L666.9 215.8L667.0 200.8L667.0 187.1L667.0 174.9L667.0 164.5L667.1 156.3L667.1 150.5L667.1 147.3L667.1 146.8L667.2 149.1L667.2 154.2L667.2 162.0L667.2 172.3L667.3 184.8L667.3 199.3L667.3 215.4L667.3 232.7L667.4 250.6L667.4 268.7L667.4 286.5L667.4 303.3L667.5 318.8L667.5 332.3L667.5 343.4L667.5 351.8L667.5 357.2L667.6 359.3L667.6 358.0L667.6 353.2L667.6 345.2L667.7 334.1L667.7 320.2L667.7 304.0L667.7 286.0L667.8 266.7L667.8 246.9L667.8 227.2L667.8 208.3L667.9 190.9L667.9 175.6L667.9 163.2L667.9 154.0L668.0 148.4L668.0 146.7L668.0 149.1L668.0 155.5L668.1 165.6L668.1 179.3L668.1 195.9L668.1 214.9L668.2 235.4L668.2 256.8L668.2 278.2L668.2 298.6L668.3 317.2L668.3 333.1L668.3 345.8L668.3 354.5L668.4 358.8L668.4 358.6L668.4 353.7L668.4 344.3L668.5 330.7L668.5 313.6L668.5 293.6L668.5 271.7L668.6 248.8L668.6 226.0L668.6 204.4L668.6 185.0L668.7 168.8L668.7 156.6L668.7 149.1L668.7 146.7L668.8 149.6L668.8 157.6L668.8 170.6L668.8 187.8L668.9 208.4L668.9 231.4L668.9 255.6L668.9 279.8L669.0 302.7L669.0 323.0L669.0 339.6L669.0 351.5L669.1 358.1L669.1 358.9L669.1 353.8L669.1 343.0L669.2 327.0L669.2 306.8L669.2 283.3L669.2 258.1L669.3 232.4L669.3 207.8L669.3 185.9L669.3 167.9L669.4 154.9L669.4 147.9L669.4 147.2L669.4 153.1L669.5 165.3L669.5 182.9L669.5 205.1L669.5 230.4L669.6 257.2L669.6 283.9L669.6 308.6L669.6 329.8L669.7 346.0L669.7 356.1L669.7 359.3L669.7 355.3L669.8 344.4L669.8 327.2L669.8 304.9L669.8 278.8L669.9 250.9L669.9 223.0L669.9 197.1L669.9 175.1L670.0 158.7L670.0 149.0L670.0 146.9L670.0 152.6L670.0 165.6L670.1 185.3L670.1 210.1L670.1 238.2L670.1 267.5L670.2 295.8L670.2 320.9L670.2 340.8L670.2 354.0L670.3 359.2L670.3 356.1L670.3 344.8L670.3 326.0L670.4 301.3L670.4 272.7L670.4 242.3L670.4 212.7L670.5 186.3L670.5 165.4L670.5 151.8L670.5 146.7L670.6 150.6L670.6 163.3L670.6 183.7L670.6 210.2L670.7 240.5L670.7 272.0L670.7 301.9L670.7 327.6L670.8 346.6L670.8 357.4L670.8 358.7L670.8 350.3L670.9 333.1L670.9 308.4L670.9 278.5L670.9 246.1L671.0 214.3L671.0 186.0L671.0 164.0L671.0 150.5L671.1 146.8L671.1 153.3L671.1 169.6L671.1 194.1L671.2 224.5L671.2 257.7L671.2 290.6L671.2 319.8L671.3 342.4L671.3 356.0L671.3 359.0L671.3 351.2L671.4 333.3L671.4 306.9L671.4 274.9L671.4 240.4L671.5 207.2L671.5 178.8L671.5 158.2L671.5 147.7L671.6 148.6L671.6 160.9L671.6 183.2L671.6 213.3L671.7 247.9L671.7 283.1L671.7 315.0L671.7 340.1L671.8 355.4L671.8 359.1L671.8 350.6L671.8 331.0L671.9 302.2L671.9 267.7L671.9 231.4L671.9 197.5L672.0 170.0L672.0 152.4L672.0 146.7L672.0 153.8L672.1 172.8L672.1 201.7L672.1 236.8L672.1 274.1L672.2 308.8L672.2 336.7L672.2 354.3L672.2 359.2L672.3 350.7L672.3 329.9L672.3 299.2L672.3 262.5L672.4 224.6L672.4 190.2L672.4 163.8L672.4 149.1L672.5 147.9L672.5 160.6L672.5 185.6L672.5 219.7L672.6 258.2L672.6 296.2L672.6 328.4L672.6 350.4L672.6 359.2L672.7 353.4L672.7 333.7L672.7 302.8L672.7 264.9L672.8 225.2L672.8 189.3L672.8 162.3L672.8 148.2L672.9 149.1L672.9 164.8L672.9 193.3L672.9 230.6L673.0 271.2L673.0 309.2L673.0 339.0L673.0 356.2L673.1 358.1L673.1 344.3L673.1 316.8L673.1 279.6L673.2 238.3L673.2 199.1L673.2 168.1L673.2 150.0L673.3 147.8L673.3 161.9L673.3 190.3L673.3 228.5L673.4 270.6L673.4 310.1L673.4 340.6L673.4 357.2L673.5 357.1L673.5 340.3L673.5 309.3L673.5 269.1L673.6 226.2L673.6 187.6L673.6 159.7L673.6 147.1L673.7 152.1L673.7 174.0L673.7 209.2L673.7 251.8L673.8 294.7L673.8 330.6L673.8 353.4L673.8 358.9L673.9 346.3L673.9 317.4L673.9 277.3L673.9 232.9L674.0 191.9L674.0 161.6L674.0 147.4L674.0 151.9L674.1 174.5L674.1 211.2L674.1 255.5L674.1 299.4L674.2 335.0L674.2 355.8L674.2 357.7L674.2 340.4L674.3 306.9L674.3 263.3L674.3 217.7L674.3 178.7L674.4 153.5L674.4 147.0L674.4 160.7L674.4 191.9L674.5 234.8L674.5 281.4L674.5 322.6L674.5 350.3L674.6 359.2L674.6 347.4L674.6 317.1L674.6 274.1L674.7 226.8L674.7 184.6L674.7 156.0L674.7 146.7L674.8 158.8L674.8 189.9L674.8 233.8L674.8 281.7L674.9 323.9L674.9 351.6L674.9 359.0L674.9 344.5L675.0 311.1L675.0 265.4L675.0 217.1L675.0 176.2L675.1 151.4L675.1 148.1L675.1 167.1L675.1 204.5L675.1 253.0M724.1 253.0L724.1 253.0L724.1 253.1L724.1 253.2L724.2 253.3L724.2 253.4L724.2 253.5L724.2 253.5L724.3 253.3L724.3 253.1L724.3 252.7L724.3 252.4L724.4 252.0L724.4 251.7L724.4 251.6L724.4 251.7L724.5 252.0L724.5 252.4L724.5 253.0L724.5 253.7L724.6 254.4L724.6 254.9L724.6 255.2L724.6 255.3L724.7 255.0L724.7 254.5L724.7 253.7L724.7 252.8L724.8 251.8L724.8 250.9L724.8 250.2L724.8 249.8L724.9 249.8L724.9 250.2L724.9 251.0L724.9 252.1L725.0 253.4L725.0 254.6L725.0 255.8L725.0 256.7L725.1 257.1L725.1 257.1L725.1 256.6L725.1 255.6L725.2 254.2L725.2 252.7L725.2 251.1L725.2 249.6L725.3 248.5L725.3 247.9L725.3 247.9L725.3 248.5L725.4 249.6L725.4 251.2L725.4 253.1L725.4 255.0L725.5 256.7L725.5 258.1L725.5 258.9L725.5 259.1L725.5 258.6L725.6 257.4L725.6 255.7L725.6 253.6L725.6 251.4L725.7 249.2L725.7 247.5L725.7 246.3L725.7 245.9L725.8 246.2L725.8 247.3L725.8 249.1L725.8 251.3L725.9 253.8L725.9 256.3L725.9 258.5L725.9 260.1L726.0 261.0L726.0 261.0L726.0 260.2L726.0 258.6L726.1 256.3L726.1 253.6L726.1 250.8L726.1 248.2L726.2 246.0L726.2 244.5L726.2 243.9L726.2 244.2L726.3 245.5L726.3 247.6L726.3 250.3L726.3 253.3L726.4 256.4L726.4 259.2L726.4 261.4L726.4 262.8L726.5 263.2L726.5 262.5L726.5 260.9L726.5 258.4L726.6 255.4L726.6 252.0L726.6 248.7L726.6 245.7L726.7 243.5L726.7 242.1L726.7 241.8L726.7 242.6L726.8 244.5L726.8 247.2L726.8 250.6L726.8 254.2L726.9 257.8L726.9 261.0L726.9 263.4L726.9 264.9L727.0 265.3L727.0 264.4L727.0 262.5L727.0 259.6L727.1 256.1L727.1 252.1L727.1 248.3L727.1 244.8L727.2 242.0L727.2 240.2L727.2 239.6L727.2 240.3L727.3 242.1L727.3 245.0L727.3 248.7L727.3 252.8L727.4 257.0L727.4 260.9L727.4 264.1L727.4 266.3L727.5 267.4L727.5 267.2L727.5 265.7L727.5 263.0L727.6 259.4L727.6 255.2L727.6 250.7L727.6 246.4L727.7 242.6L727.7 239.7L727.7 237.9L727.7 237.4L727.8 238.3L727.8 240.5L727.8 243.8L727.8 247.9L727.8 252.5L727.9 257.2L727.9 261.6L727.9 265.4L727.9 268.1L728.0 269.5L728.0 269.6L728.0 268.3L728.0 265.6L728.1 261.9L728.1 257.4L728.1 252.5L728.1 247.6L728.2 243.0L728.2 239.3L728.2 236.6L728.2 235.2L728.3 235.3L728.3 236.9L728.3 239.7L728.3 243.7L728.4 248.4L728.4 253.6L728.4 258.7L728.4 263.5L728.5 267.5L728.5 270.3L728.5 271.9L728.5 271.9L728.6 270.5L728.6 267.7L728.6 263.7L728.6 258.8L728.7 253.5L728.7 248.0L728.7 242.9L728.7 238.5L728.8 235.2L728.8 233.2L728.8 232.7L728.8 233.8L728.9 236.2L728.9 240.0L728.9 244.8L728.9 250.2L729.0 255.9L729.0 261.4L729.0 266.3L729.0 270.3L729.1 273.1L729.1 274.4L729.1 274.2L729.1 272.4L729.2 269.2L729.2 264.9L729.2 259.6L729.2 253.8L729.3 247.9L729.3 242.4L729.3 237.5L729.3 233.7L729.4 231.2L729.4 230.3L729.4 230.9L729.4 233.0L729.5 236.6L729.5 241.3L729.5 246.8L729.5 252.9L729.6 258.9L729.6 264.6L729.6 269.6L729.6 273.5L729.7 276.0L729.7 277.0L729.7 276.4L729.7 274.3L729.8 270.7L729.8 265.9L729.8 260.2L729.8 254.1L729.9 247.8L729.9 241.8L729.9 236.5L729.9 232.2L730.0 229.3L730.0 227.8L730.0 227.9L730.0 229.7L730.0 232.9L730.1 237.4L730.1 243.0L730.1 249.2L730.1 255.7L730.2 262.0L730.2 267.8L730.2 272.8L730.2 276.6L730.3 278.9L730.3 279.7L730.3 278.8L730.3 276.4L730.4 272.6L730.4 267.5L730.4 261.6L730.4 255.1L730.5 248.4L730.5 242.0L730.5 236.2L730.5 231.3L730.6 227.7L730.6 225.6L730.6 225.0L730.6 226.0L730.7 228.6L730.7 232.6L730.7 237.8L730.7 243.9L730.8 250.6L730.8 257.4L730.8 264.0L730.8 270.0L730.9 275.1L730.9 279.0L730.9 281.5L730.9 282.4L731.0 281.7L731.0 279.5L731.0 275.7L731.0 270.8L731.1 264.8L731.1 258.2L731.1 251.2L731.1 244.3L731.2 237.9L731.2 232.2L731.2 227.6L731.2 224.3L731.3 222.4L731.3 222.2L731.3 223.6L731.3 226.5L731.4 230.8L731.4 236.2L731.4 242.5L731.4 249.4L731.5 256.5L731.5 263.5L731.5 269.9L731.5 275.6L731.6 280.1L731.6 283.3L731.6 285.1L731.6 285.3L731.7 283.8L731.7 280.9L731.7 276.6L731.7 271.2L731.8 264.8L731.8 257.9L731.8 250.7L731.8 243.5L731.9 236.8L731.9 230.9L731.9 225.9L731.9 222.2L732.0 219.9L732.0 219.1L732.0 219.9L732.0 222.2L732.1 225.9L732.1 230.9L732.1 236.9L732.1 243.6L732.2 250.8L732.2 258.1L732.2 265.3L732.2 271.9L732.3 277.7L732.3 282.4L732.3 285.9L732.3 287.9L732.3 288.5L732.4 287.5L732.4 285.0L732.4 281.2L732.4 276.1L732.5 270.1L732.5 263.3L732.5 256.0L732.5 248.6L732.6 241.4L732.6 234.6L732.6 228.5L732.6 223.5L732.7 219.6L732.7 217.0L732.7 215.9L732.7 216.3L732.8 218.2L732.8 221.4L732.8 225.9L732.8 231.5L732.9 238.0L732.9 245.1L732.9 252.5L732.9 259.9L733.0 267.1L733.0 273.8L733.0 279.7L733.0 284.6L733.1 288.4L733.1 290.8L733.1 291.8L733.1 291.3L733.2 289.5L733.2 286.3L733.2 281.8L733.2 276.3L733.3 269.9L733.3 262.9L733.3 255.5L733.3 248.0L733.4 240.7L733.4 233.8L733.4 227.5L733.4 222.1L733.5 217.8L733.5 214.7L733.5 212.9L733.5 212.4L733.6 213.4L733.6 215.7L733.6 219.3L733.6 224.1L733.7 229.8L733.7 236.3L733.7 243.4L733.7 250.8L733.8 258.3L733.8 265.7L733.8 272.6L733.8 279.0L733.9 284.5L733.9 289.0L733.9 292.4L733.9 294.6L734.0 295.4L734.0 294.9L734.0 293.1L734.0 290.1L734.1 285.9L734.1 280.7L734.1 274.6L734.1 267.9L734.2 260.7L734.2 253.2L734.2 245.8L734.2 238.5L734.3 231.6L734.3 225.4L734.3 219.9L734.3 215.4L734.4 212.0L734.4 209.7L734.4 208.7L734.4 208.9L734.5 210.4L734.5 213.1L734.5 216.9L734.5 221.7L734.6 227.4L734.6 233.8L734.6 240.7L734.6 248.0L734.6 255.5L734.7 262.8L734.7 270.0L734.7 276.7L734.7 282.7L734.8 288.0L734.8 292.4L734.8 295.8L734.8 298.1L734.9 299.3L734.9 299.2L734.9 298.0L734.9 295.7L735.0 292.2L735.0 287.8L735.0 282.6L735.0 276.6L735.1 270.0L735.1 263.0L735.1 255.7L735.1 248.4L735.2 241.1L735.2 234.1L735.2 227.6L735.2 221.7L735.3 216.4L735.3 212.0L735.3 208.6L735.3 206.2L735.4 204.8L735.4 204.5L735.4 205.3L735.4 207.1L735.5 210.0L735.5 213.8L735.5 218.5L735.5 224.0L735.6 230.0L735.6 236.6L735.6 243.6L735.6 250.7L735.7 257.9L735.7 265.0L735.7 271.8L735.7 278.3L735.8 284.3L735.8 289.6L735.8 294.2L735.8 298.0L735.9 300.9L735.9 302.8L735.9 303.7L735.9 303.7L736.0 302.7L736.0 300.7L736.0 297.8L736.0 294.0L736.1 289.5L736.1 284.3L736.1 278.5L736.1 272.2L736.2 265.5L736.2 258.7L736.2 251.7L736.2 244.7L736.3 237.9L736.3 231.3L736.3 225.2L736.3 219.5L736.4 214.3L736.4 209.9L736.4 206.2L736.4 203.3L736.5 201.2L736.5 200.0L736.5 199.7L736.5 200.2L736.6 201.6L736.6 203.9L736.6 207.0L736.6 210.7L736.7 215.2L736.7 220.3L736.7 225.9L736.7 231.9L736.8 238.2L736.8 244.8L736.8 251.4L736.8 258.2L736.9 264.8L736.9 271.2L736.9 277.4L736.9 283.3L736.9 288.7L737.0 293.5L737.0 297.8L737.0 301.5L737.0 304.5L737.1 306.7L737.1 308.2L737.1 309.0L737.1 309.0L737.2 308.2L737.2 306.7L737.2 304.5L737.2 301.6L737.3 298.0L737.3 293.9L737.3 289.3L737.3 284.1L737.4 278.6L737.4 272.8L737.4 266.8L737.4 260.5L737.5 254.2L737.5 247.9L737.5 241.6L737.5 235.5L737.6 229.6L737.6 223.9L737.6 218.6L737.6 213.8L737.7 209.3L737.7 205.4L737.7 202.0L737.7 199.1L737.8 196.9L737.8 195.3L737.8 194.3L737.8 193.9L737.9 194.2L737.9 195.0L737.9 196.5L737.9 198.6L738.0 201.2L738.0 204.4L738.0 208.0L738.0 212.1L738.1 216.6L738.1 221.4L738.1 226.5L738.1 231.9L738.2 237.5L738.2 243.2L738.2 249.0L738.2 254.8L738.3 260.6L738.3 266.3L738.3 271.9L738.3 277.3L738.4 282.5L738.4 287.4L738.4 292.1L738.4 296.3L738.5 300.3L738.5 303.8L738.5 306.9L738.5 309.5L738.6 311.7L738.6 313.4L738.6 314.6L738.6 315.3L738.7 315.6L738.7 315.4L738.7 314.7L738.7 313.5L738.8 311.9L738.8 309.9L738.8 307.4L738.8 304.6L738.9 301.4L738.9 297.9L738.9 294.1L738.9 290.0L739.0 285.6L739.0 281.1L739.0 276.4L739.0 271.5L739.1 266.5L739.1 261.5L739.1 256.4L739.1 251.3L739.2 246.2L739.2 241.2L739.2 236.3L739.2 231.5L739.2 226.8L739.3 222.3L739.3 218.0L739.3 213.9L739.3 210.0L739.4 206.4L739.4 203.0L739.4 199.9L739.4 197.1L739.5 194.6L739.5 192.5L739.5 190.6L739.5 189.1L739.6 187.8L739.6 187.0L739.6 186.4L739.6 186.1L739.7 186.2L739.7 186.6L739.7 187.3L739.7 188.2L739.8 189.5L739.8 191.1L739.8 192.9L739.8 194.9L739.9 197.2L739.9 199.7L739.9 202.4L739.9 205.3L740.0 208.4L740.0 211.7L740.0 215.0L740.0 218.6L740.1 222.2L740.1 225.9L740.1 229.7L740.1 233.6L740.2 237.5L740.2 241.5L740.2 245.5L740.2 249.4L740.3 253.4L740.3 257.4L740.3 261.3L740.3 265.2L740.4 269.0L740.4 272.7L740.4 276.4L740.4 280.0L740.5 283.4L740.5 286.8L740.5 290.1L740.5 293.2L740.6 296.2L740.6 299.1L740.6 301.8L740.6 304.4L740.7 306.9L740.7 309.2L740.7 311.4L740.7 313.4L740.8 315.2L740.8 316.9L740.8 318.5L740.8 319.9L740.9 321.1L740.9 322.2L740.9 323.2L740.9 324.0L741.0 324.7L741.0 325.2L741.0 325.5L741.0 325.8L741.1 325.9L741.1 325.9L741.1 325.8L741.1 325.5L741.2 325.1L741.2 324.6L741.2 324.1L741.2 323.4L741.3 322.6L741.3 321.7L741.3 320.7L741.3 319.7L741.4 318.5L741.4 317.3L741.4 316.1L741.4 314.7L741.5 313.3L741.5 311.9L741.5 310.4L741.5 308.8L741.5 307.2L741.6 305.6L741.6 303.9L741.6 302.3L741.6 300.5L741.7 298.8L741.7 297.0L741.7 295.3L741.7 293.5L741.8 291.7L741.8 289.9L741.8 288.1L741.8 286.3L741.9 284.5L741.9 282.7L741.9 280.9L741.9 279.2L742.0 277.4L742.0 275.6L742.0 273.9L742.0 272.2L742.1 270.5L742.1 268.9L742.1 267.2L742.1 265.6L742.2 264.0L742.2 262.4L742.2 260.9L742.2 259.4L742.3 257.9L742.3 256.5L742.3 255.0L742.3 253.7L742.4 252.3L742.4 251.0L742.4 249.7L742.4 248.5L742.5 247.2L742.5 246.1L742.5 244.9L742.5 243.8L742.6 242.8L742.6 241.7L742.6 240.7L742.6 239.8L742.7 238.8L742.7 237.9L742.7 237.1L742.7 236.3L742.8 235.5L742.8 234.7L742.8 234.0L742.8 233.4L742.9 232.7L742.9 232.1L742.9 231.6L742.9 231.1L743.0 230.6L743.0 230.1L743.0 229.7L743.0 229.3L743.1 229.0L743.1 228.7L743.1 228.4L743.1 228.2L743.2 228.0L743.2 227.8L743.2 227.7L743.2 227.6L743.3 227.5L743.3 227.5L743.3 227.6L743.3 227.6L743.4 227.7L743.4 227.8L743.4 228.0L743.4 228.2L743.5 228.5L743.5 228.8L743.5 229.1L743.5 229.5L743.6 229.9L743.6 230.3L743.6 230.8L743.6 231.3L743.7 231.9L743.7 232.5L743.7 233.1L743.7 233.8L743.8 234.6L743.8 235.3L743.8 236.2L743.8 237.0L743.8 237.9L743.9 238.9L743.9 239.9L743.9 240.9L743.9 242.0L744.0 243.1L744.0 244.3L744.0 245.5L744.0 246.8L744.1 248.1L744.1 249.4L744.1 250.8L744.1 252.2L744.2 253.7L744.2 255.3L744.2 256.8L744.2 258.4L744.3 260.1L744.3 261.8L744.3 263.5L744.3 265.3L744.4 267.1L744.4 269.0L744.4 270.9L744.4 272.8L744.5 274.8L744.5 276.8L744.5 278.8L744.5 280.9L744.6 283.0L744.6 285.1L744.6 287.2L744.6 289.4L744.7 291.6L744.7 293.8L744.7 296.0L744.7 298.2L744.8 300.4L744.8 302.6L744.8 304.8L744.8 307.0L744.9 309.2L744.9 311.4L744.9 313.6L744.9 315.7L745.0 317.8L745.0 319.9L745.0 321.9L745.0 323.9L745.1 325.9L745.1 327.8L745.1 329.6L745.1 331.3L745.2 333.0L745.2 334.6L745.2 336.1L745.2 337.5L745.3 338.8L745.3 340.0L745.3 341.1L745.3 342.1L745.4 342.9L745.4 343.6L745.4 344.2L745.4 344.6L745.5 344.8L745.5 344.9L745.5 344.9L745.5 344.6L745.6 344.2L745.6 343.6L745.6 342.8L745.6 341.8L745.7 340.6L745.7 339.3L745.7 337.7L745.7 335.9L745.8 333.9L745.8 331.7L745.8 329.2L745.8 326.6L745.9 323.8L745.9 320.7L745.9 317.5L745.9 314.0L746.0 310.3L746.0 306.5L746.0 302.4L746.0 298.2L746.1 293.8L746.1 289.2L746.1 284.5L746.1 279.7L746.1 274.6L746.2 269.5L746.2 264.3L746.2 259.0L746.2 253.6L746.3 248.1L746.3 242.6L746.3 237.1L746.3 231.6L746.4 226.1L746.4 220.6L746.4 215.2L746.4 209.9L746.5 204.7L746.5 199.6L746.5 194.7L746.5 189.9L746.6 185.4L746.6 181.1L746.6 177.0L746.6 173.2L746.7 169.7L746.7 166.6L746.7 163.7L746.7 161.3L746.8 159.2L746.8 157.5L746.8 156.3L746.8 155.5L746.9 155.1L746.9 155.2L746.9 155.8L746.9 156.8L747.0 158.4L747.0 160.4L747.0 162.9L747.0 165.9L747.1 169.4L747.1 173.4L747.1 177.8L747.1 182.7L747.2 188.0L747.2 193.7L747.2 199.7L747.2 206.2L747.3 213.0L747.3 220.0L747.3 227.3L747.3 234.9L747.4 242.6L747.4 250.4L747.4 258.3L747.4 266.2L747.5 274.1L747.5 282.0L747.5 289.7L747.5 297.2L747.6 304.5L747.6 311.6L747.6 318.2L747.6 324.5L747.7 330.3L747.7 335.6L747.7 340.4L747.7 344.5L747.8 348.1L747.8 350.9L747.8 353.1L747.8 354.5L747.9 355.1L747.9 355.0L747.9 354.1L747.9 352.3L748.0 349.8L748.0 346.4L748.0 342.3L748.0 337.4L748.1 331.8L748.1 325.5L748.1 318.5L748.1 310.9L748.2 302.7L748.2 294.1L748.2 285.0L748.2 275.6L748.3 265.9L748.3 256.0L748.3 246.1L748.3 236.1L748.4 226.2L748.4 216.5L748.4 207.1L748.4 198.0L748.4 189.5L748.5 181.5L748.5 174.1L748.5 167.5L748.5 161.7L748.6 156.8L748.6 152.9L748.6 150.0L748.6 148.1L748.7 147.3L748.7 147.7L748.7 149.2L748.7 151.8L748.8 155.6L748.8 160.5L748.8 166.4L748.8 173.4L748.9 181.4L748.9 190.2L748.9 199.8L748.9 210.0L749.0 220.8L749.0 232.0L749.0 243.6L749.0 255.2L749.1 266.9L749.1 278.5L749.1 289.8L749.1 300.8L749.2 311.1L749.2 320.8L749.2 329.6L749.2 337.5L749.3 344.3L749.3 349.9L749.3 354.3L749.3 357.3L749.4 359.0L749.4 359.2L749.4 358.0L749.4 355.3L749.5 351.2L749.5 345.7L749.5 338.9L749.5 330.8L749.6 321.6L749.6 311.3L749.6 300.2L749.6 288.3L749.7 275.8L749.7 263.0L749.7 250.0L749.7 236.9L749.8 224.1L749.8 211.6L749.8 199.8L749.8 188.7L749.9 178.6L749.9 169.7L749.9 162.0L749.9 155.8L750.0 151.1L750.0 148.1L750.0 146.8L750.0 147.2L750.1 149.4L750.1 153.4L750.1 159.0L750.1 166.3L750.2 175.1L750.2 185.2L750.2 196.6L750.2 209.0L750.3 222.3L750.3 236.1L750.3 250.3L750.3 264.6L750.4 278.7L750.4 292.4L750.4 305.4L750.4 317.5L750.5 328.4L750.5 338.0L750.5 345.9L750.5 352.2L750.6 356.5L750.6 358.9L750.6 359.2L750.6 357.4L750.7 353.6L750.7 347.7L750.7 340.0L750.7 330.4L750.7 319.3L750.8 306.8L750.8 293.1L750.8 278.6L750.8 263.4L750.9 248.1L750.9 232.7L750.9 217.8L750.9 203.5L751.0 190.3L751.0 178.4L751.0 168.1L751.0 159.5L751.1 153.1L751.1 148.8L751.1 146.8L751.1 147.2L751.2 150.0L751.2 155.2L751.2 162.6L751.2 172.1L751.3 183.5L751.3 196.6L751.3 211.0L751.3 226.5L751.4 242.6L751.4 259.0L751.4 275.4L751.4 291.2L751.5 306.2L751.5 319.9L751.5 332.0L751.5 342.2L751.6 350.2L751.6 355.8L751.6 358.8L751.6 359.1L751.7 356.7L751.7 351.7L751.7 344.1L751.7 334.1L751.8 322.0L751.8 308.0L751.8 292.5L751.8 276.0L751.9 258.7L751.9 241.3L751.9 224.1L751.9 207.7L752.0 192.5L752.0 178.9L752.0 167.3L752.0 158.0L752.1 151.4L752.1 147.6L752.1 146.8L752.1 149.0L752.2 154.2L752.2 162.2L752.2 172.9L752.2 185.9L752.3 201.0L752.3 217.6L752.3 235.3L752.3 253.6L752.4 271.9L752.4 289.7L752.4 306.4L752.4 321.5L752.5 334.6L752.5 345.3L752.5 353.1L752.5 357.8L752.6 359.3L752.6 357.4L752.6 352.3L752.6 344.0L752.7 332.7L752.7 318.9L752.7 302.9L752.7 285.3L752.8 266.6L752.8 247.4L752.8 228.3L752.8 210.0L752.9 193.0L752.9 178.1L752.9 165.6L752.9 156.0L752.9 149.7L753.0 146.8L753.0 147.7L753.0 152.1L753.0 160.0L753.1 171.2L753.1 185.3L753.1 201.8L753.1 220.2L753.2 239.7L753.2 259.8L753.2 279.7L753.2 298.6L753.3 316.0L753.3 331.1L753.3 343.4L753.3 352.4L753.4 357.8L753.4 359.3L753.4 356.8L753.4 350.5L753.5 340.4L753.5 327.0L753.5 310.8L753.5 292.4L753.6 272.4L753.6 251.6L753.6 230.8L753.6 210.8L753.7 192.4L753.7 176.4L753.7 163.3L753.7 153.8L753.8 148.2L753.8 146.8L753.8 149.6L753.8 156.6L753.9 167.6L753.9 182.1L753.9 199.5L753.9 219.1L754.0 240.2L754.0 261.9L754.0 283.3L754.0 303.4L754.1 321.4L754.1 336.6L754.1 348.3L754.1 356.0L754.2 359.2L754.2 357.9L754.2 352.0L754.2 341.8L754.3 327.7L754.3 310.3L754.3 290.4L754.3 268.7L754.4 246.3L754.4 224.1L754.4 203.2L754.4 184.5L754.5 168.9L754.5 157.0L754.5 149.5L754.5 146.7L754.6 148.8L754.6 155.8L754.6 167.2L754.6 182.7L754.7 201.5L754.7 222.8L754.7 245.6L754.7 268.7L754.8 291.2L754.8 311.8L754.8 329.7L754.8 343.9L754.9 353.8L754.9 358.7L754.9 358.5L754.9 353.2L755.0 342.8L755.0 328.0L755.0 309.4L755.0 288.0L755.1 264.8L755.1 240.9L755.1 217.6L755.1 196.0L755.2 177.3L755.2 162.5L755.2 152.3L755.2 147.2L755.2 147.6L755.3 153.5L755.3 164.6L755.3 180.4L755.3 200.1L755.4 222.5L755.4 246.7L755.4 271.2L755.4 294.8L755.5 316.2L755.5 334.2L755.5 347.9L755.5 356.4L755.6 359.3L755.6 356.4L755.6 347.7L755.6 333.8L755.7 315.4L755.7 293.5L755.7 269.2L755.7 244.0L755.8 219.3L755.8 196.4L755.8 176.7L755.8 161.3L755.9 151.2L755.9 146.8L755.9 148.6L755.9 156.5L756.0 170.0L756.0 188.3L756.0 210.5L756.0 235.3L756.1 261.1L756.1 286.5L756.1 310.0L756.1 330.0L756.2 345.5L756.2 355.5L756.2 359.3L756.2 356.6L756.3 347.6L756.3 332.8L756.3 313.1L756.3 289.6L756.4 263.8L756.4 237.3L756.4 211.8L756.4 188.7L756.5 169.7L756.5 155.9L756.5 148.2L756.5 147.1L756.6 152.8L756.6 164.9L756.6 182.7L756.6 205.1L756.7 230.6L756.7 257.6L756.7 284.3L756.7 309.1L756.8 330.2L756.8 346.3L756.8 356.2L756.8 359.3L756.9 355.3L756.9 344.5L756.9 327.5L756.9 305.5L757.0 279.9L757.0 252.4L757.0 224.9L757.0 199.3L757.1 177.3L757.1 160.5L757.1 150.0L757.1 146.7L757.2 150.8L757.2 162.0L757.2 179.6L757.2 202.3L757.3 228.7L757.3 256.9L757.3 284.8L757.3 310.5L757.4 332.2L757.4 348.2L757.4 357.3L757.4 359.0L757.5 352.9L757.5 339.6L757.5 319.9L757.5 295.3L757.5 267.5L757.6 238.7L757.6 210.8L757.6 186.0L757.6 166.2L757.7 152.8L757.7 146.9L757.7 149.0L757.7 159.0L757.8 176.1L757.8 199.1L757.8 226.3L757.8 255.5L757.9 284.6L757.9 311.3L757.9 333.5L757.9 349.6L758.0 358.1L758.0 358.4L758.0 350.5L758.0 334.8L758.1 312.7L758.1 285.8L758.1 256.3L758.1 226.5L758.2 198.7L758.2 175.2L758.2 158.0L758.2 148.4L758.3 147.3L758.3 154.8L758.3 170.3L758.3 192.6L758.4 219.9L758.4 249.9L758.4 280.3L758.4 308.5L758.5 332.0L758.5 349.1L758.5 358.1L758.5 358.3L758.6 349.6L758.6 332.7L758.6 309.1L758.6 280.6L758.7 249.8L758.7 219.1L758.7 191.4L758.7 168.9L758.8 153.6L758.8 146.9L758.8 149.5L758.8 161.1L758.9 180.7L758.9 206.8L758.9 236.9L758.9 268.5L759.0 298.8L759.0 325.1L759.0 344.9L759.0 356.6L759.1 359.0L759.1 351.8L759.1 335.7L759.1 312.1L759.2 283.1L759.2 251.3L759.2 219.6L759.2 190.9L759.3 167.9L759.3 152.7L759.3 146.8L759.3 150.7L759.4 164.2L759.4 186.0L759.4 214.1L759.4 245.9L759.5 278.4L759.5 308.6L759.5 333.5L759.5 350.9L759.6 358.9L759.6 356.7L759.6 344.7L759.6 323.7L759.7 295.9L759.7 263.9L759.7 230.8L759.7 199.8L759.8 174.0L759.8 155.9L759.8 147.3L759.8 149.1L759.8 161.2L759.9 182.4L759.9 210.7L759.9 243.2L759.9 276.8L760.0 308.0L760.0 333.8L760.0 351.4L760.0 359.0L760.1 356.0L760.1 342.4L760.1 319.6L760.1 290.1L760.2 256.6L760.2 222.7L760.2 192.0L760.2 167.5L760.3 151.8L760.3 146.7L760.3 152.7L760.3 169.2L760.4 194.6L760.4 226.1L760.4 260.6L760.4 294.3L760.5 323.6L760.5 345.4L760.5 357.4L760.5 358.2L760.6 347.7L760.6 327.0L760.6 298.2L760.6 264.4L760.7 229.4L760.7 196.9L760.7 170.5L760.7 153.1L760.8 146.7L760.8 152.0L760.8 168.5L760.8 194.4L760.9 226.8L760.9 262.2L760.9 296.7L760.9 326.2L761.0 347.6L761.0 358.3L761.0 357.1L761.0 344.1L761.1 320.8L761.1 289.6L761.1 254.2L761.1 218.7L761.2 187.0L761.2 162.9L761.2 187.0L761.2 218.7L761.3 254.2L761.3 289.6L761.3 320.8L761.3 344.1L761.4 357.1L761.4 358.3L761.4 347.6L761.4 326.2L761.5 296.7L761.5 262.2L761.5 226.8L761.5 194.4L761.6 168.5L761.6 152.0L761.6 146.7L761.6 153.1L761.7 170.5L761.7 196.9L761.7 229.4L761.7 264.4L761.8 298.2L761.8 327.0L761.8 347.7L761.8 358.2L761.9 357.4L761.9 345.4L761.9 323.6L761.9 294.3L762.0 260.6L762.0 226.1L762.0 194.6L762.0 169.2L762.1 152.7L762.1 146.7L762.1 151.8L762.1 167.5L762.1 192.0L762.2 222.7L762.2 256.6L762.2 290.1L762.2 319.6L762.3 342.4L762.3 356.0L762.3 359.0L762.3 351.4L762.4 333.8L762.4 308.0L762.4 276.8L762.4 243.2L762.5 210.7L762.5 182.4L762.5 161.2L762.5 149.1L762.6 147.3L762.6 155.9L762.6 174.0L762.6 199.8L762.7 230.8L762.7 263.9L762.7 295.9L762.7 323.7L762.8 344.7L762.8 356.7L762.8 358.9L762.8 350.9L762.9 333.5L762.9 308.6L762.9 278.4L762.9 245.9L763.0 214.1L763.0 186.0L763.0 164.2L763.0 150.7L763.1 146.8L763.1 152.7L763.1 167.9L763.1 190.9L763.2 219.6L763.2 251.3L763.2 283.1L763.2 312.1L763.3 335.7L763.3 351.8L763.3 359.0L763.3 356.6L763.4 344.9L763.4 325.1L763.4 298.8L763.4 268.5L763.5 236.9L763.5 206.8L763.5 180.7L763.5 161.1L763.6 149.5L763.6 146.9L763.6 153.6L763.6 168.9L763.7 191.4L763.7 219.1L763.7 249.8L763.7 280.6L763.8 309.1L763.8 332.7L763.8 349.6L763.8 358.3L763.9 358.1L763.9 349.1L763.9 332.0L763.9 308.5L764.0 280.3L764.0 249.9L764.0 219.9L764.0 192.6L764.1 170.3L764.1 154.8L764.1 147.3L764.1 148.4L764.2 158.0L764.2 175.2L764.2 198.7L764.2 226.5L764.3 256.3L764.3 285.8L764.3 312.7L764.3 334.8L764.4 350.5L764.4 358.4L764.4 358.1L764.4 349.6L764.4 333.5L764.5 311.3L764.5 284.6L764.5 255.5L764.5 226.3L764.6 199.1L764.6 176.1L764.6 159.0L764.6 149.0L764.7 146.9L764.7 152.8L764.7 166.2L764.7 186.0L764.8 210.8L764.8 238.7L764.8 267.5L764.8 295.3L764.9 319.9L764.9 339.6L764.9 352.9L764.9 359.0L765.0 357.3L765.0 348.2L765.0 332.2L765.0 310.5L765.1 284.8L765.1 256.9L765.1 228.7L765.1 202.3L765.2 179.6L765.2 162.0L765.2 150.8L765.2 146.7L765.3 150.0L765.3 160.5L765.3 177.3L765.3 199.3L765.4 224.9L765.4 252.4L765.4 279.9L765.4 305.5L765.5 327.5L765.5 344.5L765.5 355.3L765.5 359.3L765.6 356.2L765.6 346.3L765.6 330.2L765.6 309.1L765.7 284.3L765.7 257.6L765.7 230.6L765.7 205.1L765.8 182.7L765.8 164.9L765.8 152.8L765.8 147.1L765.9 148.2L765.9 155.9L765.9 169.7L765.9 188.7L766.0 211.8L766.0 237.3L766.0 263.8L766.0 289.6L766.1 313.1L766.1 332.8L766.1 347.6L766.1 356.6L766.2 359.3L766.2 355.5L766.2 345.5L766.2 330.0L766.3 310.0L766.3 286.5L766.3 261.1L766.3 235.3L766.4 210.5L766.4 188.3L766.4 170.0L766.4 156.5L766.5 148.6L766.5 146.8L766.5 151.2L766.5 161.3L766.6 176.7L766.6 196.4L766.6 219.3L766.6 244.0L766.7 269.2L766.7 293.5L766.7 315.4L766.7 333.8L766.7 347.7L766.8 356.4L766.8 359.3L766.8 356.4L766.8 347.9L766.9 334.2L766.9 316.2L766.9 294.8L766.9 271.2L767.0 246.7L767.0 222.5L767.0 200.1L767.0 180.4L767.1 164.6L767.1 153.5L767.1 147.6L767.1 147.2L767.2 152.3L767.2 162.5L767.2 177.3L767.2 196.0L767.3 217.6L767.3 240.9L767.3 264.8L767.3 288.0L767.4 309.4L767.4 328.0L767.4 342.8L767.4 353.2L767.5 358.5L767.5 358.7L767.5 353.8L767.5 343.9L767.6 329.7L767.6 311.8L767.6 291.2L767.6 268.7L767.7 245.6L767.7 222.8L767.7 201.5L767.7 182.7L767.8 167.2L767.8 155.8L767.8 148.8L767.8 146.7L767.9 149.5L767.9 157.0L767.9 168.9L767.9 184.5L768.0 203.2L768.0 224.1L768.0 246.3L768.0 268.7L768.1 290.4L768.1 310.3L768.1 327.7L768.1 341.8L768.2 352.0L768.2 357.9L768.2 359.2L768.2 356.0L768.3 348.3L768.3 336.6L768.3 321.4L768.3 303.4L768.4 283.3L768.4 261.9L768.4 240.2L768.4 219.1L768.5 199.5L768.5 182.1L768.5 167.6L768.5 156.6L768.6 149.6L768.6 146.8L768.6 148.2L768.6 153.8L768.7 163.3L768.7 176.4L768.7 192.4L768.7 210.8L768.8 230.8L768.8 251.6L768.8 272.4L768.8 292.4L768.9 310.8L768.9 327.0L768.9 340.4L768.9 350.5L769.0 356.8L769.0 359.3L769.0 357.8L769.0 352.4L769.0 343.4L769.1 331.1L769.1 316.0L769.1 298.6L769.1 279.7L769.2 259.8L769.2 239.7L769.2 220.2L769.2 201.8L769.3 185.3L769.3 171.2L769.3 160.0L769.3 152.1L769.4 147.7L769.4 146.8L769.4 149.7L769.4 156.0L769.5 165.6L769.5 178.1L769.5 193.0L769.5 210.0L769.6 228.3L769.6 247.4L769.6 266.6L769.6 285.3L769.7 302.9L769.7 318.9L769.7 332.7L769.7 344.0L769.8 352.3L769.8 357.4L769.8 359.3L769.8 357.8L769.9 353.1L769.9 345.3L769.9 334.6L769.9 321.5L770.0 306.4L770.0 289.7L770.0 271.9L770.0 253.6L770.1 235.3L770.1 217.6L770.1 201.0L770.1 185.9L770.2 172.9L770.2 162.2L770.2 154.2L770.2 149.0L770.3 146.8L770.3 147.6L770.3 151.4L770.3 158.0L770.4 167.3L770.4 178.9L770.4 192.5L770.4 207.7L770.5 224.1L770.5 241.3L770.5 258.7L770.5 276.0L770.6 292.5L770.6 308.0L770.6 322.0L770.6 334.1L770.7 344.1L770.7 351.7L770.7 356.7L770.7 359.1L770.8 358.8L770.8 355.8L770.8 350.2L770.8 342.2L770.9 332.0L770.9 319.9L770.9 306.2L770.9 291.2L771.0 275.4L771.0 259.0L771.0 242.6L771.0 226.5L771.1 211.0L771.1 196.6L771.1 183.5L771.1 172.1L771.2 162.6L771.2 155.2L771.2 150.0L771.2 147.2L771.3 146.8L771.3 148.8L771.3 153.1L771.3 159.5L771.3 168.1L771.4 178.4L771.4 190.3L771.4 203.5L771.4 217.8L771.5 232.7L771.5 248.1L771.5 263.4L771.5 278.6L771.6 293.1L771.6 306.8L771.6 319.3L771.6 330.4L771.7 340.0L771.7 347.7L771.7 353.6L771.7 357.4L771.8 359.2L771.8 358.9L771.8 356.5L771.8 352.2L771.9 345.9L771.9 338.0L771.9 328.4L771.9 317.5L772.0 305.4L772.0 292.4L772.0 278.7L772.0 264.6L772.1 250.3L772.1 236.1L772.1 222.3L772.1 209.0L772.2 196.6L772.2 185.2L772.2 175.1L772.2 166.3L772.3 159.0L772.3 153.4L772.3 149.4L772.3 147.2L772.4 146.8L772.4 148.1L772.4 151.1L772.4 155.8L772.5 162.0L772.5 169.7L772.5 178.6L772.5 188.7L772.6 199.8L772.6 211.6L772.6 224.1L772.6 236.9L772.7 250.0L772.7 263.0L772.7 275.8L772.7 288.3L772.8 300.2L772.8 311.3L772.8 321.6L772.8 330.8L772.9 338.9L772.9 345.7L772.9 351.2L772.9 355.3L773.0 358.0L773.0 359.2L773.0 359.0L773.0 357.3L773.1 354.3L773.1 349.9L773.1 344.3L773.1 337.5L773.2 329.6L773.2 320.8L773.2 311.1L773.2 300.8L773.3 289.8L773.3 278.5L773.3 266.9L773.3 255.2L773.4 243.6L773.4 232.0L773.4 220.8L773.4 210.0L773.5 199.8L773.5 190.2L773.5 181.4L773.5 173.4L773.5 166.4L773.6 160.5L773.6 155.6L773.6 151.8L773.6 149.2L773.7 147.7L773.7 147.3L773.7 148.1L773.7 150.0L773.8 152.9L773.8 156.8L773.8 161.7L773.8 167.5L773.9 174.1L773.9 181.5L773.9 189.5L773.9 198.0L774.0 207.1L774.0 216.5L774.0 226.2L774.0 236.1L774.1 246.1L774.1 256.0L774.1 265.9L774.1 275.6L774.2 285.0L774.2 294.1L774.2 302.7L774.2 310.9L774.3 318.5L774.3 325.5L774.3 331.8L774.3 337.4L774.4 342.3L774.4 346.4L774.4 349.8L774.4 352.3L774.5 354.1L774.5 355.0L774.5 355.1L774.5 354.5L774.6 353.1L774.6 350.9L774.6 348.1L774.6 344.5L774.7 340.4L774.7 335.6L774.7 330.3L774.7 324.5L774.8 318.2L774.8 311.6L774.8 304.5L774.8 297.2L774.9 289.7L774.9 282.0L774.9 274.1L774.9 266.2L775.0 258.3L775.0 250.4L775.0 242.6L775.0 234.9L775.1 227.3L775.1 220.0L775.1 213.0L775.1 206.2L775.2 199.7L775.2 193.7L775.2 188.0L775.2 182.7L775.3 177.8L775.3 173.4L775.3 169.4L775.3 165.9L775.4 162.9L775.4 160.4L775.4 158.4L775.4 156.8L775.5 155.8L775.5 155.2L775.5 155.1L775.5 155.5L775.6 156.3L775.6 157.5L775.6 159.2L775.6 161.3L775.7 163.7L775.7 166.6L775.7 169.7L775.7 173.2L775.8 177.0L775.8 181.1L775.8 185.4L775.8 189.9L775.8 194.7L775.9 199.6L775.9 204.7L775.9 209.9L775.9 215.2L776.0 220.6L776.0 226.1L776.0 231.6L776.0 237.1L776.1 242.6L776.1 248.1L776.1 253.6L776.1 259.0L776.2 264.3L776.2 269.5L776.2 274.6L776.2 279.7L776.3 284.5L776.3 289.2L776.3 293.8L776.3 298.2L776.4 302.4L776.4 306.5L776.4 310.3L776.4 314.0L776.5 317.5L776.5 320.7L776.5 323.8L776.5 326.6L776.6 329.2L776.6 331.7L776.6 333.9L776.6 335.9L776.7 337.7L776.7 339.3L776.7 340.6L776.7 341.8L776.8 342.8L776.8 343.6L776.8 344.2L776.8 344.6L776.9 344.9L776.9 344.9L776.9 344.8L776.9 344.6L777.0 344.2L777.0 343.6L777.0 342.9L777.0 342.1L777.1 341.1L777.1 340.0L777.1 338.8L777.1 337.5L777.2 336.1L777.2 334.6L777.2 333.0L777.2 331.3L777.3 329.6L777.3 327.8L777.3 325.9L777.3 323.9L777.4 321.9L777.4 319.9L777.4 317.8L777.4 315.7L777.5 313.6L777.5 311.4L777.5 309.2L777.5 307.0L777.6 304.8L777.6 302.6L777.6 300.4L777.6 298.2L777.7 296.0L777.7 293.8L777.7 291.6L777.7 289.4L777.8 287.2L777.8 285.1L777.8 283.0L777.8 280.9L777.9 278.8L777.9 276.8L777.9 274.8L777.9 272.8L778.0 270.9L778.0 269.0L778.0 267.1L778.0 265.3L778.1 263.5L778.1 261.8L778.1 260.1L778.1 258.4L778.1 256.8L778.2 255.3L778.2 253.7L778.2 252.2L778.2 250.8L778.3 249.4L778.3 248.1L778.3 246.8L778.3 245.5L778.4 244.3L778.4 243.1L778.4 242.0L778.4 240.9L778.5 239.9L778.5 238.9L778.5 237.9L778.5 237.0L778.6 236.2L778.6 235.3L778.6 234.6L778.6 233.8L778.7 233.1L778.7 232.5L778.7 231.9L778.7 231.3L778.8 230.8L778.8 230.3L778.8 229.9L778.8 229.5L778.9 229.1L778.9 228.8L778.9 228.5L778.9 228.2L779.0 228.0L779.0 227.8L779.0 227.7L779.0 227.6L779.1 227.6L779.1 227.5L779.1 227.5L779.1 227.6L779.2 227.7L779.2 227.8L779.2 228.0L779.2 228.2L779.3 228.4L779.3 228.7L779.3 229.0L779.3 229.3L779.4 229.7L779.4 230.1L779.4 230.6L779.4 231.1L779.5 231.6L779.5 232.1L779.5 232.7L779.5 233.4L779.6 234.0L779.6 234.7L779.6 235.5L779.6 236.3L779.7 237.1L779.7 237.9L779.7 238.8L779.7 239.8L779.8 240.7L779.8 241.7L779.8 242.8L779.8 243.8L779.9 244.9L779.9 246.1L779.9 247.2L779.9 248.5L780.0 249.7L780.0 251.0L780.0 252.3L780.0 253.7L780.1 255.0L780.1 256.5L780.1 257.9L780.1 259.4L780.2 260.9L780.2 262.4L780.2 264.0L780.2 265.6L780.3 267.2L780.3 268.9L780.3 270.5L780.3 272.2L780.4 273.9L780.4 275.6L780.4 277.4L780.4 279.2L780.4 280.9L780.5 282.7L780.5 284.5L780.5 286.3L780.5 288.1L780.6 289.9L780.6 291.7L780.6 293.5L780.6 295.3L780.7 297.0L780.7 298.8L780.7 300.5L780.7 302.3L780.8 303.9L780.8 305.6L780.8 307.2L780.8 308.8L780.9 310.4L780.9 311.9L780.9 313.3L780.9 314.7L781.0 316.1L781.0 317.3L781.0 318.5L781.0 319.7L781.1 320.7L781.1 321.7L781.1 322.6L781.1 323.4L781.2 324.1L781.2 324.6L781.2 325.1L781.2 325.5L781.3 325.8L781.3 325.9L781.3 325.9L781.3 325.8L781.4 325.5L781.4 325.2L781.4 324.7L781.4 324.0L781.5 323.2L781.5 322.2L781.5 321.1L781.5 319.9L781.6 318.5L781.6 316.9L781.6 315.2L781.6 313.4L781.7 311.4L781.7 309.2L781.7 306.9L781.7 304.4L781.8 301.8L781.8 299.1L781.8 296.2L781.8 293.2L781.9 290.1L781.9 286.8L781.9 283.4L781.9 280.0L782.0 276.4L782.0 272.7L782.0 269.0L782.0 265.2L782.1 261.3L782.1 257.4L782.1 253.4L782.1 249.4L782.2 245.5L782.2 241.5L782.2 237.5L782.2 233.6L782.3 229.7L782.3 225.9L782.3 222.2L782.3 218.6L782.4 215.0L782.4 211.7L782.4 208.4L782.4 205.3L782.5 202.4L782.5 199.7L782.5 197.2L782.5 194.9L782.6 192.9L782.6 191.1L782.6 189.5L782.6 188.2L782.7 187.3L782.7 186.6L782.7 186.2L782.7 186.1L782.7 186.4L782.8 187.0L782.8 187.8L782.8 189.1L782.8 190.6L782.9 192.5L782.9 194.6L782.9 197.1L782.9 199.9L783.0 203.0L783.0 206.4L783.0 210.0L783.0 213.9L783.1 218.0L783.1 222.3L783.1 226.8L783.1 231.5L783.2 236.3L783.2 241.2L783.2 246.2L783.2 251.3L783.3 256.4L783.3 261.5L783.3 266.5L783.3 271.5L783.4 276.4L783.4 281.1L783.4 285.6L783.4 290.0L783.5 294.1L783.5 297.9L783.5 301.4L783.5 304.6L783.6 307.4L783.6 309.9L783.6 311.9L783.6 313.5L783.7 314.7L783.7 315.4L783.7 315.6L783.7 315.3L783.8 314.6L783.8 313.4L783.8 311.7L783.8 309.5L783.9 306.9L783.9 303.8L783.9 300.3L783.9 296.3L784.0 292.1L784.0 287.4L784.0 282.5L784.0 277.3L784.1 271.9L784.1 266.3L784.1 260.6L784.1 254.8L784.2 249.0L784.2 243.2L784.2 237.5L784.2 231.9L784.3 226.5L784.3 221.4L784.3 216.6L784.3 212.1L784.4 208.0L784.4 204.4L784.4 201.2L784.4 198.6L784.5 196.5L784.5 195.0L784.5 194.2L784.5 193.9L784.6 194.3L784.6 195.3L784.6 196.9L784.6 199.1L784.7 202.0L784.7 205.4L784.7 209.3L784.7 213.8L784.8 218.6L784.8 223.9L784.8 229.6L784.8 235.5L784.9 241.6L784.9 247.9L784.9 254.2L784.9 260.5L785.0 266.8L785.0 272.8L785.0 278.6L785.0 284.1L785.0 289.3L785.1 293.9L785.1 298.0L785.1 301.6L785.1 304.5L785.2 306.7L785.2 308.2L785.2 309.0L785.2 309.0L785.3 308.2L785.3 306.7L785.3 304.5L785.3 301.5L785.4 297.8L785.4 293.5L785.4 288.7L785.4 283.3L785.5 277.4L785.5 271.2L785.5 264.8L785.5 258.2L785.6 251.4L785.6 244.8L785.6 238.2L785.6 231.9L785.7 225.9L785.7 220.3L785.7 215.2L785.7 210.7L785.8 207.0L785.8 203.9L785.8 201.6L785.8 200.2L785.9 199.7L785.9 200.0L785.9 201.2L785.9 203.3L786.0 206.2L786.0 209.9L786.0 214.3L786.0 219.5L786.1 225.2L786.1 231.3L786.1 237.9L786.1 244.7L786.2 251.7L786.2 258.7L786.2 265.5L786.2 272.2L786.3 278.5L786.3 284.3L786.3 289.5L786.3 294.0L786.4 297.8L786.4 300.7L786.4 302.7L786.4 303.7L786.5 303.7L786.5 302.8L786.5 300.9L786.5 298.0L786.6 294.2L786.6 289.6L786.6 284.3L786.6 278.3L786.7 271.8L786.7 265.0L786.7 257.9L786.7 250.7L786.8 243.6L786.8 236.6L786.8 230.0L786.8 224.0L786.9 218.5L786.9 213.8L786.9 210.0L786.9 207.1L787.0 205.3L787.0 204.5L787.0 204.8L787.0 206.2L787.1 208.6L787.1 212.0L787.1 216.4L787.1 221.7L787.2 227.6L787.2 234.1L787.2 241.1L787.2 248.4L787.3 255.7L787.3 263.0L787.3 270.0L787.3 276.6L787.3 282.6L787.4 287.8L787.4 292.2L787.4 295.7L787.4 298.0L787.5 299.2L787.5 299.3L787.5 298.1L787.5 295.8L787.6 292.4L787.6 288.0L787.6 282.7L787.6 276.7L787.7 270.0L787.7 262.8L787.7 255.5L787.7 248.0L787.8 240.7L787.8 233.8L787.8 227.4L787.8 221.7L787.9 216.9L787.9 213.1L787.9 210.4L787.9 208.9L788.0 208.7L788.0 209.7L788.0 212.0L788.0 215.4L788.1 219.9L788.1 225.4L788.1 231.6L788.1 238.5L788.2 245.8L788.2 253.2L788.2 260.7L788.2 267.9L788.3 274.6L788.3 280.7L788.3 285.9L788.3 290.1L788.4 293.1L788.4 294.9L788.4 295.4L788.4 294.6L788.5 292.4L788.5 289.0L788.5 284.5L788.5 279.0L788.6 272.6L788.6 265.7L788.6 258.3L788.6 250.8L788.7 243.4L788.7 236.3L788.7 229.8L788.7 224.1L788.8 219.3L788.8 215.7L788.8 213.4L788.8 212.4L788.9 212.9L788.9 214.7L788.9 217.8L788.9 222.1L789.0 227.5L789.0 233.8L789.0 240.7L789.0 248.0L789.1 255.5L789.1 262.9L789.1 269.9L789.1 276.3L789.2 281.8L789.2 286.3L789.2 289.5L789.2 291.3L789.3 291.8L789.3 290.8L789.3 288.4L789.3 284.6L789.4 279.7L789.4 273.8L789.4 267.1L789.4 259.9L789.5 252.5L789.5 245.1L789.5 238.0L789.5 231.5L789.6 225.9L789.6 221.4L789.6 218.2L789.6 216.3L789.6 215.9L789.7 217.0L789.7 219.6L789.7 223.5L789.7 228.5L789.8 234.6L789.8 241.4L789.8 248.6L789.8 256.0L789.9 263.3L789.9 270.1L789.9 276.1L789.9 281.2L790.0 285.0L790.0 287.5L790.0 288.5L790.0 287.9L790.1 285.9L790.1 282.4L790.1 277.7L790.1 271.9L790.2 265.3L790.2 258.1L790.2 250.8L790.2 243.6L790.3 236.9L790.3 230.9L790.3 225.9L790.3 222.2L790.4 219.9L790.4 219.1L790.4 219.9L790.4 222.2L790.5 225.9L790.5 230.9L790.5 236.8L790.5 243.5L790.6 250.7L790.6 257.9L790.6 264.8L790.6 271.2L790.7 276.6L790.7 280.9L790.7 283.8L790.7 285.3L790.8 285.1L790.8 283.3L790.8 280.1L790.8 275.6L790.9 269.9L790.9 263.5L790.9 256.5L790.9 249.4L791.0 242.5L791.0 236.2L791.0 230.8L791.0 226.5L791.1 223.6L791.1 222.2L791.1 222.4L791.1 224.3L791.2 227.6L791.2 232.2L791.2 237.9L791.2 244.3L791.3 251.2L791.3 258.2L791.3 264.8L791.3 270.8L791.4 275.7L791.4 279.5L791.4 281.7L791.4 282.4L791.5 281.5L791.5 279.0L791.5 275.1L791.5 270.0L791.6 264.0L791.6 257.4L791.6 250.6L791.6 243.9L791.7 237.8L791.7 232.6L791.7 228.6L791.7 226.0L791.8 225.0L791.8 225.6L791.8 227.7L791.8 231.3L791.9 236.2L791.9 242.0L791.9 248.4L791.9 255.1L791.9 261.6L792.0 267.5L792.0 272.6L792.0 276.4L792.0 278.8L792.1 279.7L792.1 278.9L792.1 276.6L792.1 272.8L792.2 267.8L792.2 262.0L792.2 255.7L792.2 249.2L792.3 243.0L792.3 237.4L792.3 232.9L792.3 229.7L792.4 227.9L792.4 227.8L792.4 229.3L792.4 232.2L792.5 236.5L792.5 241.8L792.5 247.8L792.5 254.1L792.6 260.2L792.6 265.9L792.6 270.7L792.6 274.3L792.7 276.4L792.7 277.0L792.7 276.0L792.7 273.5L792.8 269.6L792.8 264.6L792.8 258.9L792.8 252.9L792.9 246.8L792.9 241.3L792.9 236.6L792.9 233.0L793.0 230.9L793.0 230.3L793.0 231.2L793.0 233.7L793.1 237.5L793.1 242.4L793.1 247.9L793.1 253.8L793.2 259.6L793.2 264.9L793.2 269.2L793.2 272.4L793.3 274.2L793.3 274.4L793.3 273.1L793.3 270.3L793.4 266.3L793.4 261.4L793.4 255.9L793.4 250.2L793.5 244.8L793.5 240.0L793.5 236.2L793.5 233.8L793.6 232.7L793.6 233.2L793.6 235.2L793.6 238.5L793.7 242.9L793.7 248.0L793.7 253.5L793.7 258.8L793.8 263.7L793.8 267.7L793.8 270.5L793.8 271.9L793.9 271.9L793.9 270.3L793.9 267.5L793.9 263.5L794.0 258.7L794.0 253.6L794.0 248.4L794.0 243.7L794.1 239.7L794.1 236.9L794.1 235.3L794.1 235.2L794.2 236.6L794.2 239.3L794.2 243.0L794.2 247.6L794.2 252.5L794.3 257.4L794.3 261.9L794.3 265.6L794.3 268.3L794.4 269.6L794.4 269.5L794.4 268.1L794.4 265.4L794.5 261.6L794.5 257.2L794.5 252.5L794.5 247.9L794.6 243.8L794.6 240.5L794.6 238.3L794.6 237.4L794.7 237.9L794.7 239.7L794.7 242.6L794.7 246.4L794.8 250.7L794.8 255.2L794.8 259.4L794.8 263.0L794.9 265.7L794.9 267.2L794.9 267.4L794.9 266.3L795.0 264.1L795.0 260.9L795.0 257.0L795.0 252.8L795.1 248.7L795.1 245.0L795.1 242.1L795.1 240.3L795.2 239.6L795.2 240.2L795.2 242.0L795.2 244.8L795.3 248.3L795.3 252.1L795.3 256.1L795.3 259.6L795.4 262.5L795.4 264.4L795.4 265.3L795.4 264.9L795.5 263.4L795.5 261.0L795.5 257.8L795.5 254.2L795.6 250.6L795.6 247.2L795.6 244.5L795.6 242.6L795.7 241.8L795.7 242.1L795.7 243.5L795.7 245.7L795.8 248.7L795.8 252.0L795.8 255.4L795.8 258.4L795.9 260.9L795.9 262.5L795.9 263.2L795.9 262.8L796.0 261.4L796.0 259.2L796.0 256.4L796.0 253.3L796.1 250.3L796.1 247.6L796.1 245.5L796.1 244.2L796.2 243.9L796.2 244.5L796.2 246.0L796.2 248.2L796.3 250.8L796.3 253.6L796.3 256.3L796.3 258.6L796.4 260.2L796.4 261.0L796.4 261.0L796.4 260.1L796.4 258.5L796.5 256.3L796.5 253.8L796.5 251.3L796.5 249.1L796.6 247.3L796.6 246.2L796.6 245.9L796.6 246.3L796.7 247.5L796.7 249.2L796.7 251.4L796.7 253.6L796.8 255.7L796.8 257.4L796.8 258.6L796.8 259.1L796.9 258.9L796.9 258.1L796.9 256.7L796.9 255.0L797.0 253.1L797.0 251.2L797.0 249.6L797.0 248.5L797.1 247.9L797.1 247.9L797.1 248.5L797.1 249.6L797.2 251.1L797.2 252.7L797.2 254.2L797.2 255.6L797.3 256.6L797.3 257.1L797.3 257.1L797.3 256.7L797.4 255.8L797.4 254.6L797.4 253.4L797.4 252.1L797.5 251.0L797.5 250.2L797.5 249.8L797.5 249.8L797.6 250.2L797.6 250.9L797.6 251.8L797.6 252.8L797.7 253.7L797.7 254.5L797.7 255.0L797.7 255.3L797.8 255.2L797.8 254.9L797.8 254.4L797.8 253.7L797.9 253.0L797.9 252.4L797.9 252.0L797.9 251.7L798.0 251.6L798.0 251.7L798.0 252.0L798.0 252.4L798.1 252.7L798.1 253.1L798.1 253.3L798.1 253.5L798.2 253.5L798.2 253.4L798.2 253.3L798.2 253.2L798.3 253.1L798.3 253.0L798.3 253.0M847.7 253.0L847.7 253.0L847.8 253.0L847.8 253.0L847.8 253.0L847.8 253.0L847.9 253.0L847.9 253.0L847.9 253.0L847.9 253.0L848.0 253.0L848.0 253.0L848.0 253.0L848.0 253.0L848.1 253.0L848.1 253.0L848.1 253.1L848.1 253.1L848.2 253.1L848.2 253.0L848.2 253.0L848.2 253.0L848.3 252.9L848.3 252.9L848.3 252.9L848.3 252.9L848.4 252.9L848.4 253.0L848.4 253.1L848.4 253.2L848.5 253.2L848.5 253.2L848.5 253.2L848.5 253.1L848.6 253.0L848.6 252.9L848.6 252.7L848.6 252.7L848.7 252.6L848.7 252.7L848.7 252.8L848.7 253.0L848.8 253.2L848.8 253.3L848.8 253.5L848.8 253.5L848.9 253.4L848.9 253.3L848.9 253.1L848.9 252.8L849.0 252.6L849.0 252.4L849.0 252.3L849.0 252.4L849.1 252.6L849.1 252.8L849.1 253.2L849.1 253.5L849.1 253.8L849.2 253.9L849.2 253.8L849.2 253.6L849.2 253.3L849.3 252.9L849.3 252.5L849.3 252.1L849.3 251.9L849.4 251.9L849.4 252.1L849.4 252.5L849.4 252.9L849.5 253.5L849.5 253.9L849.5 254.3L849.5 254.4L849.6 254.2L849.6 253.9L849.6 253.3L849.6 252.7L849.7 252.1L849.7 251.6L849.7 251.3L849.7 251.4L849.8 251.7L849.8 252.3L849.8 253.0L849.8 253.8L849.9 254.4L849.9 254.9L849.9 255.0L849.9 254.8L850.0 254.2L850.0 253.5L850.0 252.6L850.0 251.7L850.1 251.0L850.1 250.7L850.1 250.7L850.1 251.1L850.2 251.9L850.2 252.9L850.2 253.9L850.2 254.9L850.3 255.5L850.3 255.8L850.3 255.5L850.3 254.9L850.4 253.9L850.4 252.7L850.4 251.5L850.4 250.6L850.5 250.0L850.5 249.8L850.5 250.2L850.5 251.1L850.6 252.3L850.6 253.7L850.6 255.0L850.6 256.0L850.7 256.6L850.7 256.6L850.7 256.0L850.7 254.9L850.8 253.4L850.8 251.9L850.8 250.5L850.8 249.4L850.9 248.9L850.9 249.0L850.9 249.8L850.9 251.1L851.0 252.7L851.0 254.5L851.0 256.0L851.0 257.1L851.1 257.6L851.1 257.4L851.1 256.5L851.1 255.0L851.2 253.2L851.2 251.3L851.2 249.6L851.2 248.3L851.3 247.8L851.3 248.1L851.3 249.1L851.3 250.7L851.4 252.8L851.4 254.9L851.4 256.8L851.4 258.2L851.4 258.8L851.5 258.5L851.5 257.5L851.5 255.7L851.5 253.5L851.6 251.1L851.6 249.0L851.6 247.4L851.6 246.6L851.7 246.8L851.7 247.8L851.7 249.7L851.7 252.1L851.8 254.7L851.8 257.1L851.8 258.9L851.8 260.0L851.9 260.0L851.9 259.0L851.9 257.2L851.9 254.7L852.0 251.9L852.0 249.2L852.0 247.0L852.0 245.6L852.1 245.2L852.1 245.9L852.1 247.7L852.1 250.2L852.2 253.2L852.2 256.3L852.2 258.9L852.2 260.7L852.3 261.5L852.3 261.2L852.3 259.6L852.3 257.2L852.4 254.1L852.4 250.8L852.4 247.7L852.4 245.3L852.5 243.9L852.5 243.7L852.5 244.8L852.5 247.1L852.6 250.2L852.6 253.7L852.6 257.2L852.6 260.2L852.7 262.3L852.7 263.1L852.7 262.7L852.7 260.9L852.8 258.0L852.8 254.5L852.8 250.6L852.8 247.0L852.9 244.2L852.9 242.4L852.9 242.0L852.9 243.1L853.0 245.4L853.0 248.8L853.0 252.8L853.0 256.9L853.1 260.6L853.1 263.3L853.1 264.8L853.1 264.7L853.2 263.2L853.2 260.3L853.2 256.4L853.2 252.1L853.3 247.8L853.3 244.0L853.3 241.4L853.3 240.2L853.4 240.6L853.4 242.5L853.4 245.8L853.4 250.1L853.5 254.8L853.5 259.3L853.5 263.1L853.5 265.7L853.6 266.8L853.6 266.2L853.6 264.0L853.6 260.4L853.7 255.8L853.7 250.8L853.7 246.0L853.7 242.0L853.7 239.3L853.8 238.1L853.8 238.8L853.8 241.2L853.8 245.0L853.9 249.9L853.9 255.2L853.9 260.3L853.9 264.6L854.0 267.6L854.0 268.9L854.0 268.4L854.0 266.0L854.1 262.1L854.1 257.0L854.1 251.4L854.1 246.0L854.2 241.2L854.2 237.8L854.2 236.1L854.2 236.3L854.3 238.5L854.3 242.3L854.3 247.5L854.3 253.3L854.4 259.2L854.4 264.4L854.4 268.4L854.4 270.8L854.5 271.1L854.5 269.4L854.5 265.8L854.5 260.8L854.6 254.8L854.6 248.5L854.6 242.7L854.6 237.9L854.7 234.8L854.7 233.6L854.7 234.6L854.7 237.6L854.8 242.3L854.8 248.3L854.8 254.8L854.8 261.2L854.9 266.9L854.9 271.0L854.9 273.3L854.9 273.4L855.0 271.3L855.0 267.2L855.0 261.6L855.0 254.9L855.1 248.0L855.1 241.5L855.1 236.2L855.1 232.6L855.2 231.1L855.2 231.9L855.2 234.9L855.2 239.9L855.3 246.3L855.3 253.4L855.3 260.6L855.3 267.1L855.4 272.2L855.4 275.3L855.4 276.2L855.4 274.7L855.5 271.0L855.5 265.4L855.5 258.4L855.5 250.9L855.6 243.4L855.6 236.9L855.6 231.9L855.6 229.0L855.7 228.5L855.7 230.4L855.7 234.6L855.7 240.7L855.8 248.1L855.8 256.1L855.8 263.8L855.8 270.5L855.9 275.6L855.9 278.5L855.9 278.9L855.9 276.8L856.0 272.3L856.0 266.0L856.0 258.3L856.0 250.0L856.0 241.9L856.1 234.8L856.1 229.4L856.1 226.2L856.1 225.6L856.2 227.5L856.2 231.9L856.2 238.4L856.2 246.3L856.3 254.9L856.3 263.4L856.3 271.0L856.3 277.0L856.4 280.8L856.4 282.0L856.4 280.6L856.4 276.5L856.5 270.3L856.5 262.4L856.5 253.5L856.5 244.6L856.6 236.3L856.6 229.5L856.6 224.8L856.6 222.6L856.7 223.1L856.7 226.4L856.7 232.1L856.7 239.7L856.8 248.6L856.8 258.0L856.8 267.0L856.8 274.8L856.9 280.8L856.9 284.3L856.9 285.1L856.9 283.1L857.0 278.3L857.0 271.4L857.0 262.7L857.0 253.2L857.1 243.5L857.1 234.6L857.1 227.2L857.1 222.0L857.2 219.4L857.2 219.7L857.2 222.9L857.2 228.7L857.3 236.6L857.3 245.9L857.3 256.0L857.3 265.8L857.4 274.7L857.4 281.8L857.4 286.5L857.4 288.4L857.5 287.4L857.5 283.5L857.5 277.1L857.5 268.5L857.6 258.7L857.6 248.3L857.6 238.1L857.6 229.2L857.7 222.1L857.7 217.5L857.7 215.8L857.7 217.1L857.8 221.3L857.8 228.1L857.8 237.0L857.8 247.2L857.9 258.0L857.9 268.5L857.9 277.7L857.9 285.1L858.0 290.0L858.0 292.0L858.0 290.8L858.0 286.7L858.1 279.9L858.1 271.0L858.1 260.5L858.1 249.5L858.2 238.6L858.2 228.7L858.2 220.7L858.2 215.1L858.3 212.4L858.3 212.8L858.3 216.3L858.3 222.7L858.3 231.4L858.4 241.8L858.4 253.1L858.4 264.5L858.4 275.1L858.5 284.1L858.5 290.8L858.5 294.7L858.5 295.6L858.6 293.2L858.6 287.9L858.6 279.9L858.6 269.9L858.7 258.5L858.7 246.7L858.7 235.3L858.7 225.1L858.8 216.9L858.8 211.2L858.8 208.6L858.8 209.2L858.9 212.9L858.9 219.6L858.9 228.7L858.9 239.6L859.0 251.5L859.0 263.6L859.0 275.1L859.0 285.0L859.1 292.7L859.1 297.7L859.1 299.5L859.1 298.1L859.2 293.5L859.2 286.0L859.2 276.2L859.2 264.8L859.3 252.4L859.3 240.0L859.3 228.5L859.3 218.5L859.4 210.9L859.4 206.1L859.4 204.5L859.4 206.2L859.5 211.1L859.5 218.8L859.5 228.9L859.5 240.7L859.6 253.3L859.6 266.0L859.6 277.9L859.6 288.3L859.7 296.3L859.7 301.5L859.7 303.5L859.7 302.2L859.8 297.6L859.8 290.1L859.8 280.1L859.8 268.3L859.9 255.5L859.9 242.4L859.9 229.9L859.9 218.9L860.0 210.0L860.0 203.8L860.0 200.8L860.0 201.0L860.1 204.6L860.1 211.3L860.1 220.6L860.1 232.0L860.2 244.9L860.2 258.3L860.2 271.4L860.2 283.4L860.3 293.6L860.3 301.4L860.3 306.1L860.3 307.6L860.4 305.8L860.4 300.6L860.4 292.6L860.4 282.0L860.5 269.7L860.5 256.3L860.5 242.6L860.5 229.4L860.6 217.7L860.6 208.0L860.6 201.0L860.6 197.0L860.6 196.4L860.7 199.2L860.7 205.1L860.7 213.9L860.7 225.1L860.8 238.0L860.8 251.8L860.8 265.7L860.8 279.0L860.9 290.8L860.9 300.4L860.9 307.4L860.9 311.2L861.0 311.7L861.0 308.8L861.0 302.7L861.0 293.8L861.1 282.4L861.1 269.4L861.1 255.4L861.1 241.1L861.2 227.5L861.2 215.3L861.2 205.1L861.2 197.6L861.3 193.1L861.3 191.9L861.3 194.2L861.3 199.6L861.4 208.1L861.4 219.1L861.4 231.9L861.4 246.0L861.5 260.5L861.5 274.6L861.5 287.7L861.5 298.9L861.6 307.7L861.6 313.5L861.6 316.2L861.6 315.5L861.7 311.4L861.7 304.2L861.7 294.3L861.7 282.1L861.8 268.4L861.8 253.8L861.8 239.1L861.8 225.1L861.9 212.5L861.9 201.9L861.9 194.0L861.9 189.1L862.0 187.4L862.0 189.2L862.0 194.2L862.0 202.3L862.1 212.9L862.1 225.7L862.1 239.8L862.1 254.7L862.2 269.6L862.2 283.6L862.2 296.2L862.2 306.7L862.3 314.5L862.3 319.3L862.3 320.8L862.3 319.0L862.4 313.9L862.4 305.8L862.4 295.0L862.4 282.2L862.5 267.9L862.5 252.9L862.5 237.8L862.5 223.4L862.6 210.3L862.6 199.3L862.6 190.8L862.6 185.3L862.7 183.0L862.7 184.0L862.7 188.3L862.7 195.6L862.8 205.7L862.8 218.0L862.8 232.0L862.8 247.1L862.9 262.4L862.9 277.4L862.9 291.2L862.9 303.4L862.9 313.3L863.0 320.4L863.0 324.4L863.0 325.3L863.0 322.8L863.1 317.1L863.1 308.5L863.1 297.4L863.1 284.3L863.2 269.7L863.2 254.4L863.2 238.9L863.2 224.0L863.3 210.4L863.3 198.6L863.3 189.1L863.3 182.5L863.4 178.9L863.4 178.6L863.4 181.5L863.4 187.5L863.5 196.4L863.5 207.8L863.5 221.1L863.5 235.8L863.6 251.3L863.6 266.9L863.6 282.0L863.6 295.9L863.7 308.0L863.7 317.8L863.7 324.8L863.7 328.9L863.8 329.9L863.8 327.6L863.8 322.2L863.8 313.9L863.9 303.1L863.9 290.2L863.9 275.8L863.9 260.3L864.0 244.6L864.0 229.1L864.0 214.6L864.0 201.6L864.1 190.6L864.1 182.2L864.1 176.5L864.1 173.9L864.2 174.5L864.2 178.2L864.2 184.8L864.2 194.2L864.3 205.9L864.3 219.5L864.3 234.4L864.3 250.1L864.4 266.0L864.4 281.3L864.4 295.6L864.4 308.3L864.5 318.9L864.5 326.9L864.5 332.2L864.5 334.4L864.6 333.6L864.6 329.7L864.6 322.9L864.6 313.4L864.7 301.6L864.7 288.0L864.7 273.1L864.7 257.4L864.8 241.5L864.8 226.0L864.8 211.4L864.8 198.4L864.9 187.4L864.9 178.7L864.9 172.7L864.9 169.6L865.0 169.6L865.0 172.5L865.0 178.4L865.0 186.9L865.1 197.9L865.1 210.8L865.1 225.2L865.1 240.7L865.1 256.6L865.2 272.4L865.2 287.6L865.2 301.5L865.2 313.8L865.3 324.0L865.3 331.8L865.3 336.8L865.3 338.9L865.4 338.1L865.4 334.4L865.4 327.9L865.4 318.8L865.5 307.5L865.5 294.3L865.5 279.7L865.5 264.2L865.6 248.2L865.6 232.5L865.6 217.3L865.6 203.4L865.7 191.1L865.7 180.8L865.7 172.8L865.7 167.5L865.8 165.0L865.8 165.3L865.8 168.5L865.8 174.5L865.9 183.0L865.9 193.7L865.9 206.4L865.9 220.6L866.0 235.8L866.0 251.6L866.0 267.5L866.0 282.9L866.1 297.4L866.1 310.5L866.1 321.8L866.1 331.0L866.2 337.8L866.2 342.0L866.2 343.4L866.2 342.0L866.3 337.9L866.3 331.2L866.3 322.1L866.3 310.8L866.4 297.8L866.4 283.5L866.4 268.2L866.4 252.4L866.5 236.7L866.5 221.4L866.5 207.0L866.5 194.0L866.6 182.7L866.6 173.5L866.6 166.6L866.6 162.3L866.7 160.6L866.7 161.5L866.7 165.1L866.7 171.3L866.8 179.8L866.8 190.5L866.8 202.9L866.8 216.7L866.9 231.7L866.9 247.2L866.9 262.9L866.9 278.3L867.0 293.1L867.0 306.7L867.0 318.8L867.0 329.1L867.1 337.3L867.1 343.2L867.1 346.6L867.1 347.5L867.2 345.7L867.2 341.5L867.2 334.8L867.2 325.9L867.3 315.0L867.3 302.5L867.3 288.6L867.3 273.8L867.4 258.4L867.4 242.8L867.4 227.6L867.4 212.9L867.4 199.4L867.5 187.2L867.5 176.7L867.5 168.3L867.5 162.0L867.6 158.1L867.6 156.6L867.6 157.5L867.6 161.0L867.7 166.8L867.7 174.7L867.7 184.7L867.7 196.4L867.8 209.5L867.8 223.7L867.8 238.6L867.8 253.9L867.9 269.2L867.9 284.1L867.9 298.2L867.9 311.2L868.0 322.8L868.0 332.7L868.0 340.7L868.0 346.5L868.1 350.1L868.1 351.3L868.1 350.2L868.1 346.7L868.2 341.0L868.2 333.3L868.2 323.6L868.2 312.2L868.3 299.5L868.3 285.7L868.3 271.1L868.3 256.1L868.4 241.0L868.4 226.2L868.4 212.0L868.4 198.8L868.5 186.8L868.5 176.3L868.5 167.6L868.5 160.7L868.6 156.0L868.6 153.5L868.6 153.1L868.6 155.0L868.7 159.1L868.7 165.3L868.7 173.4L868.7 183.2L868.8 194.6L868.8 207.2L868.8 220.9L868.8 235.2L868.9 249.9L868.9 264.7L868.9 279.2L868.9 293.2L869.0 306.3L869.0 318.2L869.0 328.8L869.0 337.8L869.1 345.0L869.1 350.2L869.1 353.5L869.1 354.6L869.2 353.6L869.2 350.6L869.2 345.5L869.2 338.6L869.3 329.9L869.3 319.7L869.3 308.1L869.3 295.4L869.4 281.8L869.4 267.7L869.4 253.3L869.4 238.9L869.5 224.8L869.5 211.2L869.5 198.5L869.5 186.9L869.6 176.5L869.6 167.7L869.6 160.5L869.6 155.1L869.7 151.6L869.7 150.1L869.7 150.5L869.7 152.9L869.7 157.1L869.8 163.2L869.8 171.0L869.8 180.3L869.8 191.0L869.9 202.8L869.9 215.5L869.9 228.9L869.9 242.8L870.0 256.8L870.0 270.7L870.0 284.3L870.0 297.4L870.1 309.6L870.1 320.8L870.1 330.7L870.1 339.3L870.2 346.3L870.2 351.6L870.2 355.2L870.2 357.0L870.3 357.0L870.3 355.1L870.3 351.5L870.3 346.1L870.4 339.2L870.4 330.8L870.4 321.0L870.4 310.1L870.5 298.2L870.5 285.6L870.5 272.5L870.5 259.0L870.6 245.4L870.6 232.0L870.6 219.0L870.6 206.5L870.7 194.8L870.7 184.1L870.7 174.5L870.7 166.3L870.8 159.4L870.8 154.1L870.8 150.3L870.8 148.3L870.9 147.9L870.9 149.2L870.9 152.1L870.9 156.6L871.0 162.7L871.0 170.1L871.0 178.9L871.0 188.7L871.1 199.6L871.1 211.3L871.1 223.6L871.1 236.3L871.2 249.3L871.2 262.3L871.2 275.2L871.2 287.7L871.3 299.6L871.3 310.9L871.3 321.2L871.3 330.6L871.4 338.7L871.4 345.6L871.4 351.1L871.4 355.2L871.5 357.8L871.5 358.9L871.5 358.4L871.5 356.4L871.6 352.9L871.6 348.0L871.6 341.8L871.6 334.3L871.7 325.7L871.7 316.1L871.7 305.6L871.7 294.4L871.8 282.6L871.8 270.5L871.8 258.1L871.8 245.7L871.9 233.4L871.9 221.4L871.9 209.9L871.9 198.9L872.0 188.7L872.0 179.4L872.0 171.0L872.0 163.8L872.0 157.8L872.1 153.0L872.1 149.6L872.1 147.5L872.1 146.7L872.2 147.4L872.2 149.4L872.2 152.8L872.2 157.4L872.3 163.2L872.3 170.1L872.3 178.1L872.3 187.0L872.4 196.7L872.4 207.1L872.4 218.0L872.4 229.4L872.5 241.0L872.5 252.7L872.5 264.4L872.5 276.0L872.6 287.2L872.6 298.0L872.6 308.3L872.6 317.9L872.7 326.6L872.7 334.5L872.7 341.4L872.7 347.3L872.8 352.0L872.8 355.6L872.8 358.0L872.8 359.2L872.9 359.1L872.9 357.9L872.9 355.4L872.9 351.8L873.0 347.1L873.0 341.4L873.0 334.6L873.0 327.0L873.1 318.6L873.1 309.5L873.1 299.7L873.1 289.5L873.2 278.9L873.2 268.1L873.2 257.1L873.2 246.1L873.3 235.2L873.3 224.5L873.3 214.1L873.3 204.2L873.4 194.8L873.4 186.0L873.4 178.0L873.4 170.7L873.5 164.3L873.5 158.9L873.5 154.4L873.5 150.9L873.6 148.4L873.6 147.0L873.6 146.7L873.6 147.5L873.7 149.3L873.7 152.1L873.7 155.9L873.7 160.6L873.8 166.2L873.8 172.7L873.8 179.9L873.8 187.8L873.9 196.3L873.9 205.3L873.9 214.8L873.9 224.6L874.0 234.6L874.0 244.8L874.0 255.1L874.0 265.3L874.1 275.3L874.1 285.2L874.1 294.7L874.1 303.8L874.2 312.4L874.2 320.5L874.2 328.0L874.2 334.7L874.3 340.8L874.3 346.0L874.3 350.4L874.3 354.0L874.3 356.6L874.4 358.4L874.4 359.2L874.4 359.2L874.4 358.2L874.5 356.3L874.5 353.6L874.5 350.0L874.5 345.6L874.6 340.5L874.6 334.7L874.6 328.2L874.6 321.1L874.7 313.4L874.7 305.3L874.7 296.8L874.7 288.0L874.8 278.9L874.8 269.6L874.8 260.2L874.8 250.8L874.9 241.4L874.9 232.1L874.9 223.0L874.9 214.2L875.0 205.7L875.0 197.6L875.0 189.9L875.0 182.7L875.1 176.0L875.1 170.0L875.1 164.6L875.1 159.8L875.2 155.8L875.2 152.5L875.2 149.9L875.2 148.1L875.3 147.0L875.3 146.7L875.3 147.2L875.3 148.4L875.4 150.3L875.4 153.0L875.4 156.3L875.4 160.3L875.5 165.0L875.5 170.2L875.5 176.0L875.5 182.3L875.6 189.1L875.6 196.3L875.6 203.8L875.6 211.6L875.7 219.7L875.7 228.0L875.7 236.5L875.7 245.0L875.8 253.5L875.8 262.0L875.8 270.5L875.8 278.8L875.9 286.9L875.9 294.8L875.9 302.4L875.9 309.6L876.0 316.5L876.0 323.0L876.0 329.1L876.0 334.6L876.1 339.7L876.1 344.2L876.1 348.1L876.1 351.5L876.2 354.3L876.2 356.5L876.2 358.0L876.2 359.0L876.3 359.3L876.3 359.0L876.3 358.1L876.3 356.6L876.4 354.6L876.4 351.9L876.4 348.8L876.4 345.1L876.5 340.9L876.5 336.2L876.5 331.1L876.5 325.5L876.6 319.6L876.6 313.4L876.6 306.9L876.6 300.1L876.6 293.0L876.7 285.8L876.7 278.4L876.7 270.9L876.7 263.4L876.8 255.8L876.8 248.2L876.8 240.7L876.8 233.3L876.9 225.9L876.9 218.8L876.9 211.8L876.9 205.0L877.0 198.5L877.0 192.3L877.0 186.4L877.0 180.9L877.1 175.7L877.1 170.8L877.1 166.4L877.1 162.4L877.2 158.8L877.2 155.7L877.2 153.0L877.2 150.8L877.3 149.1L877.3 147.8L877.3 147.0L877.3 146.7L877.4 146.9L877.4 147.5L877.4 148.5L877.4 150.0L877.5 152.0L877.5 154.4L877.5 157.2L877.5 160.3L877.6 163.9L877.6 167.8L877.6 172.1L877.6 176.6L877.7 181.5L877.7 186.6L877.7 192.0L877.7 197.6L877.8 203.4L877.8 209.4L877.8 215.6L877.8 221.8L877.9 228.2L877.9 234.6L877.9 241.1L877.9 247.6L878.0 254.1L878.0 260.6L878.0 267.0L878.0 273.4L878.1 279.6L878.1 285.8L878.1 291.8L878.1 297.6L878.2 303.2L878.2 308.7L878.2 314.0L878.2 319.0L878.3 323.7L878.3 328.3L878.3 332.5L878.3 336.5L878.4 340.1L878.4 343.5L878.4 346.5L878.4 349.3L878.5 351.7L878.5 353.8L878.5 355.5L878.5 356.9L878.6 358.0L878.6 358.8L878.6 359.2L878.6 359.3L878.7 359.1L878.7 358.5L878.7 357.6L878.7 356.5L878.8 355.0L878.8 353.2L878.8 351.2L878.8 348.8L878.9 346.2L878.9 343.4L878.9 340.3L878.9 336.9L878.9 333.4L879.0 329.6L879.0 325.6L879.0 321.5L879.0 317.2L879.1 312.7L879.1 308.1L879.1 303.4L879.1 298.6L879.2 293.6L879.2 288.6L879.2 283.5L879.2 278.4L879.3 273.2L879.3 267.9L879.3 262.7L879.3 257.5L879.4 252.2L879.4 247.0L879.4 241.9L879.4 236.8L879.5 231.7L879.5 226.7L879.5 221.8L879.5 217.0L879.6 212.3L879.6 207.7L879.6 203.2L879.6 198.9L879.7 194.7L879.7 190.6L879.7 186.7L879.7 182.9L879.8 179.3L879.8 175.9L879.8 172.7L879.8 169.6L879.9 166.7L879.9 164.0L879.9 161.5L879.9 159.2L880.0 157.1L880.0 155.2L880.0 153.4L880.0 151.9L880.1 150.6L880.1 149.5L880.1 148.5L880.1 147.8L880.2 147.2L880.2 146.9L880.2 146.7L880.2 146.7L880.3 146.9L880.3 147.3L880.3 147.9L880.3 148.7L880.4 149.6L880.4 150.7L880.4 151.9L880.4 153.3L880.5 154.9L880.5 156.6L880.5 158.4L880.5 160.4L880.6 162.5L880.6 164.8L880.6 167.1L880.6 169.6L880.7 172.2L880.7 174.9L880.7 177.7L880.7 180.6L880.8 183.6L880.8 186.6L880.8 189.7L880.8 192.9L880.9 196.2L880.9 199.5L880.9 202.9L880.9 206.3L881.0 209.8L881.0 213.3L881.0 216.8L881.0 220.4L881.1 223.9L881.1 227.5L881.1 231.1L881.1 234.7L881.2 238.3L881.2 241.9L881.2 245.5L881.2 249.1L881.2 252.6L881.3 256.2L881.3 259.7L881.3 263.2L881.3 266.6L881.4 270.0L881.4 273.4L881.4 276.7L881.4 280.0L881.5 283.2L881.5 286.4L881.5 289.6L881.5 292.6L881.6 295.7L881.6 298.6L881.6 301.5L881.6 304.4L881.7 307.1L881.7 309.8L881.7 312.5L881.7 315.0L881.8 317.5L881.8 319.9L881.8 322.3L881.8 324.6L881.9 326.8L881.9 328.9L881.9 330.9L881.9 332.9L882.0 334.8L882.0 336.6L882.0 338.4L882.0 340.1L882.1 341.7L882.1 343.2L882.1 344.6L882.1 346.0L882.2 347.3L882.2 348.6L882.2 349.7L882.2 350.8L882.3 351.8L882.3 352.8L882.3 353.6L882.3 354.4L882.4 355.2L882.4 355.9L882.4 356.5L882.4 357.0L882.5 357.5L882.5 357.9L882.5 358.3L882.5 358.6L882.6 358.9L882.6 359.0L882.6 359.2L882.6 359.3L882.7 359.3L882.7 359.3L882.7 359.2L882.7 359.1L882.8 358.9L882.8 358.7L882.8 358.5L882.8 358.2L882.9 357.9L882.9 357.5L882.9 357.1L882.9 356.6L883.0 356.2L883.0 355.7L883.0 355.1L883.0 354.5L883.1 353.9L883.1 353.3L883.1 352.6L883.1 352.0L883.2 351.3L883.2 350.5L883.2 349.8L883.2 349.0L883.3 348.2L883.3 347.4L883.3 346.6L883.3 345.7L883.4 344.9L883.4 344.0L883.4 343.1L883.4 342.2L883.5 341.3L883.5 340.4L883.5 339.5L883.5 338.6L883.5 337.7L883.6 336.7L883.6 335.8L883.6 334.9L883.6 333.9L883.7 333.0L883.7 332.0L883.7 331.1L883.7 330.1L883.8 329.2L883.8 328.3L883.8 327.3L883.8 326.4L883.9 325.5L883.9 324.5L883.9 323.6L883.9 322.7L884.0 321.8L884.0 320.9L884.0 320.0L884.0 319.2L884.1 318.3L884.1 317.4L884.1 316.6L884.1 315.8L884.2 314.9L884.2 314.1L884.2 313.3L884.2 312.6L884.3 311.8L884.3 311.0L884.3 310.3L884.3 309.5L884.4 308.8L884.4 308.1L884.4 307.4L884.4 306.8L884.5 306.1L884.5 305.5L884.5 304.8L884.5 304.2L884.6 303.6L884.6 303.1L884.6 302.5L884.6 302.0L884.7 301.5L884.7 300.9L884.7 300.5L884.7 300.0L884.8 299.5L884.8 299.1L884.8 298.7L884.8 298.3L884.9 297.9L884.9 297.6L884.9 297.2L884.9 296.9L885.0 296.6L885.0 296.3L885.0 296.1L885.0 295.8L885.1 295.6L885.1 295.4L885.1 295.2L885.1 295.0L885.2 294.9L885.2 294.7L885.2 294.6L885.2 294.6L885.3 294.5L885.3 294.4L885.3 294.4L885.3 294.4L885.4 294.4L885.4 294.4L885.4 294.5L885.4 294.6L885.5 294.6L885.5 294.7L885.5 294.9L885.5 295.0L885.6 295.2L885.6 295.4L885.6 295.6L885.6 295.8L885.7 296.1L885.7 296.3L885.7 296.6L885.7 296.9L885.8 297.2L885.8 297.6L885.8 297.9L885.8 298.3L885.8 298.7L885.9 299.1L885.9 299.5L885.9 300.0L885.9 300.5L886.0 300.9L886.0 301.5L886.0 302.0L886.0 302.5L886.1 303.1L886.1 303.6L886.1 304.2L886.1 304.8L886.2 305.5L886.2 306.1L886.2 306.8L886.2 307.4L886.3 308.1L886.3 308.8L886.3 309.5L886.3 310.3L886.4 311.0L886.4 311.8L886.4 312.6L886.4 313.3L886.5 314.1L886.5 314.9L886.5 315.8L886.5 316.6L886.6 317.4L886.6 318.3L886.6 319.2L886.6 320.0L886.7 320.9L886.7 321.8L886.7 322.7L886.7 323.6L886.8 324.5L886.8 325.5L886.8 326.4L886.8 327.3L886.9 328.3L886.9 329.2L886.9 330.1L886.9 331.1L887.0 332.0L887.0 333.0L887.0 333.9L887.0 334.9L887.1 335.8L887.1 336.7L887.1 337.7L887.1 338.6L887.2 339.5L887.2 340.4L887.2 341.3L887.2 342.2L887.3 343.1L887.3 344.0L887.3 344.9L887.3 345.7L887.4 346.6L887.4 347.4L887.4 348.2L887.4 349.0L887.5 349.8L887.5 350.5L887.5 351.3L887.5 352.0L887.6 352.6L887.6 353.3L887.6 353.9L887.6 354.5L887.7 355.1L887.7 355.7L887.7 356.2L887.7 356.6L887.8 357.1L887.8 357.5L887.8 357.9L887.8 358.2L887.9 358.5L887.9 358.7L887.9 358.9L887.9 359.1L888.0 359.2L888.0 359.3L888.0 359.3L888.0 359.3L888.0 359.2L888.1 359.0L888.1 358.9L888.1 358.6L888.1 358.3L888.2 357.9L888.2 357.5L888.2 357.0L888.2 356.5L888.3 355.9L888.3 355.2L888.3 354.4L888.3 353.6L888.4 352.8L888.4 351.8L888.4 350.8L888.4 349.7L888.5 348.6L888.5 347.3L888.5 346.0L888.5 344.6L888.6 343.2L888.6 341.7L888.6 340.1L888.6 338.4L888.7 336.6L888.7 334.8L888.7 332.9L888.7 330.9L888.8 328.9L888.8 326.8L888.8 324.6L888.8 322.3L888.9 319.9L888.9 317.5L888.9 315.0L888.9 312.5L889.0 309.8L889.0 307.1L889.0 304.4L889.0 301.5L889.1 298.6L889.1 295.7L889.1 292.6L889.1 289.6L889.2 286.4L889.2 283.2L889.2 280.0L889.2 276.7L889.3 273.4L889.3 270.0L889.3 266.6L889.3 263.2L889.4 259.7L889.4 256.2L889.4 252.6L889.4 249.1L889.5 245.5L889.5 241.9L889.5 238.3L889.5 234.7L889.6 231.1L889.6 227.5L889.6 223.9L889.6 220.4L889.7 216.8L889.7 213.3L889.7 209.8L889.7 206.3L889.8 202.9L889.8 199.5L889.8 196.2L889.8 192.9L889.9 189.7L889.9 186.6L889.9 183.6L889.9 180.6L890.0 177.7L890.0 174.9L890.0 172.2L890.0 169.6L890.1 167.1L890.1 164.8L890.1 162.5L890.1 160.4L890.2 158.4L890.2 156.6L890.2 154.9L890.2 153.3L890.3 151.9L890.3 150.7L890.3 149.6L890.3 148.7L890.3 147.9L890.4 147.3L890.4 146.9L890.4 146.7L890.4 146.7L890.5 146.9L890.5 147.2L890.5 147.8L890.5 148.5L890.6 149.5L890.6 150.6L890.6 151.9L890.6 153.4L890.7 155.2L890.7 157.1L890.7 159.2L890.7 161.5L890.8 164.0L890.8 166.7L890.8 169.6L890.8 172.7L890.9 175.9L890.9 179.3L890.9 182.9L890.9 186.7L891.0 190.6L891.0 194.7L891.0 198.9L891.0 203.2L891.1 207.7L891.1 212.3L891.1 217.0L891.1 221.8L891.2 226.7L891.2 231.7L891.2 236.8L891.2 241.9L891.3 247.0L891.3 252.2L891.3 257.5L891.3 262.7L891.4 267.9L891.4 273.2L891.4 278.4L891.4 283.5L891.5 288.6L891.5 293.6L891.5 298.6L891.5 303.4L891.6 308.1L891.6 312.7L891.6 317.2L891.6 321.5L891.7 325.6L891.7 329.6L891.7 333.4L891.7 336.9L891.8 340.3L891.8 343.4L891.8 346.2L891.8 348.8L891.9 351.2L891.9 353.2L891.9 355.0L891.9 356.5L892.0 357.6L892.0 358.5L892.0 359.1L892.0 359.3L892.1 359.2L892.1 358.8L892.1 358.0L892.1 356.9L892.2 355.5L892.2 353.8L892.2 351.7L892.2 349.3L892.3 346.5L892.3 343.5L892.3 340.1L892.3 336.5L892.4 332.5L892.4 328.3L892.4 323.7L892.4 319.0L892.5 314.0L892.5 308.7L892.5 303.2L892.5 297.6L892.6 291.8L892.6 285.8L892.6 279.6L892.6 273.4L892.6 267.0L892.7 260.6L892.7 254.1L892.7 247.6L892.7 241.1L892.8 234.6L892.8 228.2L892.8 221.8L892.8 215.6L892.9 209.4L892.9 203.4L892.9 197.6L892.9 192.0L893.0 186.6L893.0 181.5L893.0 176.6L893.0 172.1L893.1 167.8L893.1 163.9L893.1 160.3L893.1 157.2L893.2 154.4L893.2 152.0L893.2 150.0L893.2 148.5L893.3 147.5L893.3 146.9L893.3 146.7L893.3 147.0L893.4 147.8L893.4 149.1L893.4 150.8L893.4 153.0L893.5 155.7L893.5 158.8L893.5 162.4L893.5 166.4L893.6 170.8L893.6 175.7L893.6 180.9L893.6 186.4L893.7 192.3L893.7 198.5L893.7 205.0L893.7 211.8L893.8 218.8L893.8 225.9L893.8 233.3L893.8 240.7L893.9 248.2L893.9 255.8L893.9 263.4L893.9 270.9L894.0 278.4L894.0 285.8L894.0 293.0L894.0 300.1L894.1 306.9L894.1 313.4L894.1 319.6L894.1 325.5L894.2 331.1L894.2 336.2L894.2 340.9L894.2 345.1L894.3 348.8L894.3 351.9L894.3 354.6L894.3 356.6L894.4 358.1L894.4 359.0L894.4 359.3L894.4 359.0L894.5 358.0L894.5 356.5L894.5 354.3L894.5 351.5L894.6 348.1L894.6 344.2L894.6 339.7L894.6 334.6L894.7 329.1L894.7 323.0L894.7 316.5L894.7 309.6L894.8 302.4L894.8 294.8L894.8 286.9L894.8 278.8L894.9 270.5L894.9 262.0L894.9 253.5L894.9 245.0L894.9 236.5L895.0 228.0L895.0 219.7L895.0 211.6L895.0 203.8L895.1 196.3L895.1 189.1L895.1 182.3L895.1 176.0L895.2 170.2L895.2 165.0L895.2 160.3L895.2 156.3L895.3 153.0L895.3 150.3L895.3 148.4L895.3 147.2L895.4 146.7L895.4 147.0L895.4 148.1L895.4 149.9L895.5 152.5L895.5 155.8L895.5 159.8L895.5 164.6L895.6 170.0L895.6 176.0L895.6 182.7L895.6 189.9L895.7 197.6L895.7 205.7L895.7 214.2L895.7 223.0L895.8 232.1L895.8 241.4L895.8 250.8L895.8 260.2L895.9 269.6L895.9 278.9L895.9 288.0L895.9 296.8L896.0 305.3L896.0 313.4L896.0 321.1L896.0 328.2L896.1 334.7L896.1 340.5L896.1 345.6L896.1 350.0L896.2 353.6L896.2 356.3L896.2 358.2L896.2 359.2L896.3 359.2L896.3 358.4L896.3 356.6L896.3 354.0L896.4 350.4L896.4 346.0L896.4 340.8L896.4 334.7L896.5 328.0L896.5 320.5L896.5 312.4L896.5 303.8L896.6 294.7L896.6 285.2L896.6 275.3L896.6 265.3L896.7 255.1L896.7 244.8L896.7 234.6L896.7 224.6L896.8 214.8L896.8 205.3L896.8 196.3L896.8 187.8L896.9 179.9L896.9 172.7L896.9 166.2L896.9 160.6L897.0 155.9L897.0 152.1L897.0 149.3L897.0 147.5L897.1 146.7L897.1 147.0L897.1 148.4L897.1 150.9L897.2 154.4L897.2 158.9L897.2 164.3L897.2 170.7L897.2 178.0L897.3 186.0L897.3 194.8L897.3 204.2L897.3 214.1L897.4 224.5L897.4 235.2L897.4 246.1L897.4 257.1L897.5 268.1L897.5 278.9L897.5 289.5L897.5 299.7L897.6 309.4L897.6 318.6L897.6 327.0L897.6 334.6L897.7 341.3L897.7 347.0L897.7 351.7L897.7 355.3L897.8 357.7L897.8 359.0L897.8 359.0L897.8 357.8L897.9 355.4L897.9 351.8L897.9 347.1L897.9 341.2L898.0 334.3L898.0 326.4L898.0 317.7L898.0 308.1L898.1 297.9L898.1 287.1L898.1 275.9L898.1 264.4L898.2 252.7L898.2 241.0L898.2 229.5L898.2 218.2L898.3 207.3L898.3 197.0L898.3 187.3L898.3 178.5L898.4 170.6L898.4 163.7L898.4 157.9L898.4 153.3L898.5 150.0L898.5 148.1L898.5 147.4L898.5 148.2L898.6 150.3L898.6 153.7L898.6 158.5L898.6 164.5L898.7 171.7L898.7 179.9L898.7 189.2L898.7 199.3L898.8 210.2L898.8 221.7L898.8 233.6L898.8 245.8L898.9 258.1L898.9 270.3L898.9 282.3L898.9 294.0L899.0 305.1L899.0 315.4L899.0 324.9L899.0 333.5L899.1 340.8L899.1 347.0L899.1 351.8L899.1 355.2L899.2 357.2L899.2 357.6L899.2 356.5L899.2 354.0L899.3 349.9L899.3 344.5L899.3 337.6L899.3 329.6L899.4 320.3L899.4 310.1L899.4 299.0L899.4 287.2L899.5 274.9L899.5 262.2L899.5 249.4L899.5 236.6L899.5 224.0L899.6 211.9L899.6 200.4L899.6 189.7L899.6 180.0L899.7 171.4L899.7 164.1L899.7 158.2L899.7 153.7L899.8 150.9L899.8 149.6L899.8 150.0L899.8 152.1L899.9 155.8L899.9 161.0L899.9 167.8L899.9 175.9L900.0 185.4L900.0 195.9L900.0 207.4L900.0 219.6L900.1 232.4L900.1 245.6L900.1 258.9L900.1 272.1L900.2 285.0L900.2 297.3L900.2 309.0L900.2 319.6L900.3 329.2L900.3 337.4L900.3 344.2L900.3 349.4L900.4 352.9L900.4 354.7L900.4 354.7L900.4 353.0L900.5 349.4L900.5 344.2L900.5 337.3L900.5 328.9L900.6 319.2L900.6 308.3L900.6 296.3L900.6 283.6L900.7 270.3L900.7 256.7L900.7 243.0L900.7 229.5L900.8 216.4L900.8 204.0L900.8 192.5L900.8 182.1L900.9 173.1L900.9 165.5L900.9 159.6L900.9 155.5L901.0 153.2L901.0 152.8L901.0 154.3L901.0 157.7L901.1 163.0L901.1 170.0L901.1 178.6L901.1 188.7L901.2 200.0L901.2 212.4L901.2 225.6L901.2 239.3L901.3 253.3L901.3 267.3L901.3 281.0L901.3 294.1L901.4 306.4L901.4 317.7L901.4 327.6L901.4 336.0L901.5 342.7L901.5 347.6L901.5 350.6L901.5 351.5L901.6 350.3L901.6 347.2L901.6 342.1L901.6 335.1L901.7 326.4L901.7 316.1L901.7 304.6L901.7 291.9L901.8 278.4L901.8 264.3L901.8 250.0L901.8 235.8L901.8 221.9L901.9 208.8L901.9 196.6L901.9 185.6L901.9 176.1L902.0 168.3L902.0 162.4L902.0 158.4L902.0 156.6L902.1 157.0L902.1 159.4L902.1 164.0L902.1 170.6L902.2 179.1L902.2 189.2L902.2 200.8L902.2 213.5L902.3 227.2L902.3 241.5L902.3 256.0L902.3 270.4L902.4 284.5L902.4 297.8L902.4 310.0L902.4 320.9L902.5 330.2L902.5 337.6L902.5 343.1L902.5 346.4L902.6 347.4L902.6 346.2L902.6 342.8L902.6 337.2L902.7 329.5L902.7 320.0L902.7 308.9L902.7 296.4L902.8 282.8L902.8 268.5L902.8 253.9L902.8 239.2L902.9 224.9L902.9 211.3L902.9 198.8L902.9 187.6L903.0 178.1L903.0 170.5L903.0 165.0L903.0 161.7L903.1 160.8L903.1 162.2L903.1 166.0L903.1 172.0L903.2 180.1L903.2 190.1L903.2 201.8L903.2 214.8L903.3 228.7L903.3 243.3L903.3 258.1L903.3 272.8L903.4 287.0L903.4 300.2L903.4 312.1L903.4 322.5L903.5 330.9L903.5 337.3L903.5 341.3L903.5 343.0L903.6 342.1L903.6 338.9L903.6 333.3L903.6 325.4L903.7 315.6L903.7 304.0L903.7 291.1L903.7 277.1L903.8 262.4L903.8 247.5L903.8 232.7L903.8 218.6L903.9 205.4L903.9 193.6L903.9 183.6L903.9 175.5L904.0 169.7L904.0 166.2L904.0 165.3L904.0 167.0L904.1 171.2L904.1 177.7L904.1 186.5L904.1 197.1L904.1 209.5L904.2 223.1L904.2 237.6L904.2 252.5L904.2 267.4L904.3 281.8L904.3 295.4L904.3 307.7L904.3 318.3L904.4 326.9L904.4 333.2L904.4 337.0L904.4 338.3L904.5 337.0L904.5 333.0L904.5 326.6L904.5 317.9L904.6 307.2L904.6 294.8L904.6 281.2L904.6 266.6L904.7 251.7L904.7 236.8L904.7 222.5L904.7 209.1L904.8 197.2L904.8 187.1L904.8 179.1L904.8 173.6L904.9 170.6L904.9 170.3L904.9 172.7L904.9 177.7L905.0 185.1L905.0 194.8L905.0 206.4L905.0 219.5L905.1 233.7L905.1 248.5L905.1 263.5L905.1 278.0L905.2 291.7L905.2 304.1L905.2 314.7L905.2 323.2L905.3 329.2L905.3 332.7L905.3 333.4L905.3 331.4L905.4 326.7L905.4 319.4L905.4 309.9L905.4 298.4L905.5 285.3L905.5 271.1L905.5 256.4L905.5 241.5L905.6 227.1L905.6 213.6L905.6 201.6L905.6 191.4L905.7 183.4L905.7 178.0L905.7 175.2L905.7 175.3L905.8 178.2L905.8 183.8L905.8 191.9L905.8 202.2L905.9 214.3L905.9 227.9L905.9 242.3L905.9 257.1L906.0 271.7L906.0 285.6L906.0 298.2L906.0 309.1L906.1 317.9L906.1 324.2L906.1 327.8L906.1 328.6L906.2 326.5L906.2 321.6L906.2 314.1L906.2 304.3L906.3 292.5L906.3 279.2L906.3 265.0L906.3 250.3L906.4 235.8L906.4 222.0L906.4 209.4L906.4 198.6L906.4 190.0L906.5 183.8L906.5 180.4L906.5 179.9L906.5 182.3L906.6 187.6L906.6 195.4L906.6 205.5L906.6 217.5L906.7 231.0L906.7 245.2L906.7 259.8L906.7 274.0L906.8 287.3L906.8 299.2L906.8 309.1L906.8 316.7L906.9 321.7L906.9 323.7L906.9 322.9L906.9 319.1L907.0 312.5L907.0 303.5L907.0 292.4L907.0 279.6L907.1 265.8L907.1 251.5L907.1 237.2L907.1 223.7L907.2 211.5L907.2 201.1L907.2 193.0L907.2 187.5L907.3 184.8L907.3 185.2L907.3 188.4L907.3 194.5L907.4 203.2L907.4 214.0L907.4 226.5L907.4 240.1L907.5 254.2L907.5 268.3L907.5 281.6L907.5 293.6L907.6 303.7L907.6 311.5L907.6 316.7L907.6 318.9L907.7 318.1L907.7 314.4L907.7 307.9L907.7 298.9L907.8 287.8L907.8 275.2L907.8 261.6L907.8 247.6L907.9 233.9L907.9 221.2L907.9 210.0L907.9 200.8L908.0 194.2L908.0 190.3L908.0 189.4L908.0 191.6L908.1 196.6L908.1 204.3L908.1 214.3L908.1 226.1L908.2 239.2L908.2 252.9L908.2 266.5L908.2 279.4L908.3 291.0L908.3 300.7L908.3 308.0L908.3 312.6L908.4 314.3L908.4 312.9L908.4 308.6L908.4 301.5L908.5 292.0L908.5 280.7L908.5 268.0L908.5 254.6L908.6 241.1L908.6 228.4L908.6 216.9L908.6 207.3L908.6 200.1L908.7 195.6L908.7 194.0L908.7 195.5L908.7 199.9L908.8 207.1L908.8 216.6L908.8 227.9L908.8 240.5L908.9 253.7L908.9 266.8L908.9 279.1L908.9 290.0L909.0 298.9L909.0 305.3L909.0 308.9L909.0 309.6L909.1 307.2L909.1 301.9L909.1 294.0L909.1 284.0L909.2 272.3L909.2 259.7L909.2 246.7L909.2 234.2L909.3 222.7L909.3 212.9L909.3 205.4L909.3 200.5L909.4 198.6L909.4 199.6L909.4 203.6L909.4 210.4L909.5 219.4L909.5 230.3L909.5 242.5L909.5 255.1L909.6 267.6L909.6 279.2L909.6 289.2L909.6 297.1L909.7 302.5L909.7 305.1L909.7 304.6L909.7 301.2L909.8 295.0L909.8 286.5L909.8 276.0L909.8 264.3L909.9 251.9L909.9 239.7L909.9 228.3L909.9 218.5L910.0 210.7L910.0 205.5L910.0 203.1L910.0 203.6L910.1 207.1L910.1 213.3L910.1 221.9L910.1 232.3L910.2 243.8L910.2 255.9L910.2 267.7L910.2 278.5L910.3 287.8L910.3 294.9L910.3 299.3L910.3 301.0L910.4 299.6L910.4 295.4L910.4 288.6L910.4 279.7L910.5 269.1L910.5 257.6L910.5 245.9L910.5 234.7L910.6 224.7L910.6 216.5L910.6 210.7L910.6 207.6L910.7 207.4L910.7 210.1L910.7 215.5L910.7 223.3L910.8 232.9L910.8 243.8L910.8 255.2L910.8 266.4L910.9 276.6L910.9 285.3L910.9 291.8L910.9 295.7L910.9 296.8L911.0 295.1L911.0 290.6L911.0 283.6L911.0 274.6L911.1 264.3L911.1 253.3L911.1 242.3L911.1 232.1L911.2 223.4L911.2 216.7L911.2 212.6L911.2 211.1L911.3 212.5L911.3 216.7L911.3 223.3L911.3 231.9L911.4 241.8L911.4 252.5L911.4 263.1L911.4 273.0L911.5 281.4L911.5 287.8L911.5 291.7L911.5 292.9L911.6 291.3L911.6 287.1L911.6 280.4L911.6 271.9L911.7 262.1L911.7 251.7L911.7 241.5L911.7 232.2L911.8 224.4L911.8 218.8L911.8 215.6L911.8 215.1L911.9 217.4L911.9 222.2L911.9 229.2L911.9 237.9L912.0 247.7L912.0 257.7L912.0 267.3L912.0 275.9L912.1 282.6L912.1 287.2L912.1 289.1L912.1 288.4L912.2 285.1L912.2 279.4L912.2 271.7L912.2 262.7L912.3 253.1L912.3 243.5L912.3 234.7L912.3 227.4L912.4 222.0L912.4 219.1L912.4 218.8L912.4 221.1L912.5 225.8L912.5 232.5L912.5 240.8L912.5 250.0L912.6 259.3L912.6 268.1L912.6 275.6L912.6 281.3L912.7 284.7L912.7 285.6L912.7 284.0L912.7 279.9L912.8 273.7L912.8 265.9L912.8 257.2L912.8 248.2L912.9 239.7L912.9 232.3L912.9 226.6L912.9 223.1L913.0 222.0L913.0 223.5L913.0 227.3L913.0 233.2L913.1 240.7L913.1 249.1L913.1 257.7L913.1 265.9L913.2 272.9L913.2 278.3L913.2 281.5L913.2 282.3L913.2 280.7L913.3 276.8L913.3 270.9L913.3 263.6L913.3 255.4L913.4 247.2L913.4 239.5L913.4 233.0L913.4 228.3L913.5 225.7L913.5 225.5L913.5 227.6L913.5 231.9L913.6 237.9L913.6 245.2L913.6 253.1L913.6 261.0L913.7 268.0L913.7 273.7L913.7 277.5L913.7 279.2L913.8 278.5L913.8 275.6L913.8 270.7L913.8 264.4L913.9 257.0L913.9 249.4L913.9 242.2L913.9 236.1L914.0 231.4L914.0 228.8L914.0 228.4L914.0 230.2L914.1 234.0L914.1 239.5L914.1 246.2L914.1 253.4L914.2 260.5L914.2 266.9L914.2 271.9L914.2 275.1L914.3 276.3L914.3 275.3L914.3 272.2L914.3 267.4L914.4 261.3L914.4 254.5L914.4 247.6L914.4 241.4L914.5 236.2L914.5 232.7L914.5 231.2L914.5 231.7L914.6 234.3L914.6 238.6L914.6 244.2L914.6 250.6L914.7 257.2L914.7 263.2L914.7 268.3L914.7 271.8L914.8 273.4L914.8 273.1L914.8 270.8L914.8 266.8L914.9 261.5L914.9 255.4L914.9 249.2L914.9 243.4L915.0 238.6L915.0 235.3L915.0 233.8L915.0 234.3L915.1 236.5L915.1 240.4L915.1 245.5L915.1 251.3L915.2 257.2L915.2 262.6L915.2 266.9L915.2 269.8L915.3 271.0L915.3 270.3L915.3 267.8L915.3 263.9L915.4 258.9L915.4 253.3L915.4 247.8L915.4 242.9L915.5 239.1L915.5 236.8L915.5 236.2L915.5 237.4L915.5 240.2L915.6 244.2L915.6 249.2L915.6 254.5L915.6 259.5L915.7 263.8L915.7 266.9L915.7 268.5L915.7 268.4L915.8 266.6L915.8 263.5L915.8 259.2L915.8 254.4L915.9 249.4L915.9 245.0L915.9 241.4L915.9 239.2L916.0 238.5L916.0 239.4L916.0 241.7L916.0 245.3L916.1 249.7L916.1 254.3L916.1 258.8L916.1 262.5L916.2 265.1L916.2 266.4L916.2 266.1L916.2 264.4L916.3 261.4L916.3 257.5L916.3 253.2L916.3 248.9L916.4 245.2L916.4 242.4L916.4 240.8L916.4 240.7L916.5 241.9L916.5 244.4L916.5 247.9L916.5 251.9L916.6 255.9L916.6 259.6L916.6 262.4L916.6 264.1L916.7 264.4L916.7 263.5L916.7 261.3L916.7 258.2L916.8 254.5L916.8 250.8L916.8 247.3L916.8 244.6L916.9 242.9L916.9 242.5L916.9 243.3L916.9 245.2L917.0 248.1L917.0 251.5L917.0 255.0L917.0 258.2L917.1 260.7L917.1 262.3L917.1 262.7L917.1 261.9L917.2 260.0L917.2 257.4L917.2 254.2L917.2 251.0L917.3 248.0L917.3 245.8L917.3 244.4L917.3 244.2L917.4 245.1L917.4 246.9L917.4 249.4L917.4 252.4L917.5 255.3L917.5 257.9L917.5 259.9L917.5 260.9L917.6 260.9L917.6 259.9L917.6 258.1L917.6 255.6L917.7 252.9L917.7 250.2L917.7 248.0L917.7 246.4L917.8 245.7L917.8 246.0L917.8 247.2L917.8 249.1L917.8 251.4L917.9 254.0L917.9 256.3L917.9 258.1L917.9 259.3L918.0 259.6L918.0 259.0L918.0 257.6L918.0 255.7L918.1 253.4L918.1 251.2L918.1 249.2L918.1 247.8L918.2 247.1L918.2 247.3L918.2 248.1L918.2 249.7L918.3 251.6L918.3 253.7L918.3 255.6L918.3 257.1L918.4 258.1L918.4 258.3L918.4 257.8L918.4 256.6L918.5 255.0L918.5 253.1L918.5 251.3L918.5 249.8L918.6 248.7L918.6 248.3L918.6 248.5L918.6 249.4L918.7 250.7L918.7 252.3L918.7 254.0L918.7 255.5L918.8 256.5L918.8 257.1L918.8 257.0L918.8 256.4L918.9 255.3L918.9 254.0L918.9 252.5L918.9 251.1L919.0 250.1L919.0 249.5L919.0 249.4L919.0 249.9L919.1 250.8L919.1 252.0L919.1 253.3L919.1 254.5L919.2 255.4L919.2 256.0L919.2 256.1L919.2 255.8L919.3 255.0L919.3 254.0L919.3 252.9L919.3 251.8L919.4 250.9L919.4 250.4L919.4 250.3L919.4 250.6L919.5 251.2L919.5 252.1L919.5 253.1L919.5 254.0L919.6 254.8L919.6 255.2L919.6 255.3L919.6 255.0L919.7 254.5L919.7 253.7L919.7 252.9L919.7 252.1L919.8 251.5L919.8 251.1L919.8 251.1L919.8 251.3L919.9 251.8L919.9 252.5L919.9 253.2L919.9 253.8L920.0 254.3L920.0 254.6L920.0 254.6L920.0 254.3L920.1 253.9L920.1 253.3L920.1 252.7L920.1 252.2L920.1 251.9L920.2 251.7L920.2 251.8L920.2 252.0L920.2 252.4L920.3 252.9L920.3 253.4L920.3 253.7L920.3 254.0L920.4 254.0L920.4 253.9L920.4 253.7L920.4 253.3L920.5 253.0L920.5 252.6L920.5 252.4L920.5 252.2L920.6 252.2L920.6 252.3L920.6 252.6L920.6 252.9L920.7 253.1L920.7 253.4L920.7 253.5L920.7 253.6L920.8 253.6L920.8 253.4L920.8 253.2L920.8 253.0L920.9 252.8L920.9 252.7L920.9 252.6L920.9 252.6L921.0 252.7L921.0 252.8L921.0 252.9L921.0 253.1L921.1 253.2L921.1 253.3L921.1 253.3L921.1 253.3L921.2 253.2L921.2 253.1L921.2 253.0L921.2 252.9L921.3 252.9L921.3 252.8L921.3 252.8L921.3 252.9L921.4 252.9L921.4 253.0L921.4 253.0L921.4 253.1L921.5 253.1L921.5 253.1L921.5 253.1L921.5 253.0L921.6 253.0L921.6 253.0L921.6 253.0L921.6 253.0L921.7 253.0L921.7 253.0L921.7 253.0L921.7 253.0L921.8 253.0L921.8 253.0L921.8 253.0L921.8 253.0L921.9 253.0L921.9 253.0L921.9 253.0L921.9 253.0L921.9 253.0" stroke="#ff00ff" stroke-width=".5" fill="none" stroke-linejoin="round"/>
<path d="M617.50 125.4V380.0H1007.10" stroke="#17191b" stroke-width=".8" fill="none"/>
<path d="M625.17 380.0v1.2M649.90 380.0v1.2M674.63 380.0v1.2M699.36 380.0v1.2M724.09 380.0v1.2M748.82 380.0v1.2M773.55 380.0v1.2M798.28 380.0v1.2M823.01 380.0v1.2M847.74 380.0v1.2M872.47 380.0v1.2M897.20 380.0v1.2M921.93 380.0v1.2M946.66 380.0v1.2M971.39 380.0v1.2M996.12 380.0v1.2M617.50 359.30h-1.2M617.50 338.04h-1.2M617.50 316.78h-1.2M617.50 295.52h-1.2M617.50 274.26h-1.2M617.50 253.00h-1.2M617.50 231.74h-1.2M617.50 210.48h-1.2M617.50 189.22h-1.2M617.50 167.96h-1.2M617.50 146.70h-1.2M617.50 125.44h-1.2" stroke="#17191b" stroke-width=".6" fill="none"/>
<path d="M598.20 115.00L598.20 398.20" stroke="#41464b" stroke-width="0.7"/>
<path d="M824.500 397.500H1019" stroke="#41464b" stroke-width=".6" stroke-dasharray="1 .8"/>
<rect x="180.95" y="398.55" width="642.60" height="189.10" fill="#232629" stroke="#3b7ea6" stroke-width="0.7"/>
<rect x="181.30" y="398.90" width="641.90" height="11.60" fill="#31363b"/>
<path d="M181.30 410.60L823.20 410.60" stroke="#5a5e62" stroke-width="0.6"/>
<rect x="181.30" y="422.10" width="641.90" height="11.50" fill="#31363b"/>
<path d="M218.70 398.90L218.70 410.60" stroke="#5a5e62" stroke-width="0.6"/>
<path d="M256.60 398.90L256.60 410.60" stroke="#5a5e62" stroke-width="0.6"/>
<path d="M294.50 398.90L294.50 410.60" stroke="#5a5e62" stroke-width="0.6"/>
<path d="M332.40 398.90L332.40 410.60" stroke="#5a5e62" stroke-width="0.6"/>
<path d="M370.30 398.90L370.30 410.60" stroke="#5a5e62" stroke-width="0.6"/>
<path d="M408.20 398.90L408.20 410.60" stroke="#5a5e62" stroke-width="0.6"/>
<path d="M446.10 398.90L446.10 410.60" stroke="#5a5e62" stroke-width="0.6"/>
<path d="M484.00 398.90L484.00 410.60" stroke="#5a5e62" stroke-width="0.6"/>
<path d="M521.90 398.90L521.90 410.60" stroke="#5a5e62" stroke-width="0.6"/>
<path d="M559.80 398.90L559.80 410.60" stroke="#5a5e62" stroke-width="0.6"/>
<path d="M597.70 398.90L597.70 410.60" stroke="#5a5e62" stroke-width="0.6"/>
<rect x="863.65" y="410.35" width="113.00" height="64.90" fill="none" stroke="#5a5e62" stroke-width="0.7" rx="1"/>
<rect x="898.45" y="408.00" width="43.40" height="4.00" fill="#31363b"/>
<rect x="896.75" y="421.65" width="46.90" height="11.80" fill="none" stroke="#5e6266" stroke-width="0.7" rx="1"/>
<rect x="896.75" y="436.65" width="46.90" height="11.80" fill="none" stroke="#5e6266" stroke-width="0.7" rx="1"/>
<rect x="896.75" y="451.65" width="46.90" height="11.80" fill="none" stroke="#5e6266" stroke-width="0.7" rx="1"/>
<rect x="863.65" y="485.65" width="112.80" height="89.50" fill="none" stroke="#5a5e62" stroke-width="0.7" rx="1"/>
<rect x="892.25" y="483.30" width="55.60" height="4.00" fill="#31363b"/>
<rect x="876.65" y="495.65" width="37.70" height="10.60" fill="none" stroke="#43484d" stroke-width="0.7" rx="1"/>
<svg x="885.50" y="497.45" width="6.8" height="6.8" viewBox="0 0 12 12"><path d="M6 .8 11.200 6.200H8.400v5H3.600v-5H.8z" fill="#e6e8e9"/></svg>
<rect x="926.25" y="495.65" width="37.50" height="10.60" fill="none" stroke="#43484d" stroke-width="0.7" rx="1"/>
<svg x="935.00" y="497.45" width="6.8" height="6.8" viewBox="0 0 12 12"><path d="M6 11.200 11.200 5.800H8.400v-5H3.600v5H.8z" fill="#e6e8e9"/></svg>
<rect x="876.65" y="519.65" width="37.70" height="10.70" fill="none" stroke="#43484d" stroke-width="0.7" rx="1"/>
<rect x="926.25" y="519.65" width="37.50" height="10.70" fill="none" stroke="#43484d" stroke-width="0.7" rx="1"/>
<svg x="929.60" y="522.00" width="5.8" height="5.8" viewBox="0 0 12 12"><circle cx="6" cy="6" r="4.800" fill="#d5d7d9"/></svg>
<rect x="876.65" y="544.35" width="37.70" height="11.00" fill="none" stroke="#5e6266" stroke-width="0.7" rx="1"/>
<svg x="880.10" y="546.85" width="5.8" height="5.8" viewBox="0 0 12 12"><rect x=".8" y=".8" width="10.400" height="10.400" rx="1" fill="#59c21c"/><path d="M4 6h4M6 4v4" stroke="#e8ffd8" stroke-width="1.400"/></svg>
<rect x="926.25" y="544.35" width="37.50" height="11.00" fill="none" stroke="#5e6266" stroke-width="0.7" rx="1"/></svg>
<div class="t" style="left:57.20px;width:300px;text-align:center;top:380.79px;height:7.68px;line-height:7.68px;font-size:4.8px;color:#eceded;font-weight:400;">-10</div>
<div class="t" style="left:81.90px;width:300px;text-align:center;top:380.79px;height:7.68px;line-height:7.68px;font-size:4.8px;color:#eceded;font-weight:400;">0</div>
<div class="t" style="left:106.60px;width:300px;text-align:center;top:380.79px;height:7.68px;line-height:7.68px;font-size:4.8px;color:#eceded;font-weight:400;">10</div>
<div class="t" style="left:131.30px;width:300px;text-align:center;top:380.79px;height:7.68px;line-height:7.68px;font-size:4.8px;color:#eceded;font-weight:400;">20</div>
<div class="t" style="left:156.00px;width:300px;text-align:center;top:380.79px;height:7.68px;line-height:7.68px;font-size:4.8px;color:#eceded;font-weight:400;">30</div>
<div class="t" style="left:180.70px;width:300px;text-align:center;top:380.79px;height:7.68px;line-height:7.68px;font-size:4.8px;color:#eceded;font-weight:400;">40</div>
<div class="t" style="left:205.40px;width:300px;text-align:center;top:380.79px;height:7.68px;line-height:7.68px;font-size:4.8px;color:#eceded;font-weight:400;">50</div>
<div class="t" style="left:230.10px;width:300px;text-align:center;top:380.79px;height:7.68px;line-height:7.68px;font-size:4.8px;color:#eceded;font-weight:400;">60</div>
<div class="t" style="left:254.80px;width:300px;text-align:center;top:380.79px;height:7.68px;line-height:7.68px;font-size:4.8px;color:#eceded;font-weight:400;">70</div>
<div class="t" style="left:279.50px;width:300px;text-align:center;top:380.79px;height:7.68px;line-height:7.68px;font-size:4.8px;color:#eceded;font-weight:400;">80</div>
<div class="t" style="left:304.20px;width:300px;text-align:center;top:380.79px;height:7.68px;line-height:7.68px;font-size:4.8px;color:#eceded;font-weight:400;">90</div>
<div class="t" style="left:328.90px;width:300px;text-align:center;top:380.79px;height:7.68px;line-height:7.68px;font-size:4.8px;color:#eceded;font-weight:400;">100</div>
<div class="t" style="left:353.60px;width:300px;text-align:center;top:380.79px;height:7.68px;line-height:7.68px;font-size:4.8px;color:#eceded;font-weight:400;">110</div>
<div class="t" style="left:378.30px;width:300px;text-align:center;top:380.79px;height:7.68px;line-height:7.68px;font-size:4.8px;color:#eceded;font-weight:400;">120</div>
<div class="t" style="left:403.00px;width:300px;text-align:center;top:380.79px;height:7.68px;line-height:7.68px;font-size:4.8px;color:#eceded;font-weight:400;">130</div>
<div class="t" style="left:427.70px;width:300px;text-align:center;top:380.79px;height:7.68px;line-height:7.68px;font-size:4.8px;color:#eceded;font-weight:400;">140</div>
<div class="t" style="left:-102.90px;width:300px;text-align:right;top:355.39px;height:7.68px;line-height:7.68px;font-size:4.8px;color:#eceded;font-weight:400;">-1</div>
<div class="t" style="left:-102.90px;width:300px;text-align:right;top:334.13px;height:7.68px;line-height:7.68px;font-size:4.8px;color:#eceded;font-weight:400;">-0.8</div>
<div class="t" style="left:-102.90px;width:300px;text-align:right;top:312.87px;height:7.68px;line-height:7.68px;font-size:4.8px;color:#eceded;font-weight:400;">-0.6</div>
<div class="t" style="left:-102.90px;width:300px;text-align:right;top:291.61px;height:7.68px;line-height:7.68px;font-size:4.8px;color:#eceded;font-weight:400;">-0.4</div>
<div class="t" style="left:-102.90px;width:300px;text-align:right;top:270.35px;height:7.68px;line-height:7.68px;font-size:4.8px;color:#eceded;font-weight:400;">-0.2</div>
<div class="t" style="left:-102.90px;width:300px;text-align:right;top:249.09px;height:7.68px;line-height:7.68px;font-size:4.8px;color:#eceded;font-weight:400;">0</div>
<div class="t" style="left:-102.90px;width:300px;text-align:right;top:227.83px;height:7.68px;line-height:7.68px;font-size:4.8px;color:#eceded;font-weight:400;">0.2</div>
<div class="t" style="left:-102.90px;width:300px;text-align:right;top:206.57px;height:7.68px;line-height:7.68px;font-size:4.8px;color:#eceded;font-weight:400;">0.4</div>
<div class="t" style="left:-102.90px;width:300px;text-align:right;top:185.31px;height:7.68px;line-height:7.68px;font-size:4.8px;color:#eceded;font-weight:400;">0.6</div>
<div class="t" style="left:-102.90px;width:300px;text-align:right;top:164.05px;height:7.68px;line-height:7.68px;font-size:4.8px;color:#eceded;font-weight:400;">0.8</div>
<div class="t" style="left:-102.90px;width:300px;text-align:right;top:142.79px;height:7.68px;line-height:7.68px;font-size:4.8px;color:#eceded;font-weight:400;">1</div>
<div class="t" style="left:-102.90px;width:300px;text-align:right;top:121.53px;height:7.68px;line-height:7.68px;font-size:4.8px;color:#eceded;font-weight:400;">1.2</div>
<div class="t" style="left:244.50px;width:300px;text-align:center;top:115.42px;height:8.96px;line-height:8.96px;font-size:5.6px;color:#eff0f1;font-weight:400;">发射信号——I路[时域]</div>
<div class="t" style="left:243.10px;width:300px;text-align:center;top:387.02px;height:7.84px;line-height:7.84px;font-size:4.9px;color:#eff0f1;font-weight:400;">时间(μs)</div>
<div class="t" style="left:165.70px;top:248.00px;width:40px;height:8px;line-height:8px;text-align:center;font-size:5px;color:#d4d6d8;transform:rotate(-90deg)">幅度/V</div>
<div class="t" style="left:475.17px;width:300px;text-align:center;top:380.79px;height:7.68px;line-height:7.68px;font-size:4.8px;color:#eceded;font-weight:400;">-10</div>
<div class="t" style="left:499.90px;width:300px;text-align:center;top:380.79px;height:7.68px;line-height:7.68px;font-size:4.8px;color:#eceded;font-weight:400;">0</div>
<div class="t" style="left:524.63px;width:300px;text-align:center;top:380.79px;height:7.68px;line-height:7.68px;font-size:4.8px;color:#eceded;font-weight:400;">10</div>
<div class="t" style="left:549.36px;width:300px;text-align:center;top:380.79px;height:7.68px;line-height:7.68px;font-size:4.8px;color:#eceded;font-weight:400;">20</div>
<div class="t" style="left:574.09px;width:300px;text-align:center;top:380.79px;height:7.68px;line-height:7.68px;font-size:4.8px;color:#eceded;font-weight:400;">30</div>
<div class="t" style="left:598.82px;width:300px;text-align:center;top:380.79px;height:7.68px;line-height:7.68px;font-size:4.8px;color:#eceded;font-weight:400;">40</div>
<div class="t" style="left:623.55px;width:300px;text-align:center;top:380.79px;height:7.68px;line-height:7.68px;font-size:4.8px;color:#eceded;font-weight:400;">50</div>
<div class="t" style="left:648.28px;width:300px;text-align:center;top:380.79px;height:7.68px;line-height:7.68px;font-size:4.8px;color:#eceded;font-weight:400;">60</div>
<div class="t" style="left:673.01px;width:300px;text-align:center;top:380.79px;height:7.68px;line-height:7.68px;font-size:4.8px;color:#eceded;font-weight:400;">70</div>
<div class="t" style="left:697.74px;width:300px;text-align:center;top:380.79px;height:7.68px;line-height:7.68px;font-size:4.8px;color:#eceded;font-weight:400;">80</div>
<div class="t" style="left:722.47px;width:300px;text-align:center;top:380.79px;height:7.68px;line-height:7.68px;font-size:4.8px;color:#eceded;font-weight:400;">90</div>
<div class="t" style="left:747.20px;width:300px;text-align:center;top:380.79px;height:7.68px;line-height:7.68px;font-size:4.8px;color:#eceded;font-weight:400;">100</div>
<div class="t" style="left:771.93px;width:300px;text-align:center;top:380.79px;height:7.68px;line-height:7.68px;font-size:4.8px;color:#eceded;font-weight:400;">110</div>
<div class="t" style="left:796.66px;width:300px;text-align:center;top:380.79px;height:7.68px;line-height:7.68px;font-size:4.8px;color:#eceded;font-weight:400;">120</div>
<div class="t" style="left:821.39px;width:300px;text-align:center;top:380.79px;height:7.68px;line-height:7.68px;font-size:4.8px;color:#eceded;font-weight:400;">130</div>
<div class="t" style="left:846.12px;width:300px;text-align:center;top:380.79px;height:7.68px;line-height:7.68px;font-size:4.8px;color:#eceded;font-weight:400;">140</div>
<div class="t" style="left:315.10px;width:300px;text-align:right;top:355.39px;height:7.68px;line-height:7.68px;font-size:4.8px;color:#eceded;font-weight:400;">-1</div>
<div class="t" style="left:315.10px;width:300px;text-align:right;top:334.13px;height:7.68px;line-height:7.68px;font-size:4.8px;color:#eceded;font-weight:400;">-0.8</div>
<div class="t" style="left:315.10px;width:300px;text-align:right;top:312.87px;height:7.68px;line-height:7.68px;font-size:4.8px;color:#eceded;font-weight:400;">-0.6</div>
<div class="t" style="left:315.10px;width:300px;text-align:right;top:291.61px;height:7.68px;line-height:7.68px;font-size:4.8px;color:#eceded;font-weight:400;">-0.4</div>
<div class="t" style="left:315.10px;width:300px;text-align:right;top:270.35px;height:7.68px;line-height:7.68px;font-size:4.8px;color:#eceded;font-weight:400;">-0.2</div>
<div class="t" style="left:315.10px;width:300px;text-align:right;top:249.09px;height:7.68px;line-height:7.68px;font-size:4.8px;color:#eceded;font-weight:400;">0</div>
<div class="t" style="left:315.10px;width:300px;text-align:right;top:227.83px;height:7.68px;line-height:7.68px;font-size:4.8px;color:#eceded;font-weight:400;">0.2</div>
<div class="t" style="left:315.10px;width:300px;text-align:right;top:206.57px;height:7.68px;line-height:7.68px;font-size:4.8px;color:#eceded;font-weight:400;">0.4</div>
<div class="t" style="left:315.10px;width:300px;text-align:right;top:185.31px;height:7.68px;line-height:7.68px;font-size:4.8px;color:#eceded;font-weight:400;">0.6</div>
<div class="t" style="left:315.10px;width:300px;text-align:right;top:164.05px;height:7.68px;line-height:7.68px;font-size:4.8px;color:#eceded;font-weight:400;">0.8</div>
<div class="t" style="left:315.10px;width:300px;text-align:right;top:142.79px;height:7.68px;line-height:7.68px;font-size:4.8px;color:#eceded;font-weight:400;">1</div>
<div class="t" style="left:315.10px;width:300px;text-align:right;top:121.53px;height:7.68px;line-height:7.68px;font-size:4.8px;color:#eceded;font-weight:400;">1.2</div>
<div class="t" style="left:662.30px;width:300px;text-align:center;top:115.42px;height:8.96px;line-height:8.96px;font-size:5.6px;color:#eff0f1;font-weight:400;">发射信号——Q路[时域]</div>
<div class="t" style="left:661.10px;width:300px;text-align:center;top:387.02px;height:7.84px;line-height:7.84px;font-size:4.9px;color:#eff0f1;font-weight:400;">时间(μs)</div>
<div class="t" style="left:583.70px;top:248.00px;width:40px;height:8px;line-height:8px;text-align:center;font-size:5px;color:#d4d6d8;transform:rotate(-90deg)">幅度/V</div>
<div class="t" style="left:182.80px;top:400.47px;height:9.76px;line-height:9.76px;font-size:6.1px;color:#eff0f1;font-weight:700;">脉冲类型</div>
<div class="t" style="left:182.30px;top:412.17px;height:9.76px;line-height:9.76px;font-size:6.1px;color:#eff0f1;font-weight:400;">矩形</div>
<div class="t" style="left:182.30px;top:423.67px;height:9.76px;line-height:9.76px;font-size:6.1px;color:#eff0f1;font-weight:400;">梯形</div>
<div class="t" style="left:182.30px;top:435.17px;height:9.76px;line-height:9.76px;font-size:6.1px;color:#eff0f1;font-weight:400;">升余弦</div>
<div class="t" style="left:220.70px;top:400.47px;height:9.76px;line-height:9.76px;font-size:6.1px;color:#eff0f1;font-weight:700;">脉冲个数</div>
<div class="t" style="left:220.20px;top:412.17px;height:9.76px;line-height:9.76px;font-size:6.1px;color:#eff0f1;font-weight:400;">1</div>
<div class="t" style="left:220.20px;top:423.67px;height:9.76px;line-height:9.76px;font-size:6.1px;color:#eff0f1;font-weight:400;">1</div>
<div class="t" style="left:220.20px;top:435.17px;height:9.76px;line-height:9.76px;font-size:6.1px;color:#eff0f1;font-weight:400;">1</div>
<div class="t" style="left:258.60px;top:400.47px;height:9.76px;line-height:9.76px;font-size:6.1px;color:#eff0f1;font-weight:700;">重频方式</div>
<div class="t" style="left:258.10px;top:412.17px;height:9.76px;line-height:9.76px;font-size:6.1px;color:#eff0f1;font-weight:400;">固定</div>
<div class="t" style="left:258.10px;top:423.67px;height:9.76px;line-height:9.76px;font-size:6.1px;color:#eff0f1;font-weight:400;">固定</div>
<div class="t" style="left:258.10px;top:435.17px;height:9.76px;line-height:9.76px;font-size:6.1px;color:#eff0f1;font-weight:400;">固定</div>
<div class="t" style="left:296.50px;top:400.47px;height:9.76px;line-height:9.76px;font-size:6.1px;color:#eff0f1;font-weight:700;">调制方式</div>
<div class="t" style="left:296.00px;top:412.17px;height:9.76px;line-height:9.76px;font-size:6.1px;color:#eff0f1;font-weight:400;">线性调频</div>
<div class="t" style="left:296.00px;top:423.67px;height:9.76px;line-height:9.76px;font-size:6.1px;color:#eff0f1;font-weight:400;">三角调频</div>
<div class="t" style="left:296.00px;top:435.17px;height:9.76px;line-height:9.76px;font-size:6.1px;color:#eff0f1;font-weight:400;">非线性调频</div>
<div class="t" style="left:334.40px;top:400.47px;height:9.76px;line-height:9.76px;font-size:6.1px;color:#eff0f1;font-weight:700;">延迟时间</div>
<div class="t" style="left:333.90px;top:412.17px;height:9.76px;line-height:9.76px;font-size:6.1px;color:#eff0f1;font-weight:400;">0μs</div>
<div class="t" style="left:333.90px;top:423.67px;height:9.76px;line-height:9.76px;font-size:6.1px;color:#eff0f1;font-weight:400;">0μs</div>
<div class="t" style="left:333.90px;top:435.17px;height:9.76px;line-height:9.76px;font-size:6.1px;color:#eff0f1;font-weight:400;">0μs</div>
<div class="t" style="left:372.30px;top:400.47px;height:9.76px;line-height:9.76px;font-size:6.1px;color:#eff0f1;font-weight:700;">上升时间</div>
<div class="t" style="left:371.80px;top:412.17px;height:9.76px;line-height:9.76px;font-size:6.1px;color:#eff0f1;font-weight:400;">10μs</div>
<div class="t" style="left:371.80px;top:423.67px;height:9.76px;line-height:9.76px;font-size:6.1px;color:#eff0f1;font-weight:400;">10μs</div>
<div class="t" style="left:371.80px;top:435.17px;height:9.76px;line-height:9.76px;font-size:6.1px;color:#eff0f1;font-weight:400;">10μs</div>
<div class="t" style="left:410.20px;top:400.47px;height:9.76px;line-height:9.76px;font-size:6.1px;color:#eff0f1;font-weight:700;">脉冲宽度</div>
<div class="t" style="left:409.70px;top:412.17px;height:9.76px;line-height:9.76px;font-size:6.1px;color:#eff0f1;font-weight:400;">10μs</div>
<div class="t" style="left:409.70px;top:423.67px;height:9.76px;line-height:9.76px;font-size:6.1px;color:#eff0f1;font-weight:400;">10μs</div>
<div class="t" style="left:409.70px;top:435.17px;height:9.76px;line-height:9.76px;font-size:6.1px;color:#eff0f1;font-weight:400;">10μs</div>
<div class="t" style="left:448.10px;top:400.47px;height:9.76px;line-height:9.76px;font-size:6.1px;color:#eff0f1;font-weight:700;">下降时间</div>
<div class="t" style="left:447.60px;top:412.17px;height:9.76px;line-height:9.76px;font-size:6.1px;color:#eff0f1;font-weight:400;">10μs</div>
<div class="t" style="left:447.60px;top:423.67px;height:9.76px;line-height:9.76px;font-size:6.1px;color:#eff0f1;font-weight:400;">10μs</div>
<div class="t" style="left:447.60px;top:435.17px;height:9.76px;line-height:9.76px;font-size:6.1px;color:#eff0f1;font-weight:400;">10μs</div>
<div class="t" style="left:486.00px;top:400.47px;height:9.76px;line-height:9.76px;font-size:6.1px;color:#eff0f1;font-weight:700;">关闭时间</div>
<div class="t" style="left:485.50px;top:412.17px;height:9.76px;line-height:9.76px;font-size:6.1px;color:#eff0f1;font-weight:400;">20μs</div>
<div class="t" style="left:485.50px;top:423.67px;height:9.76px;line-height:9.76px;font-size:6.1px;color:#eff0f1;font-weight:400;">20μs</div>
<div class="t" style="left:485.50px;top:435.17px;height:9.76px;line-height:9.76px;font-size:6.1px;color:#eff0f1;font-weight:400;">20μs</div>
<div class="t" style="left:523.90px;top:400.47px;height:9.76px;line-height:9.76px;font-size:6.1px;color:#eff0f1;font-weight:700;">幅度偏置</div>
<div class="t" style="left:523.40px;top:412.17px;height:9.76px;line-height:9.76px;font-size:6.1px;color:#eff0f1;font-weight:400;">0</div>
<div class="t" style="left:523.40px;top:423.67px;height:9.76px;line-height:9.76px;font-size:6.1px;color:#eff0f1;font-weight:400;">0</div>
<div class="t" style="left:523.40px;top:435.17px;height:9.76px;line-height:9.76px;font-size:6.1px;color:#eff0f1;font-weight:400;">0</div>
<div class="t" style="left:561.80px;top:400.47px;height:9.76px;line-height:9.76px;font-size:6.1px;color:#eff0f1;font-weight:700;">频率偏置</div>
<div class="t" style="left:561.30px;top:412.17px;height:9.76px;line-height:9.76px;font-size:6.1px;color:#eff0f1;font-weight:400;">0</div>
<div class="t" style="left:561.30px;top:423.67px;height:9.76px;line-height:9.76px;font-size:6.1px;color:#eff0f1;font-weight:400;">0</div>
<div class="t" style="left:561.30px;top:435.17px;height:9.76px;line-height:9.76px;font-size:6.1px;color:#eff0f1;font-weight:400;">0</div>
<div class="t" style="left:599.70px;top:400.47px;height:9.76px;line-height:9.76px;font-size:6.1px;color:#eff0f1;font-weight:700;">相位偏置</div>
<div class="t" style="left:599.20px;top:412.17px;height:9.76px;line-height:9.76px;font-size:6.1px;color:#eff0f1;font-weight:400;">0</div>
<div class="t" style="left:599.20px;top:423.67px;height:9.76px;line-height:9.76px;font-size:6.1px;color:#eff0f1;font-weight:400;">0</div>
<div class="t" style="left:599.20px;top:435.17px;height:9.76px;line-height:9.76px;font-size:6.1px;color:#eff0f1;font-weight:400;">0</div>
<div class="t" style="left:770.15px;width:300px;text-align:center;top:405.70px;height:9.68px;line-height:9.68px;font-size:6.05px;color:#eff0f1;font-weight:400;">信号添加按钮</div>
<div class="t" style="left:770.20px;width:300px;text-align:center;top:423.36px;height:9.44px;line-height:9.44px;font-size:5.9px;color:#eff0f1;font-weight:400;">使用连续波雷达</div>
<div class="t" style="left:770.20px;width:300px;text-align:center;top:438.36px;height:9.44px;line-height:9.44px;font-size:5.9px;color:#eff0f1;font-weight:400;">从库中插入脉冲</div>
<div class="t" style="left:770.20px;width:300px;text-align:center;top:453.36px;height:9.44px;line-height:9.44px;font-size:5.9px;color:#eff0f1;font-weight:400;">从序列库添加</div>
<div class="t" style="left:770.05px;width:300px;text-align:center;top:481.00px;height:9.68px;line-height:9.68px;font-size:6.05px;color:#eff0f1;font-weight:400;">脉冲序列操作按钮</div>
<div class="t" style="left:893.10px;top:496.76px;height:9.44px;line-height:9.44px;font-size:5.9px;color:#8a8e92;font-weight:400;">上移</div>
<div class="t" style="left:942.60px;top:496.76px;height:9.44px;line-height:9.44px;font-size:5.9px;color:#8a8e92;font-weight:400;">下移</div>
<div class="t" style="left:745.50px;width:300px;text-align:center;top:520.81px;height:9.44px;line-height:9.44px;font-size:5.9px;color:#8a8e92;font-weight:400;">编辑脉冲</div>
<div class="t" style="left:936.70px;top:520.81px;height:9.44px;line-height:9.44px;font-size:5.9px;color:#8a8e92;font-weight:400;">删除脉冲</div>
<div class="t" style="left:887.20px;top:545.66px;height:9.44px;line-height:9.44px;font-size:5.9px;color:#eff0f1;font-weight:400;">添加脉冲</div>
<div class="t" style="left:795.00px;width:300px;text-align:center;top:545.66px;height:9.44px;line-height:9.44px;font-size:5.9px;color:#eff0f1;font-weight:400;">收藏序列</div>
</div></body></html>
